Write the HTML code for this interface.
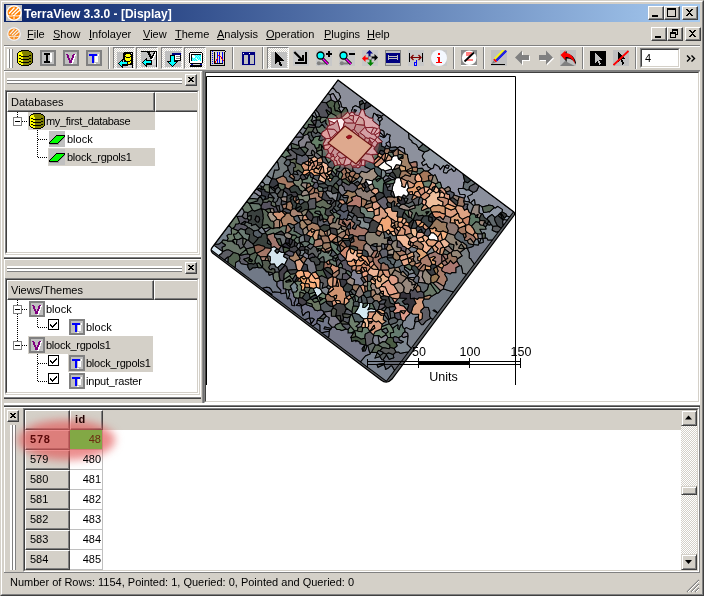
<!DOCTYPE html>
<html>
<head>
<meta charset="utf-8">
<title>TerraView</title>
<style>
*{box-sizing:border-box;margin:0;padding:0}
html,body{width:704px;height:596px;overflow:hidden;background:#d4d0c8}
body{font-family:"Liberation Sans",sans-serif;font-size:11px;color:#000;position:relative;opacity:0.999}
.abs{position:absolute}
#frame{position:absolute;left:0;top:0;width:704px;height:596px;background:#d4d0c8;
 border-top:1px solid #d4d0c8;border-left:1px solid #d4d0c8;border-right:1px solid #404040;border-bottom:1px solid #404040}
#frame2{position:absolute;left:1px;top:1px;width:702px;height:594px;
 border-top:1px solid #fff;border-left:1px solid #fff;border-right:1px solid #808080;border-bottom:1px solid #808080}
#title{position:absolute;left:4px;top:4px;width:696px;height:18px;background:linear-gradient(90deg,#0a246a 0%,#a6caf0 100%)}
#title .txt{position:absolute;left:20px;top:2px;color:#fff;font-weight:bold;font-size:12px;line-height:16px;white-space:nowrap}
.wbtn{position:absolute;width:16px;height:14px;background:#d4d0c8;
 border-top:1px solid #fff;border-left:1px solid #fff;border-right:1px solid #404040;border-bottom:1px solid #404040}
.wbtn:before{content:"";position:absolute;left:0;top:0;width:13px;height:11px;border-right:1px solid #808080;border-bottom:1px solid #808080}
.menu{position:absolute;top:23px;left:4px;width:696px;height:20px}
.menu span{position:absolute;top:5px;line-height:13px;font-size:11px;white-space:nowrap}
.menu u{text-decoration:underline}
.sunken{border-top:1px solid #808080;border-left:1px solid #808080;border-right:1px solid #fff;border-bottom:1px solid #fff}
.sunken2{border-top:1px solid #404040;border-left:1px solid #404040;border-right:1px solid #d4d0c8;border-bottom:1px solid #d4d0c8}
.raised{border-top:1px solid #fff;border-left:1px solid #fff;border-right:1px solid #808080;border-bottom:1px solid #808080}
.t{position:absolute;white-space:nowrap;line-height:13px;font-size:11px}
.hl{background:#d4d0c8}

.hdl{height:3px;border-top:2px solid #fff;border-bottom:1px solid #808080}
.vhdl{width:3px;border-left:2px solid #fff;border-right:1px solid #808080}
.cbtn{position:absolute;width:12px;height:12px;background:#d4d0c8;border-top:1px solid #fff;border-left:1px solid #fff;border-right:1px solid #404040;border-bottom:1px solid #404040}
.cbtn:before{content:"";position:absolute;left:0;top:0;width:9px;height:9px;border-right:1px solid #808080;border-bottom:1px solid #808080}
.hdr{background:#d4d0c8;border-top:1px solid #fff;border-left:1px solid #fff;border-right:1px solid #404040;border-bottom:1px solid #404040}
.hdr:before{content:"";position:absolute;left:0;top:0;right:0;bottom:0;border-right:1px solid #808080;border-bottom:1px solid #808080}
.hdr span{position:absolute;left:3px;top:2px;line-height:14px;font-size:11px}

.ic{shape-rendering:crispEdges;overflow:visible}
.tog{width:22px;height:22px;border-top:1px solid #808080;border-left:1px solid #808080;border-right:1px solid #fff;border-bottom:1px solid #fff;background:repeating-conic-gradient(#fff 0% 25%,#d4d0c8 0% 50%) 0 0/2px 2px}

.dith{background:repeating-conic-gradient(#fff 0% 25%,#d4d0c8 0% 50%) 0 0/2px 2px}
.sbtn{width:16px;height:16px;background:#d4d0c8;border-top:1px solid #d4d0c8;border-left:1px solid #d4d0c8;border-right:1px solid #404040;border-bottom:1px solid #404040;box-shadow:inset 1px 1px 0 #fff,inset -1px -1px 0 #808080}

.doth{height:1px;background:repeating-linear-gradient(90deg,#000 0 1px,transparent 1px 2px)}
.dotv{width:1px;background:repeating-linear-gradient(180deg,#000 0 1px,transparent 1px 2px)}
</style>
</head>
<body>
<svg width="0" height="0" style="position:absolute">
<defs>
<symbol id="i-box" viewBox="0 0 16 16">
<rect x="0" y="0" width="16" height="16" fill="#808080"/><rect x="2" y="2" width="12" height="12" fill="#c0c0c0"/>
</symbol>
<symbol id="i-I" viewBox="0 0 16 16"><use href="#i-box"/>
<path d="M10 3h2v9h-2z" fill="#fff"/>
<path d="M4 3h6v2h-2v6h2v2h-6v-2h2v-6h-2z" fill="#000"/>
</symbol>
<symbol id="i-V" viewBox="0 0 16 16"><use href="#i-box"/>
<path d="M7 13l1 1 2 0 3 -9 -1 -1z" fill="#fff"/>
<path d="M3 4h2l2.500 6 2.500 -6h2l-3.500 9h-2z" fill="#800080"/>
</symbol>
<symbol id="i-T" viewBox="0 0 16 16"><use href="#i-box"/>
<path d="M9 6h4v-2h-1v8h-3z" fill="#fff"/><path d="M8 13h2v1h-2z" fill="#fff"/>
<path d="M3 4h8v2h-3v7h-2v-7h-3z" fill="#00f"/>
</symbol>

<symbol id="i-table" viewBox="0 0 16 16">
<rect width="16" height="16" fill="#c8c8c8"/>
<rect x="2" y="2" width="13" height="13" fill="#000080"/>
<rect x="3.500" y="5" width="4.500" height="9" fill="#c0c0c0"/>
<rect x="9.500" y="5" width="4.500" height="9" fill="#c0c0c0"/>
<rect x="3" y="3" width="1" height="1" fill="#fff"/><rect x="9" y="3" width="1" height="1" fill="#fff"/>
</symbol>
<symbol id="i-pointer" viewBox="0 0 16 16">
<rect width="16" height="16" fill="#c0c0c0"/>
<path d="M4 0v12l3 -3 2.300 5.500 2 -1 -2.300 -5 h4z" fill="#000"/>
</symbol>
<symbol id="i-corner" viewBox="0 0 16 16">
<rect width="16" height="16" fill="#c8c8c8"/>
<path d="M1.300 2 l7.500 7.500" stroke="#000" stroke-width="2.200" shape-rendering="auto"/>
<path d="M5 9.500h5v-4.500" stroke="#000" stroke-width="2" fill="none"/>
<path d="M2 13h11v-11.300" stroke="#000" stroke-width="2" fill="none"/>
</symbol>
<symbol id="i-zoomin" viewBox="0 0 16 16">
<rect width="16" height="16" fill="#c8c8c8"/>
<circle cx="2.800" cy="13.300" r="2" fill="#808080" shape-rendering="auto"/><path d="M2.800 13.500h6" stroke="#808080" stroke-width="2" stroke-linecap="round" fill="none" shape-rendering="auto"/>
<path d="M6.500 8.500l5.500 5.500" stroke="#000" stroke-width="3" shape-rendering="auto"/>
<path d="M6.500 8.500l5.500 5.500" stroke="#f0f" stroke-width="1.400" shape-rendering="auto"/>
<circle cx="4.500" cy="5.500" r="3.500" fill="#0ff" stroke="#000" stroke-width="1.300" shape-rendering="auto"/>
<path d="M10 3.500h6M13 0.500v6" stroke="#000" stroke-width="2"/>
</symbol>
<symbol id="i-zoomout" viewBox="0 0 16 16">
<rect width="16" height="16" fill="#c8c8c8"/>
<circle cx="2.800" cy="13.300" r="2" fill="#808080" shape-rendering="auto"/><path d="M2.800 13.500h6" stroke="#808080" stroke-width="2" stroke-linecap="round" fill="none" shape-rendering="auto"/>
<path d="M6.500 8.500l5.500 5.500" stroke="#000" stroke-width="3" shape-rendering="auto"/>
<path d="M6.500 8.500l5.500 5.500" stroke="#f0f" stroke-width="1.400" shape-rendering="auto"/>
<circle cx="4.500" cy="5.500" r="3.500" fill="#0ff" stroke="#000" stroke-width="1.300" shape-rendering="auto"/>
<path d="M10 3.500h6" stroke="#000" stroke-width="2"/>
</symbol>
<symbol id="i-pan" viewBox="0 0 16 16">
<rect width="16" height="16" fill="#c8c8c8"/>
<path d="M7.500 0l3.500 3.500h-2.500v3.500h-2v-3.500h-2.500z" fill="#000080" shape-rendering="auto"/>
<path d="M16 7.500l-3.500 3.500v-2.500h-3.500v-2h3.500v-2.500z" fill="#000" shape-rendering="auto"/>
<path d="M8.500 16l-3.500 -3.500h2.500v-3.500h2v3.500h2.500z" fill="#008000" shape-rendering="auto"/>
<path d="M0 8.500l3.500 -3.500v2.500h3.500v2h-3.500v2.500z" fill="#f00" shape-rendering="auto"/>
<rect x="6.500" y="6.500" width="3" height="3" fill="#c0c0c0" stroke="#808080"/>
</symbol>
<symbol id="i-bluerect" viewBox="0 0 16 16">
<rect x="0.500" y="0.500" width="15" height="15" fill="#c0c0c0" stroke="#808080"/>
<rect x="1" y="3" width="14" height="10" fill="#000080"/>
<path d="M3.500 5v5M12.500 5v5M4 6.500h8M4 8.500h8" stroke="#c0c0c0" stroke-width="1" fill="none"/>
</symbol>
<symbol id="i-dist" viewBox="0 0 16 16">
<rect width="16" height="16" fill="#c8c8c8"/>
<path d="M1.500 3v9M14.500 3v9" stroke="#000" stroke-width="1.300"/>
<path d="M3 7.500h10" stroke="#800000" stroke-width="1.300"/>
<path d="M5.500 5 l-2.500 2.500 l2.500 2.500 M10.500 5 l2.500 2.500 l-2.500 2.500" stroke="#800000" stroke-width="1.300" fill="none" shape-rendering="auto"/>
<path d="M8.500 10v5h-2.500v-3h2.500" stroke="#00f" stroke-width="1" fill="none"/>
</symbol>
<symbol id="i-info" viewBox="0 0 16 16">
<rect width="16" height="16" fill="#c8c8c8"/>
<circle cx="8" cy="8" r="8" fill="#f4f8ff" shape-rendering="auto"/>
<path d="M7 3h2v2h-2z M5.500 6.500h3.500v5h2v1.500h-6v-1.500h2v-3.500h-1.500z" fill="#f00"/>
</symbol>
<symbol id="i-nodraw" viewBox="0 0 16 16">
<rect width="16" height="16" fill="#8c8c8c"/><path d="M0 15.500h16" stroke="#fff"/>
<circle cx="8.200" cy="7.800" r="7.300" fill="#fff" shape-rendering="auto"/>
<path d="M5 2h6v4h-6zM5 9h7v2h-7z" fill="#ff8080"/>
<path d="M3.500 11.500l9.500 -9" stroke="#000" stroke-width="1.800" shape-rendering="auto"/>
</symbol>
<symbol id="i-pencil" viewBox="0 0 16 16">
<rect width="16" height="16" fill="#c0c0c0"/>
<path d="M3.500 9 l9.500 -9.500" stroke="#ff0" stroke-width="1.600" shape-rendering="auto"/>
<path d="M4.600 10.100 l10 -10" stroke="#000080" stroke-width="1" shape-rendering="auto"/>
<path d="M5.500 11 l10 -10" stroke="#00f" stroke-width="1.300" shape-rendering="auto"/>
<path d="M2.800 9.200l2.700 2.700" stroke="#f00" stroke-width="1.600" shape-rendering="auto"/>
<path d="M0.500 14 l2 -3.500 l2 2z" fill="#808080" shape-rendering="auto"/>
<path d="M0 14.500h14" stroke="#000" stroke-width="1.300"/>
</symbol>
<symbol id="i-left" viewBox="0 0 16 16">
<path d="M0 7.500l7 -7v4.500h7v5h-7v4.500z" fill="#fff" transform="translate(1,1)" shape-rendering="auto"/>
<path d="M0 7.500l7 -7v4.500h7v5h-7v4.500z" fill="#808080" shape-rendering="auto"/>
</symbol>
<symbol id="i-right" viewBox="0 0 16 16">
<path d="M15 7.500l-7 -7v4.500h-7v5h7v4.500z" fill="#fff" transform="translate(1,1)" shape-rendering="auto"/>
<path d="M15 7.500l-7 -7v4.500h-7v5h7v4.500z" fill="#808080" shape-rendering="auto"/>
</symbol>
<symbol id="i-undo" viewBox="0 0 16 16">
<rect width="16" height="16" fill="#c0c0c0"/>
<path d="M0 16 l5 -5 l10 5z" fill="#808080" shape-rendering="auto"/>
<path d="M1 5 l5 -5 v3 c5 0 9 4 10 12 c-2 -5 -5 -7.500 -10 -7.500 v3.500z" fill="#000" shape-rendering="auto" transform="translate(0.700,1)"/>
<path d="M0.500 5 l5 -4.500 v2.500 c5 0 9 4 9.500 11 c-2 -5 -5 -7 -9.500 -7 v3z" fill="#f00" shape-rendering="auto"/>
</symbol>
<symbol id="i-blackptr" viewBox="0 0 16 16">
<rect width="16" height="15" fill="#000"/>
<path d="M5 1v11l2.500 -2.500 2 4.500 1.500 -0.800 -2 -4.200 h3.500z" fill="#c0c0c0"/>
</symbol>
<symbol id="i-ptrred" viewBox="0 0 16 16">
<rect width="16" height="16" fill="#c0c0c0"/>
<path d="M5 1v11l2.500 -2.500 2 5 1.800 -0.800 -2.200 -4.700 h3.500z" fill="#000"/>
<path d="M0.500 15 l15 -14" stroke="#f00" stroke-width="1.800" shape-rendering="auto"/>
</symbol>
<symbol id="i-globe" viewBox="0 0 16 16">
<circle cx="8" cy="8" r="7.800" fill="#fff"/>
<circle cx="8" cy="8" r="6.400" fill="#ff8000"/>
<path d="M3 8.500L8.500 2.500M5.500 9.500L12 3M8.500 9.800L14 5" stroke="#fff" stroke-width="1.300" fill="none"/>
<path d="M1.500 10.500c2.500 0.800 4.500 0.800 6.500 -0.200c2 1 4 1 6.500 -0.300M8 10.500v3.500" stroke="#fff" stroke-width="1" fill="none"/>
</symbol>
<symbol id="i-dbarrow" viewBox="0 0 16 16"><rect width="16" height="16" fill="#c0c0c0"/><path fill="#000" d="M7 0h9v1h-9zM6 1h8v1h-8zM15 1h1v1h-1zM6 2h3v1h-3zM13 2h3v1h-3zM6 3h2v1h-2zM14 3h2v1h-2zM6 4h3v1h-3zM13 4h3v1h-3zM6 5h2v1h-2zM9 5h4v1h-4zM14 5h2v1h-2zM6 6h2v1h-2zM14 6h2v1h-2zM5 7h3v1h-3zM14 7h2v1h-2zM4 8h2v1h-2zM7 8h2v1h-2zM13 8h3v1h-3zM3 9h1v1h-1zM5 9h1v1h-1zM7 9h6v1h-6zM14 9h2v1h-2zM2 10h1v1h-1zM10 10h1v1h-1zM14 10h2v1h-2zM1 11h1v1h-1zM10 11h1v1h-1zM13 11h3v1h-3zM2 12h1v1h-1zM5 12h11v1h-11zM3 13h1v1h-1zM5 13h6v1h-6zM15 13h1v1h-1zM4 14h2v1h-2zM15 14h1v1h-1zM5 15h1v1h-1zM15 15h1v1h-1z"/><path fill="#fff" d="M14 1h1v1h-1z"/><path fill="#ff0" d="M9 2h4v1h-4zM8 3h6v1h-6zM9 4h4v1h-4zM8 5h1v1h-1zM13 5h1v1h-1zM8 6h6v1h-6zM8 7h6v1h-6zM9 8h4v1h-4zM13 9h1v1h-1zM11 10h3v1h-3zM11 11h2v1h-2z"/><path fill="#0ff" d="M4 9h1v1h-1zM3 10h7v1h-7zM2 11h8v1h-8zM3 12h2v1h-2zM4 13h1v1h-1z"/><path fill="#d8d8d8" d="M11 13h4v1h-4zM9 14h5v1h-5z"/></symbol>
<symbol id="i-varrow" viewBox="0 0 16 16"><rect width="16" height="16" fill="#c0c0c0"/><path fill="#000" d="M0 0h16v1h-16zM6 1h3v1h-3zM13 1h1v1h-1zM15 1h1v1h-1zM7 2h2v1h-2zM12 2h2v1h-2zM15 2h1v1h-1zM7 3h3v1h-3zM12 3h1v1h-1zM15 3h1v1h-1zM8 4h2v1h-2zM11 4h2v1h-2zM15 4h1v1h-1zM8 5h4v1h-4zM15 5h1v1h-1zM9 6h3v1h-3zM15 6h1v1h-1zM5 7h1v1h-1zM9 7h2v1h-2zM15 7h1v1h-1zM4 8h2v1h-2zM15 8h1v1h-1zM3 9h1v1h-1zM5 9h6v1h-6zM15 9h1v1h-1zM2 10h1v1h-1zM10 10h1v1h-1zM15 10h1v1h-1zM1 11h1v1h-1zM10 11h1v1h-1zM15 11h1v1h-1zM2 12h1v1h-1zM5 12h6v1h-6zM15 12h1v1h-1zM3 13h1v1h-1zM5 13h6v1h-6zM15 13h1v1h-1zM4 14h2v1h-2zM15 14h1v1h-1zM5 15h1v1h-1zM15 15h1v1h-1z"/><path fill="#fff" d="M14 1h1v1h-1zM14 2h1v1h-1zM13 3h2v1h-2zM13 4h1v1h-1zM12 5h2v1h-2zM12 6h1v1h-1zM11 7h2v1h-2zM10 8h2v1h-2z"/><path fill="#c0c0c0" d="M9 2h2v1h-2zM10 3h1v1h-1z"/><path fill="#0ff" d="M4 9h1v1h-1zM3 10h7v1h-7zM2 11h8v1h-8zM3 12h2v1h-2zM4 13h1v1h-1z"/><path fill="#d8d8d8" d="M11 9h4v1h-4zM11 10h4v1h-4zM11 11h4v1h-4zM11 12h4v1h-4zM11 13h4v1h-4z"/></symbol>
<symbol id="i-downwin" viewBox="0 0 16 16"><rect width="16" height="16" fill="#c0c0c0"/><path fill="#000080" d="M7 2h9v1h-9zM7 3h9v1h-9z"/><path fill="#000" d="M5 4h5v1h-5zM15 4h1v1h-1zM5 5h1v1h-1zM9 5h1v1h-1zM15 5h1v1h-1zM5 6h1v1h-1zM9 6h1v1h-1zM15 6h1v1h-1zM5 7h1v1h-1zM9 7h1v1h-1zM15 7h1v1h-1zM5 8h1v1h-1zM9 8h1v1h-1zM15 8h1v1h-1zM5 9h1v1h-1zM9 9h7v1h-7zM2 10h4v1h-4zM9 10h4v1h-4zM3 11h1v1h-1zM11 11h1v1h-1zM4 12h1v1h-1zM10 12h1v1h-1zM5 13h1v1h-1zM9 13h1v1h-1zM6 14h1v1h-1zM8 14h1v1h-1zM7 15h1v1h-1z"/><path fill="#fff" d="M10 4h5v1h-5zM10 5h1v1h-1zM10 6h5v1h-5zM10 7h1v1h-1zM10 8h5v1h-5z"/><path fill="#0ff" d="M6 5h3v1h-3zM6 6h3v1h-3zM6 7h3v1h-3zM6 8h3v1h-3zM6 9h3v1h-3zM6 10h3v1h-3zM4 11h7v1h-7zM5 12h5v1h-5zM6 13h3v1h-3zM7 14h1v1h-1z"/><path fill="#808080" d="M11 5h4v1h-4zM11 7h4v1h-4z"/></symbol>
<symbol id="i-monitor" viewBox="0 0 14 15"><path fill="#000" d="M1 0h12v1h-12zM0 1h1v1h-1zM13 1h1v1h-1zM0 2h1v1h-1zM2 2h10v1h-10zM13 2h1v1h-1zM0 3h1v1h-1zM2 3h1v1h-1zM13 3h1v1h-1zM0 4h1v1h-1zM2 4h1v1h-1zM13 4h1v1h-1zM0 5h1v1h-1zM2 5h1v1h-1zM13 5h1v1h-1zM0 6h1v1h-1zM2 6h1v1h-1zM13 6h1v1h-1zM0 7h1v1h-1zM2 7h1v1h-1zM13 7h1v1h-1zM0 8h1v1h-1zM2 8h1v1h-1zM13 8h1v1h-1zM0 9h1v1h-1zM13 9h1v1h-1zM0 10h1v1h-1zM13 10h1v1h-1zM1 11h12v1h-12zM1 13h12v1h-12zM1 14h12v1h-12z"/><path fill="#fff" d="M1 1h12v1h-12zM1 2h1v1h-1zM12 2h1v1h-1zM1 3h1v1h-1zM3 3h2v1h-2zM12 3h1v1h-1zM1 4h1v1h-1zM3 4h3v1h-3zM12 4h1v1h-1zM1 5h1v1h-1zM4 5h2v1h-2zM12 5h1v1h-1zM1 6h1v1h-1zM7 6h1v1h-1zM12 6h1v1h-1zM1 7h1v1h-1zM8 7h1v1h-1zM12 7h1v1h-1zM1 8h1v1h-1zM9 8h2v1h-2zM12 8h1v1h-1zM1 9h12v1h-12zM1 10h12v1h-12z"/><path fill="#80ffff" d="M5 3h1v1h-1zM7 3h1v1h-1zM9 3h1v1h-1zM6 4h1v1h-1zM8 4h1v1h-1zM10 4h1v1h-1zM3 5h1v1h-1zM7 5h1v1h-1zM9 5h1v1h-1zM11 5h1v1h-1zM4 6h1v1h-1zM6 6h1v1h-1zM9 6h1v1h-1zM3 7h1v1h-1zM5 7h1v1h-1zM7 7h1v1h-1zM10 7h1v1h-1zM4 8h1v1h-1zM6 8h1v1h-1zM8 8h1v1h-1z"/><path fill="#0ff" d="M6 3h1v1h-1zM8 3h1v1h-1zM10 3h2v1h-2zM7 4h1v1h-1zM9 4h1v1h-1zM11 4h1v1h-1zM6 5h1v1h-1zM8 5h1v1h-1zM10 5h1v1h-1zM3 6h1v1h-1zM5 6h1v1h-1zM8 6h1v1h-1zM10 6h2v1h-2zM4 7h1v1h-1zM6 7h1v1h-1zM9 7h1v1h-1zM11 7h1v1h-1zM3 8h1v1h-1zM5 8h1v1h-1zM7 8h1v1h-1zM11 8h1v1h-1z"/><path fill="#0000c0" d="M2 12h2v1h-2zM11 12h2v1h-2z"/><path fill="#d8d8d8" d="M5 12h5v1h-5z"/></symbol>
<symbol id="i-graph" viewBox="0 0 17 16"><rect width="17" height="16" fill="#d4d0c8"/><path fill="#000" d="M0 0h16v1h-16zM0 1h1v1h-1zM16 1h1v1h-1zM0 2h1v1h-1zM4 2h1v1h-1zM15 2h1v1h-1zM0 3h1v1h-1zM4 3h1v1h-1zM15 3h1v1h-1zM0 4h1v1h-1zM4 4h1v1h-1zM15 4h1v1h-1zM0 5h1v1h-1zM4 5h1v1h-1zM15 5h1v1h-1zM0 6h1v1h-1zM4 6h1v1h-1zM15 6h1v1h-1zM0 7h1v1h-1zM4 7h1v1h-1zM15 7h1v1h-1zM0 8h1v1h-1zM4 8h1v1h-1zM15 8h1v1h-1zM0 9h1v1h-1zM4 9h1v1h-1zM15 9h1v1h-1zM0 10h1v1h-1zM4 10h1v1h-1zM15 10h1v1h-1zM0 11h1v1h-1zM4 11h1v1h-1zM15 11h1v1h-1zM0 12h1v1h-1zM4 12h1v1h-1zM15 12h1v1h-1zM0 13h1v1h-1zM4 13h10v1h-10zM15 13h1v1h-1zM0 14h1v1h-1zM15 14h1v1h-1zM0 15h16v1h-16z"/><path fill="#d4d0c8" d="M1 1h1v1h-1zM3 1h12v1h-12zM1 2h3v1h-3zM5 2h2v1h-2zM8 2h2v1h-2zM11 2h2v1h-2zM14 2h1v1h-1zM1 3h1v1h-1zM3 3h1v1h-1zM5 3h1v1h-1zM14 3h1v1h-1zM1 4h3v1h-3zM5 4h1v1h-1zM14 4h1v1h-1zM1 5h1v1h-1zM3 5h1v1h-1zM5 5h1v1h-1zM14 5h1v1h-1zM1 6h3v1h-3zM5 6h1v1h-1zM14 6h1v1h-1zM1 7h1v1h-1zM3 7h1v1h-1zM5 7h1v1h-1zM14 7h1v1h-1zM1 8h3v1h-3zM5 8h1v1h-1zM14 8h1v1h-1zM1 9h1v1h-1zM3 9h1v1h-1zM5 9h1v1h-1zM14 9h1v1h-1zM1 10h3v1h-3zM5 10h1v1h-1zM1 11h1v1h-1zM3 11h1v1h-1zM14 11h1v1h-1zM1 12h3v1h-3zM14 12h1v1h-1zM1 13h1v1h-1zM3 13h1v1h-1zM14 13h1v1h-1zM1 14h14v1h-14z"/><path fill="#00f" d="M2 1h1v1h-1zM7 2h1v1h-1zM10 2h1v1h-1zM13 2h1v1h-1zM2 3h1v1h-1zM7 3h1v1h-1zM10 3h1v1h-1zM13 3h1v1h-1zM7 4h1v1h-1zM10 4h1v1h-1zM13 4h1v1h-1zM2 5h1v1h-1zM7 5h1v1h-1zM13 5h1v1h-1zM7 6h1v1h-1zM10 6h1v1h-1zM13 6h1v1h-1zM2 7h1v1h-1zM7 7h1v1h-1zM10 7h1v1h-1zM13 7h1v1h-1zM10 8h1v1h-1zM13 8h1v1h-1zM2 9h1v1h-1zM7 9h1v1h-1zM10 9h1v1h-1zM7 10h1v1h-1zM10 10h1v1h-1zM13 10h1v1h-1zM2 11h1v1h-1zM7 11h1v1h-1zM10 11h1v1h-1zM13 11h1v1h-1zM7 12h1v1h-1zM10 12h1v1h-1zM13 12h1v1h-1zM2 13h1v1h-1z"/><path fill="#e8e4c8" d="M6 3h1v1h-1zM8 3h2v1h-2zM11 3h2v1h-2zM6 4h1v1h-1zM8 4h2v1h-2zM11 4h2v1h-2zM6 5h1v1h-1zM8 5h1v1h-1zM11 5h2v1h-2zM6 6h1v1h-1zM9 6h1v1h-1zM12 6h1v1h-1zM6 7h1v1h-1zM9 7h1v1h-1zM11 7h1v1h-1zM6 8h1v1h-1zM8 8h2v1h-2zM11 8h1v1h-1zM8 9h2v1h-2zM11 9h2v1h-2zM8 10h2v1h-2zM11 10h2v1h-2zM6 11h1v1h-1zM8 11h2v1h-2zM11 11h2v1h-2zM6 12h1v1h-1zM8 12h2v1h-2zM11 12h2v1h-2z"/><path fill="#f00" d="M9 5h2v1h-2zM8 6h1v1h-1zM11 6h1v1h-1zM8 7h1v1h-1zM12 7h1v1h-1zM7 8h1v1h-1zM12 8h1v1h-1zM6 9h1v1h-1zM13 9h1v1h-1zM6 10h1v1h-1zM14 10h1v1h-1zM5 11h1v1h-1zM5 12h1v1h-1z"/></symbol>
<symbol id="i-db" viewBox="0 0 16 16"><path fill="#000" d="M4 0h8v1h-8zM2 1h2v1h-2zM12 1h2v1h-2zM1 2h1v1h-1zM14 2h1v1h-1zM0 3h1v1h-1zM15 3h1v1h-1zM0 4h1v1h-1zM15 4h1v1h-1zM0 5h1v1h-1zM2 5h2v1h-2zM12 5h2v1h-2zM15 5h1v1h-1zM0 6h1v1h-1zM4 6h8v1h-8zM15 6h1v1h-1zM0 7h1v1h-1zM15 7h1v1h-1zM0 8h1v1h-1zM2 8h2v1h-2zM12 8h2v1h-2zM15 8h1v1h-1zM0 9h1v1h-1zM4 9h8v1h-8zM15 9h1v1h-1zM0 10h1v1h-1zM15 10h1v1h-1zM0 11h1v1h-1zM2 11h2v1h-2zM12 11h2v1h-2zM15 11h1v1h-1zM0 12h1v1h-1zM4 12h8v1h-8zM15 12h1v1h-1zM1 13h1v1h-1zM14 13h1v1h-1zM2 14h2v1h-2zM12 14h2v1h-2zM4 15h8v1h-8z"/><path fill="#808000" d="M4 1h8v1h-8zM5 2h9v1h-9zM5 3h10v1h-10zM6 4h9v1h-9zM6 5h6v1h-6zM14 5h1v1h-1zM12 6h3v1h-3zM6 7h9v1h-9zM6 8h6v1h-6zM14 8h1v1h-1zM12 9h3v1h-3zM6 10h9v1h-9zM6 11h6v1h-6zM14 11h1v1h-1zM12 12h3v1h-3zM6 13h8v1h-8zM6 14h6v1h-6z"/><path fill="#ff0" d="M2 2h3v1h-3zM1 3h4v1h-4zM1 4h5v1h-5zM1 5h1v1h-1zM4 5h2v1h-2zM1 6h3v1h-3zM1 7h5v1h-5zM1 8h1v1h-1zM4 8h2v1h-2zM1 9h3v1h-3zM1 10h5v1h-5zM1 11h1v1h-1zM4 11h2v1h-2zM1 12h3v1h-3zM2 13h4v1h-4zM4 14h2v1h-2z"/></symbol>
<symbol id="i-layer" viewBox="0 0 16 16"><path fill="#000" d="M7 4h9v1h-9zM6 5h1v1h-1zM15 5h1v1h-1zM5 6h1v1h-1zM14 6h1v1h-1zM4 7h1v1h-1zM13 7h1v1h-1zM3 8h1v1h-1zM12 8h1v1h-1zM2 9h1v1h-1zM11 9h1v1h-1zM1 10h1v1h-1zM10 10h1v1h-1zM0 11h1v1h-1zM9 11h1v1h-1zM0 12h9v1h-9z"/><path fill="#00ff00" d="M7 5h8v1h-8zM6 6h8v1h-8zM5 7h8v1h-8zM4 8h8v1h-8zM3 9h8v1h-8zM2 10h8v1h-8zM1 11h8v1h-8z"/><path fill="#989898" d="M15 6h1v1h-1zM14 7h1v1h-1zM13 8h1v1h-1zM12 9h1v1h-1zM11 10h1v1h-1zM10 11h1v1h-1zM9 12h1v1h-1zM1 13h9v1h-9z"/></symbol>
</defs></svg>
<div id="frame"></div><div id="frame2"></div>
<div id="title"><div class="txt">TerraView 3.3.0 - [Display]</div></div>
<div class="abs" style="left:6px;top:5px;width:16px;height:16px;background:#c0c0c0"></div>
<svg class="abs" style="left:6px;top:5px" width="16" height="16"><use href="#i-globe"/></svg>
<div class="abs" style="left:7px;top:27px;width:14px;height:14px;background:#cfcfcf"></div>
<svg class="abs" style="left:7px;top:27px;opacity:0.85" width="14" height="14"><use href="#i-globe"/></svg>
<!-- title buttons -->
<div class="wbtn" style="left:648px;top:6px"><svg width="14" height="12" style="position:absolute;left:0;top:0" shape-rendering="crispEdges"><rect x="3" y="8" width="6" height="2" fill="#000"/></svg></div>
<div class="wbtn" style="left:664px;top:6px"><svg width="14" height="12" style="position:absolute;left:0;top:0" shape-rendering="crispEdges"><rect x="2.500" y="1.500" width="8" height="8" fill="none" stroke="#000"/><rect x="2" y="1" width="9" height="2" fill="#000"/></svg></div>
<div class="wbtn" style="left:682px;top:6px"><svg width="14" height="12" style="position:absolute;left:0;top:0" shape-rendering="crispEdges"><path d="M3 2h2v1h1v1h1v-1h1v-1h2v1h-1v1h-1v1h-1v1h1v1h1v1h1v1h-2v-1h-1v-1h-1v1h-1v1h-2v-1h1v-1h1v-1h1v-1h-1v-1h-1v-1h-1z" fill="#000"/></svg></div>
<div class="menu">
<span style="left:23px"><u>F</u>ile</span>
<span style="left:49px"><u>S</u>how</span>
<span style="left:85px"><u>I</u>nfolayer</span>
<span style="left:139px"><u>V</u>iew</span>
<span style="left:171px"><u>T</u>heme</span>
<span style="left:213px"><u>A</u>nalysis</span>
<span style="left:262px"><u>O</u>peration</span>
<span style="left:320px"><u>P</u>lugins</span>
<span style="left:363px"><u>H</u>elp</span>
</div>
<div class="wbtn" style="left:651px;top:27px"><svg width="14" height="12" style="position:absolute;left:0;top:0" shape-rendering="crispEdges"><rect x="3" y="8" width="6" height="2" fill="#000"/></svg></div>
<div class="wbtn" style="left:667px;top:27px"><svg width="14" height="12" style="position:absolute;left:0;top:0" shape-rendering="crispEdges"><rect x="4.500" y="1.500" width="5" height="5" fill="none" stroke="#000"/><rect x="4" y="1" width="6" height="2" fill="#000"/><rect x="2.500" y="4.500" width="5" height="5" fill="#d4d0c8" stroke="#000"/><rect x="2" y="4" width="6" height="2" fill="#000"/></svg></div>
<div class="wbtn" style="left:685px;top:27px"><svg width="14" height="12" style="position:absolute;left:0;top:0" shape-rendering="crispEdges"><path d="M3 2h2v1h1v1h1v-1h1v-1h2v1h-1v1h-1v1h-1v1h1v1h1v1h1v1h-2v-1h-1v-1h-1v1h-1v1h-2v-1h1v-1h1v-1h1v-1h-1v-1h-1v-1h-1z" fill="#000"/></svg></div>

<!-- toolbar -->
<div class="abs" style="left:4px;top:45px;width:696px;height:1px;background:#808080"></div>
<div class="abs" style="left:4px;top:46px;width:696px;height:1px;background:#fff"></div>
<div class="abs" style="left:4px;top:46px;width:1px;height:24px;background:#fff"></div>
<div class="abs vhdl" style="left:7px;top:49px;height:19px"></div><div class="abs vhdl" style="left:10px;top:49px;height:19px"></div>
<svg class="abs ic" style="left:17px;top:50px" width="16" height="16"><use href="#i-db"/></svg>
<svg class="abs ic" style="left:40px;top:50px" width="16" height="16"><use href="#i-I"/></svg>
<svg class="abs ic" style="left:63px;top:50px" width="16" height="16"><use href="#i-V"/></svg>
<svg class="abs ic" style="left:86px;top:50px" width="16" height="16"><use href="#i-T"/></svg>
<div class="abs" style="left:108px;top:47px;width:2px;height:22px;border-left:1px solid #808080;border-right:1px solid #fff"></div>
<div class="abs tog" style="left:113px;top:47px"></div>
<div class="abs tog" style="left:136px;top:47px"></div>
<div class="abs tog" style="left:161px;top:47px"></div>
<div class="abs tog" style="left:184px;top:47px"></div>
<div class="abs" style="left:232px;top:47px;width:2px;height:22px;border-left:1px solid #808080;border-right:1px solid #fff"></div>
<div class="abs" style="left:262px;top:47px;width:2px;height:22px;border-left:1px solid #808080;border-right:1px solid #fff"></div>
<div class="abs tog" style="left:267px;top:47px"></div>
<div class="abs" style="left:453px;top:47px;width:2px;height:22px;border-left:1px solid #808080;border-right:1px solid #fff"></div>
<div class="abs" style="left:483px;top:47px;width:2px;height:22px;border-left:1px solid #808080;border-right:1px solid #fff"></div>
<div class="abs" style="left:582px;top:47px;width:2px;height:22px;border-left:1px solid #808080;border-right:1px solid #fff"></div>
<div class="abs" style="left:635px;top:47px;width:2px;height:22px;border-left:1px solid #808080;border-right:1px solid #fff"></div>
<div class="abs sunken" style="left:640px;top:48px;width:40px;height:20px"><div class="sunken2" style="width:100%;height:100%;background:#fff"></div></div>
<div class="t" style="left:645px;top:52px">4</div>
<svg class="abs ic" style="left:117px;top:52px" width="16" height="16"><use href="#i-dbarrow"/></svg>
<svg class="abs ic" style="left:141px;top:51px" width="16" height="16"><use href="#i-varrow"/></svg>
<svg class="abs ic" style="left:165px;top:51px" width="16" height="16"><use href="#i-downwin"/></svg>
<svg class="abs ic" style="left:189px;top:52px" width="14" height="15"><use href="#i-monitor"/></svg>
<svg class="abs ic" style="left:210px;top:50px" width="16" height="16"><use href="#i-graph"/></svg>
<svg class="abs ic" style="left:240px;top:50px" width="16" height="16"><use href="#i-table"/></svg>
<svg class="abs ic" style="left:271px;top:52px" width="16" height="16"><use href="#i-pointer"/></svg>
<svg class="abs ic" style="left:293px;top:50px" width="16" height="16"><use href="#i-corner"/></svg>
<svg class="abs ic" style="left:316px;top:50px" width="16" height="16"><use href="#i-zoomin"/></svg>
<svg class="abs ic" style="left:339px;top:50px" width="16" height="16"><use href="#i-zoomout"/></svg>
<svg class="abs ic" style="left:362px;top:50px" width="16" height="16"><use href="#i-pan"/></svg>
<svg class="abs ic" style="left:385px;top:50px" width="16" height="16"><use href="#i-bluerect"/></svg>
<svg class="abs ic" style="left:408px;top:50px" width="16" height="16"><use href="#i-dist"/></svg>
<svg class="abs ic" style="left:431px;top:50px" width="16" height="16"><use href="#i-info"/></svg>
<svg class="abs ic" style="left:461px;top:50px" width="16" height="16"><use href="#i-nodraw"/></svg>
<svg class="abs ic" style="left:491px;top:50px" width="16" height="16"><use href="#i-pencil"/></svg>
<svg class="abs ic" style="left:515px;top:50px" width="16" height="16"><use href="#i-left"/></svg>
<svg class="abs ic" style="left:538px;top:50px" width="16" height="16"><use href="#i-right"/></svg>
<svg class="abs ic" style="left:560px;top:50px" width="16" height="16"><use href="#i-undo"/></svg>
<svg class="abs ic" style="left:590px;top:51px" width="16" height="16"><use href="#i-blackptr"/></svg>
<svg class="abs ic" style="left:613px;top:50px" width="16" height="16"><use href="#i-ptrred"/></svg>
<svg class="abs" style="left:686px;top:55px" width="10" height="8"><path d="M1 0.500l3 3 -3 3M5.500 0.500l3 3 -3 3" stroke="#000" stroke-width="1.400" fill="none"/></svg>
<!-- toolbar bottom line -->
<div class="abs" style="left:4px;top:70px;width:696px;height:1px;background:#808080"></div>
<div class="abs" style="left:4px;top:71px;width:198px;height:1px;background:#fff"></div>
<!-- left dock area -->
<div class="abs" style="left:4px;top:71px;width:1px;height:328px;background:#fff"></div>
<div class="abs" style="left:200px;top:72px;width:1px;height:186px;background:#fff"></div>
<div class="abs" style="left:200px;top:260px;width:1px;height:138px;background:#fff"></div>
<div class="abs" style="left:202px;top:71px;width:1px;height:332px;background:#909090"></div>
<div class="abs" style="left:203px;top:71px;width:1px;height:332px;background:#707070"></div>
<!-- databases dock -->
<div class="abs hdl" style="left:7px;top:78px;width:175px"></div>
<div class="abs hdl" style="left:7px;top:81px;width:175px"></div>
<div class="cbtn" style="left:185px;top:74px"><svg width="10" height="10" style="position:absolute;left:0;top:0" shape-rendering="crispEdges"><path d="M2 2h2v1h-2zM6 2h2v1h-2zM3 3h4v1h-4zM4 4h2v1h-2zM3 5h4v1h-4zM2 6h2v1h-2zM6 6h2v1h-2z" fill="#000"/></svg></div>
<div class="abs sunken" style="left:5px;top:90px;width:194px;height:164px"><div class="sunken2" style="width:100%;height:100%;background:#fff"></div></div>
<div class="abs hdr" style="left:7px;top:92px;width:148px;height:20px"><span>Databases</span></div>
<div class="abs" style="left:155px;top:92px;width:42px;height:20px;overflow:hidden"><div class="abs hdr" style="left:0;top:0;width:60px;height:20px"></div></div>
<div class="abs hl" style="left:28px;top:112px;width:127px;height:18px"></div>
<div class="abs hl" style="left:48px;top:148px;width:107px;height:18px"></div>
<div class="abs" style="left:49px;top:131px;width:16px;height:16px;background:#c0c0c0"></div>
<div class="abs" style="left:49px;top:149px;width:16px;height:16px;background:#c0c0c0"></div>
<div class="t" style="left:46px;top:115px;letter-spacing:-0.33px">my_first_database</div>
<div class="t" style="left:67px;top:133px;">block</div>
<div class="t" style="left:67px;top:151px;letter-spacing:-0.25px">block_rgpols1</div>
<!-- dock separators -->
<div class="abs" style="left:4px;top:255px;width:197px;height:2px;background:#fff"></div>
<div class="abs" style="left:4px;top:257px;width:197px;height:1px;background:#808080"></div>
<div class="abs" style="left:4px;top:258px;width:197px;height:1px;background:#404040"></div>
<div class="abs" style="left:4px;top:259px;width:197px;height:1px;background:#fff"></div>
<!-- views dock -->
<div class="abs hdl" style="left:7px;top:266px;width:175px"></div>
<div class="abs hdl" style="left:7px;top:269px;width:175px"></div>
<div class="cbtn" style="left:185px;top:262px"><svg width="10" height="10" style="position:absolute;left:0;top:0" shape-rendering="crispEdges"><path d="M2 2h2v1h-2zM6 2h2v1h-2zM3 3h4v1h-4zM4 4h2v1h-2zM3 5h4v1h-4zM2 6h2v1h-2zM6 6h2v1h-2z" fill="#000"/></svg></div>
<div class="abs sunken" style="left:5px;top:278px;width:194px;height:116px"><div class="sunken2" style="width:100%;height:100%;background:#fff"></div></div>
<div class="abs hdr" style="left:7px;top:280px;width:147px;height:20px"><span>Views/Themes</span></div>
<div class="abs" style="left:154px;top:280px;width:43px;height:20px;overflow:hidden"><div class="abs hdr" style="left:0;top:0;width:60px;height:20px"></div></div>
<div class="abs hl" style="left:28px;top:336px;width:125px;height:18px"></div>
<div class="abs hl" style="left:68px;top:354px;width:85px;height:18px"></div>
<div class="t" style="left:46px;top:303px;">block</div>
<div class="t" style="left:86px;top:321px;">block</div>
<div class="t" style="left:46px;top:339px;letter-spacing:-0.25px">block_rgpols1</div>
<div class="t" style="left:86px;top:357px;letter-spacing:-0.25px">block_rgpols1</div>
<div class="t" style="left:86px;top:375px;letter-spacing:-0.2px">input_raster</div>
<div class="abs" style="left:4px;top:395px;width:197px;height:2px;background:#fff"></div>
<div class="abs" style="left:4px;top:397px;width:197px;height:1px;background:#808080"></div>
<div class="abs" style="left:4px;top:398px;width:197px;height:1px;background:#404040"></div>
<!-- tree deco -->
<div class="abs dotv" style="left:17px;top:112px;height:5px"></div>
<div class="abs doth" style="left:22px;top:121px;width:6px"></div>
<div class="abs" style="left:13px;top:117px;width:9px;height:9px;border:1px solid #808080;background:#fff"><div style="position:absolute;left:1px;top:3px;width:5px;height:1px;background:#000"></div></div>
<div class="abs dotv" style="left:37px;top:130px;height:28px"></div>
<div class="abs doth" style="left:38px;top:139px;width:10px"></div>
<div class="abs doth" style="left:38px;top:157px;width:10px"></div>
<svg class="abs ic" style="left:29px;top:113px" width="16" height="16"><use href="#i-db"/></svg>
<svg class="abs ic" style="left:49px;top:131px" width="16" height="16"><use href="#i-layer"/></svg>
<svg class="abs ic" style="left:49px;top:149px" width="16" height="16"><use href="#i-layer"/></svg>
<div class="abs dotv" style="left:17px;top:300px;height:42px"></div>
<div class="abs doth" style="left:22px;top:309px;width:6px"></div>
<div class="abs doth" style="left:22px;top:345px;width:6px"></div>
<div class="abs" style="left:13px;top:305px;width:9px;height:9px;border:1px solid #808080;background:#fff"><div style="position:absolute;left:1px;top:3px;width:5px;height:1px;background:#000"></div></div>
<div class="abs" style="left:13px;top:341px;width:9px;height:9px;border:1px solid #808080;background:#fff"><div style="position:absolute;left:1px;top:3px;width:5px;height:1px;background:#000"></div></div>
<div class="abs dotv" style="left:37px;top:318px;height:10px"></div>
<div class="abs doth" style="left:38px;top:327px;width:10px"></div>
<div class="abs dotv" style="left:37px;top:354px;height:28px"></div>
<div class="abs doth" style="left:38px;top:363px;width:10px"></div>
<div class="abs doth" style="left:38px;top:381px;width:10px"></div>
<svg class="abs ic" style="left:48px;top:319px" width="11" height="11"><rect x="0.500" y="0.500" width="10" height="10" fill="#fff" stroke="#000"/><path d="M2 5h1v1h1v1h1v-1h1v-1h1v-1h1v-1h1v2h-1v1h-1v1h-1v1h-1v1h-1v-1h-1v-1h-1z" fill="#000"/></svg>
<svg class="abs ic" style="left:48px;top:355px" width="11" height="11"><rect x="0.500" y="0.500" width="10" height="10" fill="#fff" stroke="#000"/><path d="M2 5h1v1h1v1h1v-1h1v-1h1v-1h1v-1h1v2h-1v1h-1v1h-1v1h-1v1h-1v-1h-1v-1h-1z" fill="#000"/></svg>
<svg class="abs ic" style="left:48px;top:373px" width="11" height="11"><rect x="0.500" y="0.500" width="10" height="10" fill="#fff" stroke="#000"/><path d="M2 5h1v1h1v1h1v-1h1v-1h1v-1h1v-1h1v2h-1v1h-1v1h-1v1h-1v1h-1v-1h-1v-1h-1z" fill="#000"/></svg>
<svg class="abs ic" style="left:29px;top:301px" width="16" height="16"><use href="#i-V"/></svg>
<svg class="abs ic" style="left:69px;top:319px" width="16" height="16"><use href="#i-T"/></svg>
<svg class="abs ic" style="left:29px;top:337px" width="16" height="16"><use href="#i-V"/></svg>
<svg class="abs ic" style="left:69px;top:355px" width="16" height="16"><use href="#i-T"/></svg>
<svg class="abs ic" style="left:69px;top:373px" width="16" height="16"><use href="#i-T"/></svg>
<!-- canvas -->
<div id="canvas" class="abs sunken" style="left:204px;top:71px;width:496px;height:332px"><div class="sunken2" style="width:100%;height:100%;background:#fff"></div></div>
<!-- MAP START -->
<svg class="abs" style="left:0;top:0" width="704" height="596" viewBox="0 0 704 596">
<defs><clipPath id="dia"><path d="M338 80 L513.600 211.700 Q515.500 213.500 514 215.500 L392 379 Q387 384.500 381 380 L212.500 253 Q210 250.500 212 247.500 Z"/></clipPath></defs>
<path d="M206.500 385V76.500H515.500V385" fill="none" stroke="#000" stroke-width="1"/>
<g clip-path="url(#dia)" stroke="#000" stroke-width="1.050" stroke-linejoin="round">
<path d="M200 70h330v330h-330z" fill="#5a5e62" stroke="none"/>
<path fill="#7a8372" d="M302.4 182.7L302.3 180.1L300.5 177.5L298.2 180.5L293.7 180.1L292.8 181.8L294.7 184.7L296.7 186.4L297.8 186.2L299.8 190.0L302.4 191.6L306.0 189.3L306.0 189.2L301.0 185.1Z"/>
<path fill="#7a8372" d="M309.5 199.5L309.7 199.0L309.2 194.4L302.6 196.0L300.9 194.5L297.8 194.8L297.3 195.7L298.8 199.3L299.4 199.7L302.7 199.6L304.7 201.8L307.5 202.3Z"/>
<path fill="#929aa4" d="M428.3 150.6L424.4 152.0L422.1 155.9L422.9 158.1L424.8 160.1L421.4 162.8L423.1 165.8L426.4 163.9L427.8 166.5L427.8 166.8L431.2 168.9L431.4 168.9L433.4 168.1L434.2 165.1L434.6 164.2L434.7 164.2L438.7 166.6L440.2 169.7L443.3 165.9L443.4 165.8L444.7 166.6L443.3 171.8L443.7 172.4L444.1 172.8L446.3 173.3L446.7 173.0L447.1 172.8L448.3 170.7L451.5 168.9L453.4 171.4L455.2 170.9L456.0 168.5L452.1 165.6L446.9 161.7L444.2 159.6L442.7 158.5L441.1 157.4L438.0 155.0L431.9 150.5L429.9 148.9ZM449.1 165.9L448.1 168.2L446.1 167.7L445.0 166.5L447.1 165.0Z"/>
<path fill="#929aa4" d="M423.3 144.0L421.3 142.5L418.5 140.4L417.0 139.3L408.9 133.1L408.6 133.7L408.9 138.6L411.7 140.9L412.1 142.5L416.6 144.9L416.7 145.5L418.3 147.7L418.6 148.4Z"/>
<path fill="#5d5c67" d="M249.3 257.6L250.1 254.8L247.8 253.8L239.3 255.4L239.9 258.5L239.3 260.4L240.6 263.1L242.0 264.1L245.4 264.4L247.7 264.9L248.3 263.8L248.1 262.4L244.9 260.3L243.7 259.2Z"/>
<path fill="#4e5f4a" d="M328.9 107.7L330.9 108.1L331.3 111.8L331.3 112.3L331.1 113.1L326.5 109.7L325.8 110.1L328.4 115.1L331.1 113.3L335.6 115.6L337.8 118.8L337.8 118.8L341.4 118.0L341.3 112.5L341.1 112.3L338.0 111.2L337.5 110.5L335.4 110.8L335.2 110.3L334.5 106.7L334.1 106.3L335.3 101.9L331.1 99.7L327.1 102.3L326.2 102.8Z"/>
<path fill="#5f5e65" d="M437.6 313.0L437.7 312.9L434.6 309.9L433.5 310.1L432.9 310.6Z"/>
<path fill="#5f5e65" d="M420.8 310.5L420.7 312.3L422.5 313.4L422.1 318.5L421.2 319.6L418.9 320.5L418.4 316.8L415.4 317.4L414.5 321.2L414.6 321.5L415.3 322.0L418.6 321.2L421.4 324.8L422.9 324.8L423.1 324.7L426.1 321.1L430.9 318.2L430.2 317.1L429.5 315.6L430.0 312.7L428.4 307.6L424.4 307.1Z"/>
<path fill="#697a6a" d="M332.1 210.1L330.3 210.6L330.1 211.9L332.8 214.1L332.7 214.8L334.8 217.3L333.0 219.0L332.7 222.4L335.2 222.9L337.4 218.3L339.2 218.5L340.6 215.3L336.9 213.2L336.5 212.0L333.7 212.8Z"/>
<path fill="#5f6f5f" d="M428.3 207.8L422.9 210.3L422.1 210.5L421.7 210.1L421.5 208.6L423.8 205.2L422.0 203.1L418.9 204.9L418.4 204.7L414.9 205.2L415.0 208.1L409.1 209.7L408.9 210.0L412.3 212.8L410.7 217.6L412.7 219.6L413.3 219.8L416.2 212.4L418.3 216.0L422.8 215.2L423.5 216.2L423.9 216.3L426.2 215.8L428.3 216.3L431.9 212.5L431.9 212.2L431.0 210.8L430.4 208.0ZM429.0 211.7L426.7 214.1L426.0 212.0Z"/>
<path fill="#79808a" d="M261.8 227.1L259.7 228.3L258.2 230.0L259.0 231.5L262.1 234.1L265.5 232.9L265.6 232.1L263.6 229.1Z"/>
<path fill="#5d5d67" d="M392.9 256.3L387.6 255.4L388.0 254.0L393.3 254.4Z"/>
<path fill="#8f8278" d="M409.0 281.0L411.8 282.4L411.9 285.1L411.9 285.1L415.8 284.0L413.5 287.8L414.5 288.4L415.4 288.7L417.8 284.9L417.3 283.5L417.0 283.5L413.6 281.1L413.5 280.2L407.5 277.9Z"/>
<path fill="#797e8b" d="M485.1 237.9L482.7 238.3L482.7 238.4L483.3 241.9L482.7 242.6L479.3 243.3L481.3 238.4L478.4 238.4L477.6 238.9L479.0 243.5L478.0 245.1L473.8 244.5L473.5 244.8L472.8 246.5L467.2 248.2L468.8 252.1L469.2 252.3L469.1 257.7L469.7 258.5L470.7 258.6L471.1 259.8L474.3 264.1L476.5 261.2L480.4 255.9L482.2 253.5L487.0 247.2L487.9 246.0L492.6 239.7L488.0 240.1L486.8 237.9Z"/>
<path fill="#898173" d="M368.2 231.5L366.2 233.3L365.0 235.5L365.3 240.7L366.6 242.3L366.6 243.0L370.3 245.9L371.3 245.6L372.5 244.4L376.0 243.5L377.1 243.8L376.7 246.6L381.6 245.9L382.0 243.5L384.7 244.6L388.2 244.1L387.4 241.1L387.5 241.0L388.6 237.6L384.3 238.2L384.3 238.2L384.6 236.5L383.6 232.0L383.3 231.9L382.1 232.2L379.4 236.0L378.1 235.6L376.3 234.3L375.8 232.3L369.5 232.4Z"/>
<path fill="#898173" d="M388.5 240.6L391.8 240.5L390.5 237.6Z"/>
<path fill="#3b423c" d="M329.4 225.4L324.0 224.5L319.8 226.9L320.1 229.3L321.3 229.7L324.2 231.9L327.3 230.8L330.0 228.9L330.3 228.0L329.6 226.7Z"/>
<path fill="#a1776e" d="M273.6 232.9L267.1 235.1L267.0 238.3L268.1 239.2L268.4 239.3L271.1 243.6L270.8 244.7L271.2 247.8L274.3 246.7L277.1 248.9L278.9 249.4L281.6 245.9L279.3 245.0L276.5 240.0L276.8 238.9L274.7 236.8L274.4 234.0Z"/>
<path fill="#5c7764" d="M479.0 222.4L480.1 220.7L479.5 217.8L477.2 217.4L475.8 217.3L475.7 215.5L474.1 213.6L470.8 214.1L469.2 216.9L469.8 218.0L468.7 224.4L471.5 226.1L475.8 221.8Z"/>
<path fill="#373c43" d="M387.3 187.4L385.6 184.1L384.3 183.1L383.6 183.5L382.9 193.3L383.7 193.8L384.3 196.2L385.7 197.8L386.1 197.9L387.9 197.0L393.0 196.8L390.9 194.4L391.6 190.8L388.1 190.3Z"/>
<path fill="#616368" d="M246.3 249.1L254.1 247.0L254.1 246.0L253.1 244.0L251.8 242.8L251.1 242.5L248.7 240.3L246.7 239.7L243.7 245.4L242.9 244.2L243.1 238.0L242.6 237.5L239.0 239.2L236.9 239.4L236.9 239.4L236.4 244.1L236.6 244.4L238.3 245.1L240.3 248.9L244.0 246.5Z"/>
<path fill="#ffffff" d="M397.7 155.5L393.8 155.8L391.7 157.5L391.6 159.6L391.5 159.8L385.2 161.2L384.7 161.5L385.7 162.8L386.0 163.6L391.4 167.2L391.4 168.7L391.5 169.0L392.5 170.1L393.6 169.5L396.3 164.8L399.2 165.2L400.0 165.8L400.9 165.4L400.9 165.3L401.8 162.1L401.8 161.1L398.3 158.8L398.4 158.2Z"/>
<path fill="#efbf9c" d="M432.8 191.0L429.4 194.4L429.7 195.6L425.1 199.7L426.3 201.1L425.4 204.7L428.3 207.8L430.4 208.0L430.7 207.7L433.7 205.5L435.9 205.8L438.7 204.9L441.7 206.0L442.8 205.8L443.1 201.9L441.1 201.1L438.0 199.3L437.6 197.7L439.5 196.9L440.1 193.1L438.8 191.5L438.8 191.5L435.9 192.9L434.5 191.5L433.3 191.0L432.8 191.0Z"/>
<path fill="#a07666" d="M473.6 242.9L476.0 239.0L473.1 235.1L472.6 235.2L468.1 232.9L467.6 232.3L466.8 232.2L465.5 233.4L466.0 236.6L464.6 238.2L464.5 238.4L464.7 240.2L467.4 240.6L470.3 238.6Z"/>
<path fill="#4a5747" d="M316.0 119.4L316.2 120.0L316.3 120.1L320.0 120.2L321.4 117.3L319.4 116.1L316.9 117.0L316.0 118.0Z"/>
<path fill="#5b6169" d="M339.9 208.1L342.5 204.4L340.0 202.8L337.3 206.4Z"/>
<path fill="#5b6169" d="M352.4 217.9L354.5 215.1L354.0 213.7L350.8 212.2L349.2 212.1L348.3 213.5L348.3 214.3Z"/>
<path fill="#818894" d="M410.0 312.7L409.6 313.8L406.0 317.6L404.8 320.6L403.2 320.7L402.0 324.6L403.1 327.9L404.7 328.7L406.4 327.6L410.4 329.6L414.0 328.5L414.0 328.5L413.8 327.9L415.3 322.0L414.6 321.5L414.5 321.2L415.4 317.4L418.4 316.8L418.8 314.2L413.0 314.1L410.9 312.5Z"/>
<path fill="#8d919d" d="M381.4 116.3L381.3 116.8L382.3 119.2L379.6 121.7L379.8 124.7L379.1 125.9L379.1 127.1L378.8 128.2L380.1 129.8L381.9 130.2L383.6 131.3L383.9 131.6L384.3 136.9L384.4 137.1L385.0 137.0L387.1 133.9L390.2 135.2L389.3 138.3L389.8 139.2L389.0 141.6L390.0 142.9L390.3 147.5L395.6 147.0L397.9 148.2L399.7 146.7L404.1 148.4L405.0 153.9L407.5 154.6L407.7 157.4L408.3 159.9L408.4 160.0L408.8 162.0L409.4 163.2L409.6 163.3L414.7 161.7L416.7 161.9L417.1 165.6L416.6 167.2L417.7 168.5L422.3 168.2L423.8 170.6L425.2 171.2L426.0 171.0L427.7 171.3L431.2 168.9L427.8 166.8L427.8 166.5L426.4 163.9L423.1 165.8L421.4 162.8L424.8 160.1L422.9 158.1L422.1 155.9L424.4 152.0L418.6 149.2L418.6 148.9L418.6 148.4L418.3 147.7L416.7 145.5L416.6 144.9L412.1 142.5L411.7 140.9L408.9 138.6L408.6 133.7L408.9 133.1L400.1 126.6L394.7 122.5L391.4 120.1L389.4 118.5L386.9 116.6L383.8 114.4Z"/>
<path fill="#717987" d="M261.3 267.7L258.7 267.7L257.9 267.2L257.4 267.3L255.2 267.8L252.8 267.7L251.2 269.1L249.7 270.0L248.1 267.4L247.7 264.9L245.4 264.4L242.0 264.1L240.6 263.1L239.3 260.4L235.9 262.2L235.5 263.0L235.5 265.3L234.9 267.7L236.8 269.1L242.6 273.5L247.5 277.1L248.3 277.7L249.4 278.6L252.3 280.7L252.4 280.8L260.7 287.1L262.7 288.5L263.1 288.2L266.3 287.2L269.0 287.5L270.7 289.0L272.7 292.5L274.2 291.9L280.6 292.5L281.1 290.4L277.3 286.3L277.0 285.3L277.1 281.8L275.7 281.4L273.6 279.4L273.0 273.8L269.3 275.3L268.0 271.8L267.5 271.7L266.3 271.8L266.1 271.0L262.1 267.2Z"/>
<path fill="#717987" d="M228.1 262.6L228.3 257.1L227.7 257.0L224.4 259.8Z"/>
<path fill="#717987" d="M272.1 294.2L263.7 289.3L271.8 295.4Z"/>
<path fill="#6d7e74" d="M328.4 253.1L325.3 252.1L324.9 252.5L321.0 250.0L321.4 249.0L317.7 248.6L318.8 250.5L320.8 250.5L320.8 252.5L319.9 253.7L318.9 253.8L317.5 257.4L318.6 259.3L319.1 259.5L322.4 256.9L323.6 256.9L324.3 262.2L324.3 262.3L324.3 262.3L326.3 262.2L329.0 260.2L329.1 260.2L332.8 259.6L333.1 257.7L333.2 256.6L330.0 255.4L331.8 252.5L331.7 248.9L331.7 248.8L329.8 250.8Z"/>
<path fill="#6d7e74" d="M337.8 255.7L336.1 258.6L335.2 261.0L336.2 261.5L338.4 258.9Z"/>
<path fill="#8c8f9b" d="M356.7 94.0L349.2 88.4L345.9 85.9L338.0 80.0L336.9 81.4L332.5 87.4L335.7 90.8L335.9 91.7L338.8 93.1L340.6 97.3L338.4 100.5L340.5 102.2L341.6 107.0L344.6 108.1L345.9 107.5L347.6 110.6L347.7 112.3L349.4 113.9L352.0 112.1L351.6 110.7L352.8 108.3L352.7 107.5L354.4 106.2L355.5 105.8L360.0 107.7L360.1 105.3L359.5 101.9L360.0 101.4L362.4 100.6L363.5 103.0L364.8 103.8L367.1 101.8L363.6 99.2L359.3 95.9Z"/>
<path fill="#8c8f9b" d="M371.6 105.2L365.2 109.1L365.1 109.2L364.4 109.2L363.5 109.6L365.5 116.0L366.5 116.0L369.3 117.9L372.7 118.4L373.7 113.7L374.0 113.3L375.8 114.4L380.8 115.8L381.4 116.3L383.8 114.4L378.0 110.0L376.3 108.7Z"/>
<path fill="#8c8f9b" d="M379.6 121.7L382.3 119.2L381.3 116.8L379.0 117.8L377.7 119.6Z"/>
<path fill="#8c8f9b" d="M354.3 113.8L356.5 110.2L354.1 109.5L353.9 113.3Z"/>
<path fill="#53515c" d="M424.1 298.1L424.2 296.6L423.7 292.4L421.2 291.3L417.3 292.1L415.4 288.7L414.5 288.4L412.8 290.7L410.8 289.4L409.2 293.4L410.2 293.7L410.4 298.7L413.5 298.3L413.7 298.5L414.5 298.3L417.3 299.5L419.3 297.7Z"/>
<path fill="#a4745e" d="M351.1 171.4L349.2 172.9L349.8 175.7L352.3 177.5L353.0 177.1L355.8 173.0L354.8 171.7L353.0 170.7Z"/>
<path fill="#a4745e" d="M345.1 167.3L345.0 167.1L340.9 171.4L340.7 171.6L342.4 173.7L342.8 174.5L340.8 179.1L341.5 179.7L345.5 178.8L346.5 177.7L346.0 175.5L345.3 174.0L346.9 172.5L345.7 169.6Z"/>
<path fill="#595863" d="M248.2 222.4L249.1 219.9L247.4 218.5L245.3 218.8L244.6 218.5L241.9 216.1L237.2 216.6L239.6 223.0L238.2 223.8L236.0 223.9L235.8 224.0L234.6 226.9L232.5 228.5L237.4 230.4L238.2 230.9L240.8 228.7L245.4 230.2L247.8 227.7L247.2 226.4L244.6 224.8L240.8 224.0L240.7 223.9L245.0 221.2L245.6 222.1Z"/>
<path fill="#a28368" d="M405.0 153.9L405.0 153.9L398.1 149.1L398.2 154.3L403.0 155.1L402.7 156.3L403.0 157.5L402.8 158.4L400.0 157.9L398.4 158.2L398.3 158.8L401.8 161.1L401.8 162.1L400.9 165.3L400.9 165.4L405.4 166.9L405.6 170.7L405.8 170.9L412.2 167.6L412.3 167.3L409.6 163.3L409.4 163.2L408.8 162.0L408.4 160.0L408.3 159.9L407.7 157.4L407.5 154.6Z"/>
<path fill="#d29970" d="M440.8 212.9L445.1 214.2L445.3 213.7L445.3 207.5L444.6 206.3L442.8 205.8L441.7 206.0L438.7 204.9L435.9 205.8L433.7 205.5L430.7 207.7L430.4 208.0L431.0 210.8L431.9 212.2L437.0 211.7L438.2 212.2L439.7 212.0Z"/>
<path fill="#5a6062" d="M277.3 194.5L281.0 189.9L278.3 186.6L275.3 189.5L275.1 191.6L269.3 186.4L269.1 187.1L269.3 187.8L269.5 192.5L269.8 193.3L275.1 192.6Z"/>
<path fill="#8b909d" d="M476.5 190.8L474.2 192.1L473.0 192.3L471.9 194.2L467.4 196.4L469.3 200.0L469.1 201.0L469.1 202.0L469.4 202.5L470.6 202.9L474.1 199.7L474.5 199.7L475.1 205.1L478.7 204.7L479.6 205.5L480.3 205.6L482.1 206.9L488.1 205.6L488.5 205.0L492.6 205.8L494.2 207.7L495.4 208.2L497.5 206.5L497.6 206.4L502.5 209.6L501.9 211.9L505.9 213.9L506.8 215.9L509.7 216.9L509.7 216.9L513.2 212.3L513.6 211.7L510.0 209.0L507.7 207.2L504.6 205.0L501.6 202.7L498.6 200.4L494.6 197.4L492.8 196.1L487.6 192.2L478.6 185.5L478.3 187.3L476.9 190.3Z"/>
<path fill="#8b909d" d="M503.6 219.6L503.0 220.2L502.6 221.5L503.0 225.9L507.4 219.9Z"/>
<path fill="#dba37b" d="M457.8 213.0L453.0 216.5L450.7 217.3L450.6 217.4L450.6 220.5L450.0 222.7L455.0 223.3L455.4 222.4L454.3 220.1L454.5 219.8L457.0 220.5L457.9 219.9L459.2 223.6L463.0 221.7L462.6 219.3L459.4 216.9L458.6 213.6Z"/>
<path fill="#66776b" d="M299.4 237.2L296.9 236.9L293.8 240.0L294.6 240.9L295.1 242.3L297.7 243.6L299.9 242.7L300.4 246.6L303.4 246.4L303.0 245.0L300.3 242.5L299.9 242.5L299.2 240.7Z"/>
<path fill="#d3e3eb" d="M315.3 292.6L315.6 294.3L317.3 296.7L318.1 296.5L322.6 292.5L320.9 289.6L320.9 289.6L320.0 288.6L319.3 288.2L316.5 287.2L313.3 288.6L314.5 292.2Z"/>
<path fill="#7a8083" d="M464.7 248.6L464.4 248.9L464.3 249.1L459.9 252.5L462.1 255.7L457.6 258.8L457.5 258.8L456.9 259.9L456.8 261.0L459.7 265.7L461.3 265.9L462.8 273.3L465.3 273.9L466.4 274.6L470.6 269.0L473.0 265.8L474.3 264.1L471.1 259.8L470.7 258.6L469.7 258.5L469.1 257.7L469.2 252.3L468.8 252.1L467.2 248.2L466.9 248.0Z"/>
<path fill="#e2a689" d="M377.9 188.7L374.4 187.9L371.3 190.5L371.9 192.3L375.6 194.7L379.0 192.1Z"/>
<path fill="#646d71" d="M475.7 183.3L471.2 179.9L467.8 182.7L464.8 181.6L463.6 182.5L463.8 183.4L462.9 188.6L464.4 188.8L466.4 190.2L469.0 189.8L469.5 186.6Z"/>
<path fill="#60626f" d="M307.7 156.0L305.4 154.3L302.1 156.0L301.8 155.8L296.6 154.1L296.7 159.2L296.5 159.5L296.3 160.5L296.0 161.4L296.0 162.7L301.4 165.3L303.1 162.9L303.3 163.0L308.2 161.0L308.3 160.8L309.1 158.2L307.9 156.6Z"/>
<path fill="#d5e5ee" d="M277.5 253.1L277.2 253.2L277.0 253.1L274.9 250.8L277.1 248.9L274.3 246.7L271.2 247.8L270.7 248.6L271.0 249.4L270.9 250.4L267.4 254.9L267.5 255.8L270.0 256.4L270.3 260.5L269.6 261.6L269.9 263.4L270.7 264.2L271.3 264.3L274.5 264.1L275.5 266.8L277.8 267.7L282.2 263.7L284.6 265.1L287.7 258.7L283.7 256.6L284.5 253.4L284.4 252.8L283.8 252.4L282.2 252.4L279.0 251.1Z"/>
<path fill="#9c8875" d="M398.9 267.1L397.4 267.3L394.8 268.1L394.1 267.6L389.3 268.4L388.3 269.9L390.2 275.5L391.4 275.1L394.9 269.6L395.7 270.5L400.9 272.9L400.8 274.5L400.8 274.6L407.0 277.7L407.3 277.6L407.7 276.5L402.9 271.2L401.1 272.6Z"/>
<path fill="#9e8c82" d="M374.8 283.9L371.8 283.2L370.4 286.1L372.1 290.1L374.4 289.9L376.0 293.7L377.0 294.4L379.1 293.9L380.5 292.4L380.6 291.4L379.1 287.9L376.4 288.0Z"/>
<path fill="#9e8c82" d="M363.8 282.8L362.7 284.9L364.7 286.1L367.1 286.3L367.7 285.7L367.5 281.5L366.4 281.6Z"/>
<path fill="#435341" d="M364.6 345.1L361.9 348.7L362.8 351.4L363.8 350.9L364.8 345.2L366.0 344.9L365.3 338.5L364.8 338.2L360.9 339.0L360.6 338.6L357.0 336.7L356.6 336.7L355.8 336.6L351.1 337.7L351.7 341.5L355.6 340.4L355.9 341.8L356.6 340.5L360.0 342.5L359.9 343.7Z"/>
<path fill="#9f7968" d="M283.3 209.2L281.8 205.1L286.9 203.5L287.0 203.7L286.1 208.4Z"/>
<path fill="#fac29d" d="M308.4 175.2L309.7 174.2L310.1 172.7L309.7 172.0L305.1 174.8Z"/>
<path fill="#677e6d" d="M369.9 331.5L367.7 327.7L365.1 327.2L362.8 327.7L361.9 331.8L358.3 331.3L357.4 330.4L354.6 330.8L350.8 326.5L350.5 326.5L348.0 329.4L348.0 333.1L351.5 332.8L354.6 331.4L354.7 332.3L355.2 333.2L355.8 336.6L356.6 336.7L357.0 336.7L360.6 338.6L360.9 339.0L364.8 338.2L365.3 334.1L369.9 331.7Z"/>
<path fill="#e7ab81" d="M385.7 153.4L384.3 161.4L384.7 161.5L385.2 161.2L388.5 154.5L387.9 153.6Z"/>
<path fill="#e7ab81" d="M377.7 154.1L378.0 156.6L381.2 157.8L381.5 157.8L382.5 155.1L379.2 153.0Z"/>
<path fill="#7c878f" d="M491.5 224.6L491.2 224.4L489.2 225.1L487.4 224.5L487.2 224.6L485.4 226.9L486.0 229.1L479.8 229.3L479.8 229.4L482.2 233.7L484.1 232.7L485.3 234.1L485.1 237.9L486.8 237.9L488.0 240.1L492.6 239.7L492.9 239.3L498.7 231.5L496.2 231.9L492.2 230.2L493.0 226.2L492.4 226.0L491.7 224.7Z"/>
<path fill="#7c878f" d="M479.3 243.3L482.7 242.6L483.3 241.9L482.7 238.4L482.7 238.3L482.2 238.0L481.3 238.4Z"/>
<path fill="#7c878f" d="M473.8 244.5L478.0 245.1L479.0 243.5L477.6 238.9L476.0 239.0L473.6 242.9Z"/>
<path fill="#6e826b" d="M339.6 168.1L340.6 164.7L337.6 164.8L334.8 165.8L333.2 168.3L332.4 168.6L332.2 169.8L332.1 170.5L335.9 174.9L337.2 171.1L335.6 169.7Z"/>
<path fill="#6e826b" d="M339.5 178.8L339.7 179.1L340.8 179.1L342.8 174.5L342.4 173.7L340.7 171.6L340.2 171.5L339.5 171.7L337.8 176.7Z"/>
<path fill="#667a6b" d="M239.0 239.2L242.6 237.5L242.7 236.8L238.2 231.7L236.3 233.7L233.3 234.3L235.0 239.2L236.9 239.4L236.9 239.4Z"/>
<path fill="#667a6b" d="M233.0 240.3L232.5 241.0L232.5 241.6L235.2 244.1L235.2 244.1Z"/>
<path fill="#f1ba99" d="M439.0 189.5L438.9 188.5L438.0 188.2L435.8 185.9L435.7 186.1L433.3 191.0L434.5 191.5L435.9 192.9L438.8 191.5L438.8 191.3Z"/>
<path fill="#f1ba99" d="M432.8 191.0L432.0 190.2L429.5 188.4L426.3 192.6L429.4 194.4Z"/>
<path fill="#5c5c60" d="M420.3 197.1L417.7 196.9L412.3 200.1L411.8 199.3L413.6 194.8L412.6 194.3L410.3 194.4L408.6 193.3L408.1 194.1L407.8 195.6L405.9 196.4L404.7 195.3L403.5 194.9L403.5 194.9L401.8 197.3L401.8 197.3L403.9 198.5L406.1 197.9L407.9 198.9L405.8 203.1L408.2 203.6L412.6 201.5L413.5 202.5L414.5 204.9L414.9 205.2L418.4 204.7L419.0 199.5Z"/>
<path fill="#cc886f" d="M349.8 247.8L349.4 246.7L346.8 246.5L344.7 247.6L341.5 251.1L341.1 251.3L340.3 252.2L340.0 253.4L345.7 259.2L346.0 258.8L347.0 253.2L346.9 252.6Z"/>
<path fill="#cc886f" d="M353.6 259.0L353.5 259.1L355.8 264.3L356.6 260.9Z"/>
<path fill="#d59775" d="M315.2 231.1L311.8 232.2L310.8 230.1L308.6 231.3L306.1 234.5L310.6 236.8L312.7 236.6L312.8 236.5L312.9 235.2Z"/>
<path fill="#363d3d" d="M377.6 143.1L375.7 146.6L374.4 147.2L373.8 149.2L375.3 150.4L377.7 154.1L377.7 154.1L379.2 153.0L380.4 150.6L380.7 150.3L384.0 151.5L385.3 148.7L384.8 147.3L381.9 146.3L381.5 142.3Z"/>
<path fill="#777780" d="M338.7 186.0L338.2 190.3L338.7 191.6L338.7 191.9L339.0 192.1L341.3 195.0L342.1 195.3L343.4 197.8L348.0 197.5L348.5 196.6L347.9 195.8L343.0 195.2L346.9 191.8L346.9 191.0L344.7 190.5L343.9 186.8L342.8 186.6L341.6 184.4Z"/>
<path fill="#414744" d="M479.5 217.8L480.1 220.7L480.4 220.6L481.0 220.5L485.1 221.0L484.7 222.0L487.2 224.6L487.4 224.5L488.8 220.5L487.2 219.4L487.2 219.4L484.4 217.4L482.6 213.6L481.4 213.9Z"/>
<path fill="#414744" d="M475.7 215.5L475.8 217.3L477.2 217.4L478.3 214.2Z"/>
<path fill="#637160" d="M278.3 186.6L278.1 184.4L278.1 183.0L285.1 184.5L285.3 187.8L283.3 189.9L281.0 189.9Z"/>
<path fill="#626670" d="M389.3 359.3L389.2 359.2L386.5 354.9L383.0 359.8L384.0 360.8L384.6 362.3L384.0 363.4L383.9 364.6L385.4 368.3L385.3 369.2L385.7 369.4L388.1 368.3L390.6 366.1L391.9 366.0L394.5 370.5L398.3 365.5L398.4 365.3L401.5 361.2L408.6 351.7L400.3 353.3L398.8 352.1L395.9 351.9L393.1 354.6L393.8 357.7Z"/>
<path fill="#9092a2" d="M446.1 167.7L448.1 168.2L449.1 165.9L447.1 165.0L445.0 166.5Z"/>
<path fill="#9092a2" d="M447.1 172.8L446.7 173.0L446.3 173.3L444.1 172.8L443.7 172.4L443.3 171.8L444.7 166.6L443.4 165.8L443.3 165.9L440.2 169.7L438.7 166.6L434.7 164.2L434.6 164.2L434.2 165.1L433.4 168.1L431.4 168.9L431.2 168.9L427.7 171.3L430.7 174.0L431.4 174.8L433.4 175.7L434.8 174.9L435.3 175.1L438.3 182.6L440.1 182.3L440.3 182.4L441.7 187.4L442.6 187.9L443.3 188.8L444.3 189.1L448.2 186.8L448.7 186.8L450.3 188.7L450.1 190.4L451.0 191.8L453.9 193.0L454.0 195.0L459.1 196.8L459.1 196.8L464.2 198.3L464.7 197.7L465.5 196.0L464.8 194.4L460.0 194.2L458.3 189.7L458.6 188.5L458.8 188.4L462.9 188.6L463.8 183.4L463.6 182.5L464.8 181.6L463.1 174.1L463.3 173.9L456.0 168.5L455.2 170.9L453.4 171.4L451.5 168.9L448.3 170.7Z"/>
<path fill="#606c6e" d="M406.7 298.6L406.6 298.3L400.0 297.9L399.6 297.6L397.7 298.9L397.7 299.0L394.7 302.8L392.1 297.9L389.4 296.3L388.9 296.8L388.6 297.5L390.3 303.1L394.4 304.5L394.8 303.7L398.2 302.9L399.7 303.9L399.8 305.2L403.9 306.2L403.9 306.4L407.2 310.3L408.8 305.0L408.4 304.5L407.2 303.8L405.0 304.4L402.3 301.5Z"/>
<path fill="#4d4b50" d="M300.1 175.8L302.4 174.0L303.8 174.8L306.8 178.7L302.3 180.1L300.5 177.5Z"/>
<path fill="#3a413f" d="M261.9 209.1L261.7 208.8L261.1 208.5L254.6 211.1L254.5 211.0L252.6 209.9L247.7 212.6L247.4 215.2L247.7 216.5L251.2 215.5L250.8 219.8L249.1 219.9L248.2 222.4L248.3 222.9L250.2 223.5L251.5 223.5L251.3 225.8L254.6 224.6L254.8 224.6L255.4 224.2L259.7 228.3L261.8 227.1L262.5 225.2L262.2 224.6L262.8 222.3L263.1 219.3L263.5 218.5L263.0 215.7L263.3 215.1ZM256.4 216.0L258.8 216.9L259.7 219.3L258.5 222.0L256.7 221.8L255.0 219.7Z"/>
<path fill="#3a413f" d="M244.6 224.8L245.6 222.1L245.0 221.2L240.7 223.9L240.8 224.0Z"/>
<path fill="#d4e9f2" d="M367.9 303.2L367.1 305.1L364.7 307.5L362.8 307.3L363.4 303.4L361.3 302.3L359.1 302.5L358.9 306.2L358.6 306.5L358.4 306.6L357.7 308.6L354.6 313.2L358.8 314.6L360.0 315.4L360.4 316.5L363.8 319.1L367.3 318.3L367.3 318.3L368.4 315.1L368.2 313.8L368.1 313.1L368.6 311.9L375.7 311.7L376.2 310.8L376.3 310.7L375.1 309.5L370.9 308.6L368.0 309.8L368.0 309.6L369.8 306.6L369.8 303.6Z"/>
<path fill="#9a7a5f" d="M447.5 233.0L448.3 230.6L446.4 226.5L447.3 223.1L442.8 221.7L442.0 222.2L438.0 219.3L436.2 218.6L432.5 222.7L432.6 223.1L429.0 227.9L429.0 228.0L429.2 228.2L432.7 229.0L434.9 227.2L435.0 228.0L436.4 229.0L435.5 230.8L436.9 231.1L438.7 231.7L439.8 231.5L441.1 231.8L442.9 231.0Z"/>
<path fill="#dea084" d="M314.6 166.0L313.3 161.9L313.3 161.8L311.1 163.3L310.1 165.3L308.8 165.8L308.1 170.0L309.2 170.9L311.8 169.4L312.5 166.2Z"/>
<path fill="#dea084" d="M303.3 163.0L308.7 165.7L308.6 161.4L308.2 161.0Z"/>
<path fill="#eba277" d="M362.4 255.3L360.0 257.0L363.8 260.2L360.2 261.0L358.8 259.2L356.6 260.9L355.8 264.3L353.5 259.1L351.3 261.3L347.1 261.3L347.5 264.2L350.3 266.3L352.2 266.3L355.4 265.3L355.5 265.3L356.4 266.2L360.5 265.6L361.0 265.8L363.8 263.1L365.0 260.9L368.7 265.3L368.9 265.4L369.7 262.8L367.1 257.5L367.3 257.0Z"/>
<path fill="#958477" d="M302.4 220.0L303.4 215.7L302.7 215.4L297.8 215.6L300.6 221.0Z"/>
<path fill="#3f4446" d="M308.7 250.0L304.8 249.4L304.4 250.0L304.9 252.5L304.9 252.6L307.9 254.2L308.4 250.7Z"/>
<path fill="#5e5b6a" d="M289.6 250.8L289.2 250.2L284.4 252.8L284.5 253.4L289.8 256.4L289.9 256.3L293.1 255.9L294.5 252.4Z"/>
<path fill="#9d9685" d="M341.2 226.3L339.0 229.1L336.6 229.9L337.5 234.9L341.5 232.1L345.3 231.0L345.3 230.9L341.5 228.8Z"/>
<path fill="#656f74" d="M398.9 267.1L402.8 264.9L401.2 260.7L399.6 259.2L397.6 259.9L395.9 260.2L393.6 265.1L394.1 267.6L394.8 268.1L397.4 267.3Z"/>
<path fill="#656f74" d="M386.8 256.8L387.6 258.1L393.0 257.7L392.9 256.3L387.6 255.4Z"/>
<path fill="#707073" d="M311.7 143.4L311.1 141.8L306.5 142.1L304.8 146.9L308.2 149.4L305.5 153.7L305.4 154.3L307.7 156.0L308.8 155.5L312.4 155.4L313.0 155.2L311.3 153.4L312.1 150.3L313.0 150.5L315.0 152.8L314.2 155.2L314.7 156.4L315.7 157.4L317.7 158.8L321.8 157.2L321.9 157.1L316.4 152.5L317.2 151.4L316.3 148.3L315.6 148.1L314.6 145.0Z"/>
<path fill="#3a423e" d="M260.9 237.0L259.3 237.0L258.0 237.9L257.6 239.2L253.1 244.0L254.1 246.0L258.4 244.7L264.4 246.4L265.0 247.8L270.7 248.6L271.2 247.8L270.8 244.7L267.3 243.2L268.1 239.2L267.0 238.3L267.1 235.1L265.5 232.9L262.1 234.1Z"/>
<path fill="#e6a187" d="M388.8 279.9L387.7 280.2L381.5 284.6L381.6 286.2L384.2 287.0L385.2 287.0L387.9 293.4L389.7 295.5L389.8 295.3L398.7 292.8L393.6 284.8L392.8 284.8L391.1 283.9Z"/>
<path fill="#647b6f" d="M405.2 331.8L404.7 328.7L403.1 327.9L402.0 324.6L400.4 325.1L399.1 329.7L397.9 328.5L398.2 325.3L397.5 324.6L394.4 326.9L393.0 328.1L392.5 328.2L393.7 332.2L390.1 333.0L390.7 337.5L393.2 338.0L394.5 336.6L398.6 337.7L401.9 335.9L401.9 335.8L403.3 333.0Z"/>
<path fill="#a98066" d="M315.4 230.6L319.4 230.1L320.1 229.3L319.8 226.9L317.9 224.4L317.7 224.3L311.7 222.6L311.2 223.4L307.6 224.9L306.8 226.3L307.4 229.1L308.6 231.3L310.8 230.1L311.7 228.6Z"/>
<path fill="#788389" d="M304.9 252.5L304.4 250.0L299.7 250.2L300.6 252.5L299.1 255.1L302.9 255.8L303.2 254.3L304.9 252.6Z"/>
<path fill="#d79d7d" d="M424.1 298.1L419.3 297.7L417.3 299.5L414.5 298.3L413.7 298.5L413.7 298.6L416.0 303.5L414.3 304.6L413.4 306.3L412.9 306.6L411.5 311.6L410.9 312.5L413.0 314.1L418.8 314.2L418.4 316.8L418.9 320.5L421.2 319.6L422.1 318.5L422.5 313.4L420.7 312.3L420.8 310.5L424.4 307.1L422.6 301.8L424.3 298.8Z"/>
<path fill="#d79d7d" d="M400.2 311.1L400.2 311.3L403.8 313.8L405.8 310.7L400.6 310.8Z"/>
<path fill="#907d72" d="M395.7 270.5L394.9 269.6L391.4 275.1L395.5 276.1L397.9 278.1L398.0 282.5L401.5 283.5L407.0 277.7L400.8 274.6L400.8 274.5L400.9 272.9Z"/>
<path fill="#dda273" d="M435.5 257.4L435.4 257.1L433.5 256.4L429.3 258.4L429.3 259.3L430.3 260.0L431.9 264.2L435.2 264.5L435.8 261.4L435.8 261.3L432.5 260.2Z"/>
<path fill="#dda273" d="M442.2 268.4L442.7 267.9L443.8 265.5L441.7 262.5L437.3 266.1Z"/>
<path fill="#dda273" d="M415.8 251.2L419.7 255.2L419.4 256.4L417.6 257.0L417.7 260.3L420.3 261.4L421.3 258.5L422.4 258.3L422.6 258.1L427.5 254.8L427.5 254.6L426.6 253.1L424.3 251.4L423.9 251.3L422.3 249.4L417.9 248.5Z"/>
<path fill="#dda273" d="M425.5 265.5L425.2 269.0L425.7 269.3L430.3 270.3L431.2 268.5L430.3 266.6Z"/>
<path fill="#d09370" d="M338.4 286.1L337.3 286.3L335.9 285.7L332.8 286.2L332.3 287.0L333.6 289.0L327.8 293.5L327.6 294.2L328.6 294.4L330.9 296.4L333.7 296.9L334.6 295.5L336.5 295.2L336.8 295.5L335.9 298.5L334.8 299.1L334.6 300.1L334.9 300.3L339.9 301.1L340.5 303.5L340.7 303.7L341.5 304.1L344.1 304.6L344.6 298.5L346.5 297.8L346.6 297.3L345.5 293.9L345.9 291.7L343.9 290.4L343.2 287.3L343.1 287.3L341.0 286.1L339.6 279.2L337.0 278.5L337.0 279.5L338.5 286.1Z"/>
<path fill="#6e846f" d="M323.1 298.7L325.4 298.2L326.1 294.8L322.6 292.5L318.1 296.5L317.3 296.7L317.1 297.3L318.4 301.3L319.2 301.8L320.6 300.5L319.3 297.2Z"/>
<path fill="#6e846f" d="M315.6 294.3L315.3 292.6L314.5 292.2L309.3 294.0L310.0 298.0Z"/>
<path fill="#665d67" d="M399.4 241.1L399.0 240.9L397.4 240.6L396.8 247.1L401.1 248.0L401.1 250.0L405.5 252.3L406.5 248.1L404.7 246.6L403.1 246.4L403.0 245.9Z"/>
<path fill="#665d67" d="M390.5 236.8L389.8 236.6L388.6 237.6L387.5 241.0L387.4 241.1L388.2 244.1L384.7 244.6L384.8 248.8L386.1 249.1L388.3 244.2L391.1 245.0L393.3 241.5L391.8 240.5L388.5 240.6L390.5 237.6Z"/>
<path fill="#e69f69" d="M301.7 282.8L304.8 283.8L305.2 283.6L307.3 278.1L306.1 277.9L303.9 279.1L301.0 276.9L299.7 278.4L301.3 281.6L301.7 282.0Z"/>
<path fill="#4d5059" d="M287.0 202.6L286.7 202.0L281.6 200.4L280.9 204.4L281.8 205.1L286.9 203.5Z"/>
<path fill="#4d5059" d="M282.5 210.6L286.8 213.0L290.2 213.3L290.9 210.5L286.1 208.4L283.3 209.2Z"/>
<path fill="#a47567" d="M350.2 222.5L350.5 228.8L348.0 228.9L349.8 235.1L352.5 234.6L353.4 235.7L355.8 236.2L358.1 237.2L359.3 235.7L365.0 235.5L366.2 233.3L368.2 231.5L368.1 229.7L364.4 228.1L361.8 227.9L359.3 226.5L358.9 225.4L357.2 224.7L355.0 229.2L352.2 227.9L355.1 223.7L354.7 223.0L351.9 220.9L351.6 219.7L349.8 218.9L346.6 220.4L346.2 219.6L344.2 218.6L342.7 220.0L339.4 218.7L338.6 224.2L340.5 224.8L341.3 225.7L346.0 226.9L346.6 227.7ZM342.3 222.8L343.2 221.3L346.0 225.0L345.9 225.4Z"/>
<path fill="#a47567" d="M353.1 236.5L349.4 239.5L349.4 240.3L350.3 241.7L353.2 237.8Z"/>
<path fill="#37373f" d="M365.2 109.1L365.1 109.2L364.4 109.2L364.8 103.8L367.1 101.8L371.6 105.2Z"/>
<path fill="#5b5e63" d="M289.9 164.7L287.5 166.4L288.0 169.4L288.0 169.8L288.3 170.0L290.7 174.5L292.4 174.6L294.6 177.6L293.8 179.5L293.7 180.1L298.2 180.5L300.5 177.5L300.1 175.8L302.4 174.0L302.6 173.1L298.2 170.0L296.3 171.3L296.3 171.3L298.1 174.7L293.1 173.7L294.1 171.3L293.5 170.7L293.7 167.9L293.7 167.8L295.7 167.1L295.0 163.5L294.8 163.5L293.4 162.8L290.5 162.2Z"/>
<path fill="#393a3c" d="M500.7 212.6L504.3 218.3L506.8 215.9L505.9 213.9L501.9 211.9Z"/>
<path fill="#393a3c" d="M502.8 219.8L500.3 213.0L497.8 215.4Z"/>
<path fill="#717983" d="M437.7 293.3L437.2 293.2L436.6 293.3L432.4 295.9L431.4 296.1L429.0 299.0L427.6 299.0L424.7 299.0L424.3 298.8L422.6 301.8L424.4 307.1L428.4 307.6L430.0 312.7L429.5 315.6L430.2 317.1L430.9 318.2L432.7 319.5L437.6 313.0L432.9 310.6L433.5 310.1L434.6 309.9L437.7 312.9L441.8 307.5L446.5 301.2L449.7 297.0L453.4 291.9L443.9 289.1L443.5 288.8L440.5 290.6L439.2 292.1Z"/>
<path fill="#d59474" d="M311.8 159.8L310.9 158.8L310.6 158.6L309.1 158.2L308.3 160.8L308.2 161.0L308.6 161.4L308.7 165.7L303.3 163.0L303.1 162.9L301.4 165.3L301.3 165.8L304.0 170.4L308.1 170.0L308.8 165.8L310.1 165.3L311.1 163.3L309.6 161.8L311.8 159.9Z"/>
<path fill="#69776a" d="M285.6 232.8L286.4 227.8L286.5 225.8L282.7 225.7L279.7 227.9L279.6 227.8L278.2 227.6L273.9 228.1L273.2 228.7L271.0 228.1L265.6 232.1L265.5 232.9L267.1 235.1L273.6 232.9L274.4 234.0L274.9 233.9L281.3 231.1L284.4 233.9Z"/>
<path fill="#69776a" d="M261.8 227.1L263.6 229.1L270.1 227.4L267.5 224.4L262.5 225.2Z"/>
<path fill="#9a7864" d="M398.1 196.3L397.6 196.7L399.7 200.7L401.3 200.4L401.8 197.3L401.8 197.3Z"/>
<path fill="#9a7864" d="M394.9 202.0L394.1 206.3L396.9 205.7L396.6 204.2L398.9 202.7L398.3 201.6L397.8 201.4L397.5 196.7L394.7 197.3L394.3 197.7L393.0 196.8L387.9 197.0L386.1 197.9L386.6 198.6L387.8 202.0L391.2 203.4L393.5 201.0Z"/>
<path fill="#91837b" d="M413.3 252.4L414.0 256.0L414.2 256.4L413.3 258.6L413.8 260.8L415.1 261.8L415.2 263.9L420.6 262.5L420.3 261.4L417.7 260.3L417.6 257.0L419.4 256.4L419.7 255.2L415.8 251.2Z"/>
<path fill="#424746" d="M317.5 257.4L315.2 256.4L314.1 257.3L312.7 257.0L309.0 258.7L311.2 261.4L313.7 261.8L314.1 262.1L315.1 265.0L315.7 265.5L319.4 264.5L320.5 261.8L319.1 259.5L318.6 259.3Z"/>
<path fill="#41464a" d="M500.7 212.6L500.4 212.7L500.3 213.0L502.8 219.8L497.8 215.4L496.6 216.1L494.9 217.6L494.9 217.8L494.4 218.8L495.0 221.0L497.3 225.7L501.2 228.2L503.0 225.9L502.6 221.5L503.0 220.2L503.6 219.6L504.3 218.3Z"/>
<path fill="#d39676" d="M317.6 162.9L322.0 162.9L322.8 161.6L321.8 157.2L317.7 158.8L317.0 160.3Z"/>
<path fill="#d39676" d="M319.3 165.0L317.6 164.8L316.1 166.8L316.2 167.4L318.3 169.6L320.4 166.5L322.1 166.8L319.5 171.7L320.2 174.0L323.6 172.7L324.0 171.9L323.3 166.6L322.7 166.5L321.6 164.0Z"/>
<path fill="#545c61" d="M328.4 126.1L325.8 123.1L326.0 119.7L321.6 122.8L320.7 122.1L320.0 120.2L316.3 120.1L315.5 125.0L315.2 125.6L315.4 126.8L315.6 126.9L319.2 127.3L319.9 126.8L322.1 124.4L322.4 124.5L324.6 127.8L327.0 128.7L327.5 127.4Z"/>
<path fill="#514f59" d="M314.1 257.3L315.2 256.4L315.1 255.9L312.9 253.3L311.9 253.3L311.8 253.3L308.7 255.1L308.2 258.2L309.0 258.7L312.7 257.0Z"/>
<path fill="#5e666d" d="M290.5 162.2L289.9 159.6L286.6 159.7L284.0 163.3L284.5 164.0L287.5 166.4L289.9 164.7Z"/>
<path fill="#5e666d" d="M298.1 174.7L296.3 171.3L294.1 171.3L293.1 173.7Z"/>
<path fill="#5e666d" d="M288.3 170.0L288.0 169.8L283.7 172.9L283.1 175.8L286.0 178.0L287.5 181.7L288.7 182.0L292.8 181.8L293.7 180.1L293.8 179.5L289.2 176.3L290.7 174.5Z"/>
<path fill="#5a6756" d="M379.8 350.8L382.8 347.6L377.9 344.8L377.1 345.1L375.4 344.7L371.4 352.2L377.2 352.5L378.4 350.4Z"/>
<path fill="#697566" d="M291.3 278.2L289.9 275.5L283.7 279.5L283.3 280.4L282.9 280.6L283.3 288.8L285.7 289.1L285.9 289.2L288.7 290.3L291.7 288.9L291.7 288.9L290.3 286.2L294.1 282.1L293.4 281.5L292.6 279.3ZM289.6 279.4L291.4 281.6L286.4 282.1L285.6 281.5Z"/>
<path fill="#697566" d="M273.5 273.4L273.1 273.6L273.0 273.8L273.6 279.4L275.7 281.4L277.1 281.8L280.4 280.5L279.3 276.8L279.0 271.7L275.2 272.0Z"/>
<path fill="#ab7871" d="M441.7 254.5L441.8 262.2L445.3 260.0L445.7 259.5L442.2 254.4Z"/>
<path fill="#ab7871" d="M447.6 263.6L447.1 264.2L444.5 265.5L443.8 265.5L442.7 267.9L442.2 268.4L441.5 269.9L442.3 271.3L445.5 272.9L445.8 272.8L446.7 272.7L447.1 273.1L450.1 274.1L452.1 272.5L456.0 272.7L456.0 267.8L459.7 265.7L456.8 261.0L453.4 263.7L450.4 260.3L448.7 263.1Z"/>
<path fill="#f1b691" d="M418.4 241.8L420.0 242.2L424.4 241.1L422.3 236.8L417.6 238.5L417.7 240.6Z"/>
<path fill="#384141" d="M292.1 195.6L289.9 198.3L291.1 199.7L290.5 201.4L290.8 201.7L290.9 201.9L292.7 205.5L292.1 207.1L292.5 208.9L295.3 209.1L297.9 211.7L298.0 211.6L301.8 207.9L300.7 206.0L295.5 208.8L297.2 203.5L295.1 202.2L295.1 201.9L293.2 199.3L294.2 196.9Z"/>
<path fill="#56525f" d="M271.5 202.0L268.8 200.8L267.1 202.3L262.9 202.3L260.9 205.9L261.1 208.5L261.7 208.8L261.9 209.1L265.3 209.8L269.6 208.4L270.1 208.8L273.5 208.8L274.1 212.3L275.1 212.2L278.6 211.9L275.9 206.4L274.5 206.8L271.2 205.0Z"/>
<path fill="#647266" d="M389.2 348.8L390.1 347.5L389.9 345.3L385.8 342.4L385.4 341.8L382.8 341.5L379.2 343.7L377.9 344.8L382.8 347.6L383.6 347.9L383.8 347.8Z"/>
<path fill="#d4957a" d="M405.1 230.0L404.6 233.9L404.7 234.6L405.2 234.6L405.6 234.8L411.3 233.3L411.3 232.6L411.3 232.5L410.9 228.3L410.7 228.2L409.5 227.6L408.8 226.2L403.6 224.8L402.2 227.3Z"/>
<path fill="#414751" d="M421.6 229.7L422.0 232.3L424.1 233.8L426.2 229.6L423.9 228.5L422.8 226.2L420.0 227.1L417.9 226.3L417.3 226.3L415.8 228.2L416.8 231.2L417.3 232.1L421.0 229.1Z"/>
<path fill="#987b60" d="M387.9 251.0L393.2 249.0L391.1 245.0L388.3 244.2L386.1 249.1Z"/>
<path fill="#987b60" d="M395.5 251.4L394.0 250.6L393.4 254.3L393.3 254.4L392.9 256.3L393.0 257.7L393.8 259.0L395.9 260.2L397.6 259.9L399.6 259.2L400.0 256.7L400.2 256.4Z"/>
<path fill="#727389" d="M289.7 293.6L288.3 298.6L290.5 299.1L291.4 302.0L291.6 304.1L291.6 304.5L292.0 305.5L294.6 305.7L294.2 302.6L294.3 302.4L295.0 301.7L296.1 297.8L296.0 297.8L294.6 297.6L293.8 296.0L293.1 292.3L292.2 291.5L291.7 288.9L288.7 290.3L288.6 292.6Z"/>
<path fill="#727389" d="M277.1 281.8L277.0 285.3L277.3 286.3L281.1 290.4L280.6 292.5L281.0 293.7L286.1 293.0L285.9 289.2L285.7 289.1L283.3 288.8L282.9 280.6L280.4 280.5Z"/>
<path fill="#727389" d="M301.9 309.3L302.0 310.9L301.6 311.3L302.9 315.8L305.8 312.7L308.2 311.7L309.3 312.3L309.5 313.9L309.3 317.9L304.5 319.8L311.3 325.0L312.8 326.1L316.9 323.4L317.3 320.1L317.4 320.0L317.9 318.7L319.4 318.3L324.3 313.4L323.9 312.3L323.1 311.0L321.3 309.9L320.8 309.7L317.5 310.8L314.5 309.7L313.9 308.1L312.3 306.7L306.7 304.7L306.1 303.7L302.0 305.4L298.7 303.0L296.3 305.2L296.1 305.5L301.7 306.1L301.0 307.8ZM311.2 323.6L309.7 318.2L312.3 318.3L314.3 319.4Z"/>
<path fill="#998981" d="M306.2 188.8L307.3 183.3L306.7 182.7L302.4 182.7L301.0 185.1L306.0 189.2Z"/>
<path fill="#998981" d="M302.4 191.6L300.9 194.5L302.6 196.0L309.2 194.4L309.3 194.2L308.7 192.6L306.0 189.3Z"/>
<path fill="#546252" d="M257.5 254.6L256.9 253.3L255.4 252.3L250.1 254.8L249.3 257.6L243.7 259.2L244.9 260.3L248.1 262.4L248.3 263.8L250.7 263.4L253.6 264.3L255.5 262.9L255.0 260.8ZM252.4 260.5L251.6 261.7L248.8 260.7L249.5 258.4Z"/>
<path fill="#546252" d="M261.3 267.7L262.1 267.2L262.2 267.1L258.9 262.8L256.5 263.4L257.9 267.2L258.7 267.7Z"/>
<path fill="#676470" d="M387.8 202.0L386.6 198.6L386.1 197.9L385.7 197.8L384.3 196.2L376.9 200.9L376.7 201.5L380.6 205.8L380.6 206.3L383.6 209.2L384.2 209.5L388.3 207.3L386.7 204.2Z"/>
<path fill="#6c7b6e" d="M395.9 149.8L391.6 150.9L392.8 152.6L389.0 151.7L387.9 153.6L388.5 154.5L388.7 154.6L391.7 157.5L393.8 155.8L393.0 153.0L393.0 152.7Z"/>
<path fill="#6c7b6e" d="M398.4 158.2L400.0 157.9L402.7 156.3L403.0 155.1L398.2 154.3L397.7 155.5Z"/>
<path fill="#41454a" d="M302.1 156.0L305.4 154.3L305.5 153.7L300.2 147.6L299.8 147.5L299.5 147.4L297.8 149.0L291.7 148.1L291.1 149.2L291.5 150.2L296.3 153.8L296.3 153.8L296.6 154.1L301.8 155.8Z"/>
<path fill="#5d6768" d="M376.0 243.5L372.5 244.4L371.3 245.6L376.6 246.9L376.7 246.6L377.1 243.8Z"/>
<path fill="#5b666b" d="M386.5 354.2L386.5 354.9L389.2 359.2L389.3 359.3L393.8 357.7L393.1 354.6L388.5 352.7L387.7 353.2Z"/>
<path fill="#5b666b" d="M380.2 355.6L383.5 353.1L382.7 351.9L379.8 350.8L378.4 350.4L377.2 352.5L377.3 352.9Z"/>
<path fill="#7e8891" d="M398.6 337.7L399.3 340.0L403.3 341.7L400.9 343.1L397.3 342.1L395.9 342.7L397.1 345.8L394.0 348.5L395.9 351.9L398.8 352.1L400.3 353.3L408.6 351.7L410.3 349.4L410.8 348.8L411.2 348.2L407.2 344.1L408.1 336.1L403.3 337.5L401.9 335.9Z"/>
<path fill="#b27b6f" d="M361.1 197.0L357.9 196.1L356.8 195.1L355.1 196.0L351.1 197.6L352.6 200.3L346.5 204.0L347.5 205.7L354.2 206.0L355.7 205.6L358.7 207.4L359.8 207.4L361.4 206.6L361.6 198.3L361.1 197.2Z"/>
<path fill="#959aa8" d="M372.9 119.1L372.6 120.9L372.7 121.0L379.1 125.9L379.8 124.7L379.6 121.7L377.7 119.6L379.0 117.8L375.8 114.4L374.0 113.3L373.7 113.7L372.7 118.4Z"/>
<path fill="#959aa8" d="M360.0 107.7L355.5 105.8L354.4 106.2L352.7 107.5L352.8 108.3L351.6 110.7L352.0 112.1L353.9 113.3L354.1 109.5L356.5 110.2L354.3 113.8L354.7 115.0L358.9 115.7L361.5 109.6L360.7 109.0Z"/>
<path fill="#959aa8" d="M381.9 130.2L380.1 129.8L379.8 132.1L384.3 136.9L383.9 131.6L383.6 131.3Z"/>
<path fill="#d39376" d="M330.5 263.7L329.0 260.2L326.3 262.2L327.9 264.6Z"/>
<path fill="#d39376" d="M332.5 274.1L339.0 269.6L339.3 267.6L337.9 266.6L336.8 266.4L336.5 266.6L332.2 264.3L331.7 264.5L330.2 267.9L332.7 271.5Z"/>
<path fill="#907f77" d="M364.4 190.4L363.4 191.2L361.3 187.8L358.7 188.9L357.3 188.5L354.8 191.4L354.8 191.5L356.8 195.1L357.9 196.1L361.1 197.0L361.1 197.2L361.6 198.3L366.5 200.3L367.0 201.1L371.1 201.0L370.8 199.7L370.5 197.8L375.5 195.3L375.6 194.7L371.9 192.3L371.3 190.5L370.3 189.9L366.9 192.0Z"/>
<path fill="#828b93" d="M262.2 181.1L266.6 175.2L271.9 178.8L269.2 184.7L265.0 184.7Z"/>
<path fill="#767781" d="M314.1 262.1L313.7 261.8L311.2 261.4L309.0 258.7L308.2 258.2L306.8 258.6L303.7 263.3L303.9 263.8L307.1 265.1L307.9 271.1L308.2 271.3L311.3 273.7L311.4 273.7L312.4 273.1L315.6 271.9L316.6 270.8L315.7 265.5L315.1 265.0Z"/>
<path fill="#d39a79" d="M413.6 194.8L413.9 194.8L417.7 196.9L412.3 200.1L411.8 199.3Z"/>
<path fill="#a0795e" d="M363.4 191.2L364.4 190.4L365.0 188.0L363.0 187.0L361.8 184.3L360.0 183.6L357.1 186.5L357.3 188.5L358.7 188.9L361.3 187.8Z"/>
<path fill="#535a5e" d="M333.4 308.1L333.0 306.7L330.2 306.1L326.7 303.1L326.4 301.1L320.4 304.7L320.8 309.7L321.3 309.9L323.1 311.0L323.9 312.3L331.4 311.1L332.1 309.4Z"/>
<path fill="#cd876c" d="M382.5 155.1L381.5 157.8L384.3 161.4L384.3 161.4L385.7 153.4L384.9 153.0Z"/>
<path fill="#cd876c" d="M378.0 156.6L374.2 160.1L373.7 163.3L374.2 164.2L381.2 157.8Z"/>
<path fill="#47474c" d="M368.7 185.3L366.0 181.1L363.9 183.4L366.0 187.4L365.0 188.0L364.4 190.4L366.9 192.0L370.3 189.9L368.1 186.7Z"/>
<path fill="#47474c" d="M353.6 183.6L357.1 186.5L360.0 183.6L360.0 183.4L357.7 181.0Z"/>
<path fill="#f7bd9d" d="M355.0 250.5L353.0 253.9L350.9 252.6L349.8 247.9L349.8 247.8L346.9 252.6L347.0 253.2L346.0 258.8L345.7 259.2L345.7 259.6L346.0 260.0L347.1 261.3L351.3 261.3L353.5 259.1L353.6 259.0L356.6 260.9L358.8 259.2L359.0 257.5L356.7 255.7L357.4 253.1L357.2 250.4Z"/>
<path fill="#787a8b" d="M348.0 333.1L348.0 329.4L346.0 329.0L341.8 330.6L339.6 329.6L337.1 329.5L334.7 326.8L332.0 327.3L331.0 328.6L330.8 329.0L330.0 329.7L329.2 331.2L328.8 336.5L328.0 337.5L333.2 341.4L336.3 343.7L340.3 346.7L343.2 348.9L347.5 352.1L351.9 355.4L353.4 356.6L359.0 360.8L360.6 361.9L365.5 356.0L366.0 355.6L366.5 355.6L370.2 353.9L370.4 352.9L369.5 351.9L367.8 345.4L367.0 345.3L365.3 350.8L363.8 350.9L362.8 351.4L361.9 348.7L364.6 345.1L359.9 343.7L360.0 342.5L356.6 340.5L355.9 341.8L355.6 340.4L351.7 341.5L351.1 337.7L350.8 337.5L353.6 332.9L351.5 332.8Z"/>
<path fill="#d69f7c" d="M311.8 232.2L315.2 231.1L312.9 235.2L312.8 236.5L312.7 236.6L314.5 240.5L317.8 239.5L318.1 239.0L318.3 235.0L318.9 234.5L319.4 230.1L315.4 230.6L311.7 228.6L310.8 230.1Z"/>
<path fill="#647b6c" d="M389.2 175.5L390.6 172.9L386.0 173.4L385.6 175.4L388.4 176.4Z"/>
<path fill="#647b6c" d="M384.3 182.9L384.3 183.1L385.6 184.1L389.6 184.3L393.9 183.2L394.7 182.4L394.9 179.8L392.0 179.6Z"/>
<path fill="#687375" d="M403.2 320.7L400.8 319.1L397.9 319.7L396.7 322.4L396.6 322.4L390.2 324.7L392.2 327.9L392.5 328.2L393.0 328.1L394.4 326.9L397.5 324.6L398.2 325.3L397.9 328.5L399.1 329.7L400.4 325.1L402.0 324.6Z"/>
<path fill="#687375" d="M386.1 321.2L382.0 324.4L381.7 326.7L389.4 323.7L388.4 321.2L388.7 320.5L384.4 314.7L384.1 315.0L383.5 316.5L383.2 319.7Z"/>
<path fill="#687375" d="M388.3 331.6L386.4 327.7L381.9 329.8L382.1 331.0L385.8 333.7L388.1 332.0Z"/>
<path fill="#9e8a7f" d="M485.1 221.0L481.0 220.5L480.4 220.6L480.1 220.7L479.0 222.4L479.4 223.6L480.4 225.0L483.4 225.5L484.2 222.8L484.7 222.0Z"/>
<path fill="#7b8289" d="M316.0 118.0L316.9 117.0L314.5 111.4L312.1 114.5L312.7 115.7Z"/>
<path fill="#a27e64" d="M325.4 251.5L325.3 249.8L322.7 247.4L321.4 249.0L321.0 250.0L324.9 252.5L325.3 252.1L328.4 253.1L329.8 250.8Z"/>
<path fill="#5c5e64" d="M354.5 215.1L352.4 217.9L351.6 219.7L351.9 220.9L354.7 223.0L355.1 223.7L352.2 227.9L355.0 229.2L357.2 224.7L358.9 225.4L360.0 224.1L360.7 222.0L360.1 220.7L357.0 220.0L357.4 217.4L356.1 215.8Z"/>
<path fill="#5c5e64" d="M348.0 228.9L350.5 228.8L350.2 222.5L346.6 227.7L347.1 228.8Z"/>
<path fill="#9098a6" d="M473.0 192.3L469.0 189.8L466.4 190.2L464.4 188.8L462.9 188.6L458.8 188.4L458.6 188.5L458.3 189.7L460.0 194.2L464.8 194.4L465.5 196.0L464.7 197.7L464.2 198.3L463.7 201.1L469.1 202.0L469.1 201.0L469.3 200.0L467.4 196.4L471.9 194.2Z"/>
<path fill="#9098a6" d="M474.5 199.7L474.1 199.7L470.6 202.9L473.5 205.7L475.1 205.1Z"/>
<path fill="#9098a6" d="M487.2 219.4L487.9 217.5L492.0 214.5L494.9 217.6L496.6 216.1L497.8 215.4L500.3 213.0L500.4 212.7L500.7 212.6L501.9 211.9L502.5 209.6L497.6 206.4L497.5 206.5L495.4 208.2L494.2 207.7L489.4 211.9L488.0 211.6L487.4 211.9L483.7 212.5L482.1 206.9L480.3 205.6L479.6 205.5L479.1 206.8L478.9 212.3L479.8 213.3L481.4 213.9L482.6 213.6L484.4 217.4Z"/>
<path fill="#9098a6" d="M506.8 215.9L504.3 218.3L503.6 219.6L507.4 219.9L509.7 216.9Z"/>
<path fill="#8f847b" d="M290.9 238.7L292.3 235.0L288.1 232.5L285.6 232.8L284.4 233.9L284.2 235.1L284.2 235.6L286.1 238.0L289.4 238.8Z"/>
<path fill="#f1ba99" d="M405.2 234.6L404.7 234.6L404.3 234.9L396.9 235.2L396.4 235.5L396.3 235.8L396.8 240.0L397.4 240.6L399.0 240.9L399.4 241.1L403.0 245.9L403.1 246.4L404.7 246.6L406.5 248.1L406.5 248.1L408.4 249.0L411.1 247.1L411.4 246.2L410.0 245.3L409.9 245.3L408.3 244.1L408.9 241.4L409.7 240.6L409.6 239.7L409.9 238.9L405.6 234.8Z"/>
<path fill="#797e8a" d="M380.8 115.8L375.8 114.4L379.0 117.8L381.3 116.8L381.4 116.3Z"/>
<path fill="#5e5f6b" d="M464.0 205.7L462.4 206.5L464.6 210.4L467.6 208.4L467.2 206.7L468.2 204.0L464.5 203.9Z"/>
<path fill="#424549" d="M313.3 217.0L311.5 221.2L311.7 222.6L317.7 224.3L318.1 216.6Z"/>
<path fill="#615e68" d="M357.1 186.5L353.6 183.6L351.6 182.8L351.3 182.7L351.2 182.7L350.5 183.2L349.1 184.9L348.0 184.8L342.2 181.5L341.6 184.4L342.8 186.6L343.9 186.8L344.7 190.5L346.9 191.0L347.6 190.4L352.6 192.3L354.8 191.5L354.8 191.4L357.3 188.5Z"/>
<path fill="#4d4850" d="M315.5 125.0L316.3 120.1L316.2 120.0L311.5 121.2L314.7 125.2L308.4 124.3L308.2 126.7L309.6 127.2L314.3 127.8L315.4 126.8L315.2 125.6Z"/>
<path fill="#686c64" d="M456.1 241.5L455.7 242.5L456.4 244.9L457.3 244.6Z"/>
<path fill="#686c64" d="M458.5 248.3L464.4 248.9L464.7 248.6L461.3 243.7L459.3 246.5L458.5 248.2Z"/>
<path fill="#686c64" d="M454.1 245.2L454.0 244.8L449.3 243.4L448.5 245.8L452.9 250.6L453.2 250.6Z"/>
<path fill="#686c64" d="M450.0 252.9L444.7 249.0L442.9 253.9L447.3 254.8Z"/>
<path fill="#595d66" d="M299.5 222.8L298.2 222.6L293.9 225.3L294.2 227.1L294.6 227.5L293.9 231.2L296.3 231.9L296.4 232.4L301.9 235.4L303.7 234.7L303.4 233.7L302.9 230.8L302.7 229.7L300.1 227.1L300.2 224.6Z"/>
<path fill="#928576" d="M461.6 242.5L458.3 240.2L456.7 239.6L455.1 237.9L454.7 235.2L447.5 233.1L446.0 237.1L444.8 239.1L449.3 243.1L449.3 243.4L454.0 244.8L454.1 245.2L453.2 250.6L455.0 250.8L457.4 250.3L459.5 252.2L459.9 252.5L464.3 249.1L464.4 248.9L458.5 248.3L458.5 248.2L459.3 246.5L461.3 243.7L464.7 248.6L466.9 248.0L466.8 245.5L462.6 242.1ZM456.1 241.5L457.3 244.6L456.4 244.9L455.7 242.5Z"/>
<path fill="#5e6162" d="M319.9 253.7L320.8 252.5L320.8 250.5L318.8 250.5L317.6 251.7L316.5 247.9L315.5 246.9L314.7 246.6L313.8 245.9L310.6 249.2L310.2 249.2L306.8 246.4L305.3 246.6L304.9 247.0L304.8 249.4L308.7 250.0L308.4 250.7L307.9 254.2L308.7 255.1L311.8 253.3L311.9 253.3L312.9 253.3L315.1 255.9L315.2 256.4L317.5 257.4L318.9 253.8Z"/>
<path fill="#5e6162" d="M320.5 261.8L324.3 262.2L323.6 256.9L322.4 256.9L319.1 259.5Z"/>
<path fill="#9d8b7f" d="M398.7 292.8L400.2 293.4L403.6 291.6L404.3 287.4L401.5 283.5L398.0 282.5L393.6 284.8Z"/>
<path fill="#a3816a" d="M381.2 296.7L379.1 293.9L377.0 294.4L376.0 293.7L372.1 297.2L374.4 300.8L376.9 300.6L378.8 302.5L382.7 299.8L380.5 297.7Z"/>
<path fill="#dd9a8a" d="M397.7 298.9L392.1 297.9L394.7 302.8L397.7 299.0Z"/>
<path fill="#dd9a8a" d="M407.2 310.3L403.9 306.4L403.9 306.2L399.8 305.2L399.7 303.9L398.2 302.9L394.8 303.7L394.4 304.5L394.7 306.4L395.9 308.2L393.1 311.3L394.5 313.6L399.9 312.2L399.8 312.8L400.9 318.0L400.8 319.1L403.2 320.7L404.8 320.6L406.0 317.6L409.6 313.8L410.0 312.7L409.2 312.3L407.2 310.4ZM400.6 310.8L405.8 310.7L403.8 313.8L400.2 311.3L400.2 311.1Z"/>
<path fill="#818394" d="M362.4 276.9L361.9 273.4L361.8 273.3L357.4 273.4L356.2 271.9L356.2 271.5L355.8 270.1L353.4 270.0L350.9 273.2L351.6 274.3L351.1 275.7L350.4 276.6L350.1 277.4L354.6 279.8L353.8 284.6L358.5 284.9L359.7 285.8L360.4 286.0L362.7 284.9L363.8 282.8L360.8 278.3Z"/>
<path fill="#9e766f" d="M442.9 253.9L442.2 254.4L445.7 259.5L447.8 258.6L447.3 254.8Z"/>
<path fill="#9e766f" d="M438.2 253.6L436.2 251.8L434.4 251.4L433.5 252.3L427.5 254.6L427.5 254.8L429.3 258.4L433.5 256.4L435.4 257.1L435.5 257.4L432.5 260.2L435.8 261.3L435.8 261.4L435.2 264.5L436.6 266.4L437.3 266.1L441.7 262.5L443.8 265.5L444.5 265.5L447.1 264.2L447.6 263.6L445.3 260.0L441.8 262.2L441.7 254.5L440.4 254.3L439.9 254.1Z"/>
<path fill="#3c404b" d="M307.9 271.1L303.3 271.3L300.9 270.3L303.9 263.8L307.1 265.1Z"/>
<path fill="#626b54" d="M296.5 159.5L294.2 158.5L291.9 159.7L290.0 159.5L289.9 159.6L290.5 162.2L293.4 162.8L294.8 163.5L295.0 163.5L295.7 167.1L293.7 167.8L293.7 167.9L293.5 170.7L294.1 171.3L296.3 171.3L296.3 171.3L298.2 170.0L302.6 173.1L304.0 170.4L301.3 165.8L301.4 165.3L296.0 162.7L296.0 161.4L296.3 160.5Z"/>
<path fill="#5d5c5f" d="M319.2 276.8L318.9 277.7L320.1 280.7L319.9 281.9L320.1 282.1L323.1 283.2L323.1 283.3L321.9 288.6L325.1 287.3L325.9 287.3L326.4 287.1L328.3 285.1L327.3 281.0L328.4 278.4L327.1 277.9L326.1 277.8L321.9 275.6Z"/>
<path fill="#cd8c6e" d="M366.7 265.3L363.8 263.1L361.0 265.8L360.5 265.6L356.4 266.2L355.8 270.1L356.2 271.5L359.8 270.7L360.9 269.6L361.9 266.9L362.1 266.9L363.2 268.0L366.0 267.5L366.9 271.6L367.5 271.9L370.7 267.5L369.0 265.5L368.9 265.4L368.7 265.3Z"/>
<path fill="#948578" d="M379.9 251.4L382.2 249.0L381.6 245.9L376.7 246.6L376.6 246.9L377.1 250.6L377.9 251.4L374.7 257.5L375.1 257.7L378.5 256.5L379.6 252.2L379.4 251.6Z"/>
<path fill="#47494b" d="M336.0 200.8L334.9 200.5L331.1 204.6L331.7 205.8L328.1 208.8L326.0 208.4L326.0 208.4L325.3 212.6L324.7 214.1L328.2 216.4L328.9 215.9L332.7 214.8L332.8 214.1L330.1 211.9L330.3 210.6L332.1 210.1L333.8 208.2L333.9 207.1L335.7 205.9Z"/>
<path fill="#697a69" d="M291.3 278.2L292.6 279.3L295.8 274.6L295.7 273.5L290.4 274.2L287.4 270.3L284.0 273.8L283.7 279.5L289.9 275.5Z"/>
<path fill="#697a69" d="M285.6 281.5L286.4 282.1L291.4 281.6L289.6 279.4Z"/>
<path fill="#817f8b" d="M408.2 336.0L407.7 333.3L407.6 333.1L405.2 331.8L403.3 333.0L401.9 335.8L401.9 335.9L403.3 337.5L408.1 336.1Z"/>
<path fill="#5a5661" d="M352.2 266.3L350.3 266.3L347.5 264.2L347.1 261.3L346.0 260.0L345.7 259.6L341.3 261.3L338.4 258.9L336.2 261.5L336.2 261.6L336.8 266.4L337.9 266.6L340.6 262.6L342.5 265.8L342.1 268.0L343.4 268.9L345.0 269.2L346.2 270.7L347.7 270.8L349.6 271.4L350.9 273.2L353.4 270.0L351.8 269.8L351.7 269.4Z"/>
<path fill="#5a5661" d="M345.9 272.3L345.3 273.4L342.6 273.8L342.2 279.3L345.4 279.7L346.4 280.4L350.1 277.4L350.4 276.6Z"/>
<path fill="#927e7a" d="M405.9 254.3L405.5 252.3L406.5 248.1L406.5 248.1L408.4 249.0L411.5 252.3L407.0 254.9Z"/>
<path fill="#61696e" d="M418.4 204.7L419.0 199.5L420.3 197.1L420.8 196.8L423.0 199.0L422.0 203.1L418.9 204.9Z"/>
<path fill="#818892" d="M257.8 199.2L260.1 196.3L258.0 195.2L257.0 194.2L253.7 192.3L248.8 198.9L252.7 198.5Z"/>
<path fill="#3c4448" d="M317.1 297.3L317.3 296.7L315.6 294.3L310.0 298.0L309.3 294.0L308.0 292.6L306.3 292.4L304.9 293.7L302.0 297.9L306.5 301.3L310.0 298.8L312.3 299.7Z"/>
<path fill="#5c656f" d="M389.5 150.2L391.6 150.9L395.9 149.8L397.9 148.2L397.9 148.2L395.6 147.0L390.3 147.5L390.2 147.6L386.5 145.0L384.8 147.3L385.3 148.7L389.5 148.7Z"/>
<path fill="#454d4a" d="M362.4 100.6L360.0 101.4L359.5 101.9L360.1 105.3L363.5 103.0Z"/>
<path fill="#8d7e70" d="M342.3 222.8L345.9 225.4L346.0 225.0L343.2 221.3Z"/>
<path fill="#8d7e70" d="M339.4 218.7L339.2 218.5L337.4 218.3L335.2 222.9L332.7 222.4L329.7 224.5L329.4 225.4L329.6 226.7L330.3 228.0L335.7 228.6L336.6 229.9L339.0 229.1L341.2 226.3L341.5 228.8L345.3 230.9L347.1 228.8L346.6 227.7L346.0 226.9L341.3 225.7L340.5 224.8L338.6 224.2Z"/>
<path fill="#658168" d="M320.5 135.8L317.3 136.5L315.9 136.4L313.6 138.0L313.1 139.7L311.2 141.5L311.1 141.8L311.7 143.4L314.6 145.0L315.6 148.1L316.3 148.3L319.0 147.7L319.3 144.4L321.0 144.7L321.5 145.8L322.4 146.5L324.0 145.5L323.1 144.2L326.3 138.5L325.7 138.3L320.9 140.9L318.8 139.9Z"/>
<path fill="#5d5f69" d="M329.7 224.5L327.5 220.2L323.9 222.1L323.1 221.2L323.3 218.9L323.0 218.4L320.1 220.8L319.2 216.3L318.1 216.6L317.7 224.3L317.9 224.4L319.8 226.9L324.0 224.5L329.4 225.4Z"/>
<path fill="#977159" d="M352.3 177.5L351.3 182.7L351.6 182.8L356.9 179.0L353.0 177.1Z"/>
<path fill="#9295a0" d="M327.8 93.6L330.1 94.8L333.2 93.6L337.5 100.9L337.7 100.9L339.9 107.1L338.5 108.0L341.1 112.3L341.3 112.5L344.6 108.1L341.6 107.0L340.5 102.2L338.4 100.5L340.6 97.3L338.8 93.1L335.9 91.7L335.7 90.8L332.5 87.4Z"/>
<path fill="#36333b" d="M406.3 293.6L403.6 291.6L400.2 293.4L399.6 297.6L400.0 297.9L406.6 298.3L406.7 298.6L402.3 301.5L405.0 304.4L407.2 303.8L408.4 304.5L408.8 305.0L407.2 310.3L407.2 310.4L409.2 312.3L410.0 312.7L410.9 312.5L411.5 311.6L412.9 306.6L413.4 306.3L414.3 304.6L416.0 303.5L413.7 298.6L413.7 298.5L413.5 298.3L410.4 298.7L410.2 293.7L409.2 293.4Z"/>
<path fill="#58595f" d="M316.1 202.5L315.7 198.0L309.7 199.0L309.5 199.5L307.5 202.3L308.6 205.9L308.1 209.5L315.2 208.7L316.4 206.2L315.8 204.9L315.8 204.9L315.9 202.6Z"/>
<path fill="#4d565a" d="M361.0 296.4L361.9 301.2L361.3 302.3L363.4 303.4L367.6 302.9L366.5 297.8L365.6 297.1L363.5 294.3Z"/>
<path fill="#4d565a" d="M350.5 290.9L348.9 292.0L349.9 294.5L353.5 294.6Z"/>
<path fill="#4d565a" d="M354.1 301.9L353.3 302.7L353.4 305.9L358.4 306.6L358.6 306.5L358.9 306.2L359.1 302.5L357.8 301.4L355.6 301.4L354.7 295.5L352.1 297.8Z"/>
<path fill="#9a755e" d="M321.7 198.3L323.7 191.6L323.0 191.0L319.2 191.6L318.5 190.8L317.4 188.0L314.9 188.5L314.1 192.2L314.0 192.4L318.7 193.2L318.6 196.4Z"/>
<path fill="#4d5657" d="M311.3 132.1L310.5 132.0L308.8 131.9L307.3 134.1L309.0 136.0L308.8 137.7L311.2 141.5L313.1 139.7L313.6 138.0L311.7 134.9Z"/>
<path fill="#948676" d="M457.4 250.3L455.0 250.8L453.2 250.6L452.9 250.6L451.0 252.7L452.0 256.3L456.1 256.8L457.5 258.8L457.6 258.8L462.1 255.7L459.9 252.5L459.5 252.2Z"/>
<path fill="#757d86" d="M452.1 272.5L450.1 274.1L447.1 273.1L446.7 272.7L445.8 272.8L445.5 272.9L444.5 274.2L446.8 278.0L447.0 280.4L445.5 281.6L445.2 283.6L443.7 286.4L443.5 288.8L443.9 289.1L453.4 291.9L454.0 291.2L454.8 290.1L460.5 282.5L466.4 274.6L465.3 273.9L462.8 273.3L461.3 265.9L459.7 265.7L456.0 267.8L456.0 272.7Z"/>
<path fill="#38413e" d="M296.7 186.4L294.7 184.7L290.1 187.4L289.3 189.3L290.0 190.3L290.0 190.5L291.1 192.5L295.9 192.1L296.0 192.4L297.6 194.4L297.8 194.8L300.9 194.5L302.4 191.6L299.8 190.0L297.8 186.2Z"/>
<path fill="#7e7c8a" d="M323.9 312.3L324.3 313.4L326.2 316.1L329.0 317.6L329.0 318.8L328.2 323.1L332.0 327.3L334.7 326.8L336.0 324.8L340.6 322.7L340.8 322.1L335.9 316.3L335.6 316.3L335.6 316.3L331.4 316.1L331.4 311.1Z"/>
<path fill="#596757" d="M250.1 254.8L255.4 252.3L254.1 247.0L246.3 249.1L246.3 249.4L247.8 253.8Z"/>
<path fill="#f6b17b" d="M305.2 287.1L304.8 283.8L301.7 282.8L300.0 284.5L301.7 286.6L301.2 290.3L304.2 289.9L304.4 288.2Z"/>
<path fill="#72778a" d="M329.0 317.6L326.2 316.1L323.2 319.2L323.1 321.8L317.4 320.0L317.3 320.1L316.9 323.4L319.8 325.2L319.9 331.4L321.1 332.3L321.8 332.8L329.2 331.2L330.0 329.7L324.1 328.8L324.2 328.3L324.9 326.9L331.0 328.6L332.0 327.3L328.2 323.1L329.0 318.8Z"/>
<path fill="#da9d7b" d="M422.8 226.2L423.9 228.5L426.2 229.6L429.0 228.0L429.0 227.9L424.3 223.6Z"/>
<path fill="#da9d7b" d="M415.2 220.5L417.3 226.3L417.9 226.3L421.9 222.1L420.8 220.4L416.8 219.8Z"/>
<path fill="#828b8d" d="M363.6 217.7L360.9 217.5L360.7 217.6L357.4 217.4L357.0 220.0L360.1 220.7L360.7 222.0L360.0 224.1L358.9 225.4L359.3 226.5L361.8 227.9L364.4 228.1L368.1 229.7L369.7 226.9L370.0 223.0L365.4 222.3L363.8 220.6Z"/>
<path fill="#9c8a83" d="M414.9 205.2L414.5 204.9L410.0 206.8L409.7 207.7L404.2 204.2L404.1 204.3L403.1 204.1L401.0 204.7L399.0 206.7L398.9 207.9L405.4 210.2L405.4 210.2L408.1 210.2L409.1 217.3L410.7 217.6L412.3 212.8L408.9 210.0L409.1 209.7L415.0 208.1Z"/>
<path fill="#666766" d="M315.0 152.8L313.0 150.5L312.1 150.3L311.3 153.4L313.0 155.2L312.4 155.4L308.8 155.5L307.7 156.0L307.9 156.6L309.1 158.2L310.6 158.6L310.9 158.8L314.7 156.4L314.2 155.2Z"/>
<path fill="#626469" d="M273.0 273.8L269.3 275.3L268.0 271.8L272.2 272.8L273.1 273.6Z"/>
<path fill="#61636d" d="M282.9 246.3L282.3 245.7L282.3 245.7L281.6 245.9L278.9 249.4L279.0 251.1L282.2 252.4L283.8 252.4Z"/>
<path fill="#61636d" d="M284.5 253.4L283.7 256.6L287.7 258.7L284.6 265.1L284.8 265.4L286.6 266.6L286.6 266.7L287.4 270.2L297.1 269.6L296.5 268.3L295.8 264.1L295.0 262.9L295.1 262.1L290.2 259.1L289.2 258.0L289.8 256.4Z"/>
<path fill="#6c7e6a" d="M238.2 230.9L237.4 230.4L232.5 228.5L231.6 228.4L231.1 230.3L231.6 233.8L231.3 234.1L228.4 234.3L226.8 235.6L228.1 238.5L227.0 240.4L227.5 241.3L232.5 241.0L233.0 240.3L233.4 239.6L235.0 239.2L233.3 234.3L236.3 233.7L238.2 231.7Z"/>
<path fill="#7c828c" d="M418.6 321.2L415.3 322.0L413.8 327.9L414.0 328.5L414.0 328.5L410.4 329.6L406.4 327.6L404.7 328.7L405.2 331.8L407.6 333.1L407.7 333.3L408.2 336.0L408.1 336.1L407.2 344.1L411.2 348.2L411.8 347.5L416.8 340.8L420.0 336.5L424.4 330.6L426.1 328.3L428.2 325.5L432.7 319.5L430.9 318.2L426.1 321.1L423.1 324.7L422.9 324.8L421.4 324.8Z"/>
<path fill="#7c8592" d="M371.4 352.2L370.4 352.9L370.2 353.9L366.5 355.6L366.0 355.6L365.5 356.0L360.6 361.9L362.4 363.3L368.7 368.1L375.2 372.9L384.2 379.6L385.9 380.9L386.4 381.3L393.1 372.4L394.0 371.1L394.3 370.7L394.5 370.5L391.9 366.0L390.6 366.1L388.1 368.3L385.7 369.4L385.3 369.2L385.4 368.3L383.9 364.6L378.0 367.2L377.0 364.5L384.0 363.4L384.6 362.3L384.0 360.8L383.0 359.8L381.9 359.7L380.0 356.6L375.0 358.1L377.3 352.9L377.2 352.5Z"/>
<path fill="#f4ab88" d="M420.6 181.3L421.5 181.1L421.9 178.8L419.4 174.1L417.6 173.5L416.4 174.6L416.3 174.7L415.1 176.8L414.8 179.4L416.6 181.9L418.9 181.4Z"/>
<path fill="#616c5a" d="M328.0 203.4L326.8 201.6L326.6 201.2L323.3 199.3L322.2 199.2L321.7 200.0L316.1 202.5L315.9 202.6L315.8 204.9L315.8 204.9L316.4 206.2L320.6 207.9L322.0 207.0L322.6 207.1L326.0 208.4L326.0 208.4L328.1 208.8L331.7 205.8L331.1 204.6L329.7 203.8Z"/>
<path fill="#444145" d="M312.7 214.5L308.1 210.0L305.5 214.9L308.3 219.4L311.5 221.2L313.3 217.0Z"/>
<path fill="#9f7d63" d="M358.5 284.9L359.7 285.8L356.1 291.9L352.5 288.9L352.3 285.4L353.8 284.6Z"/>
<path fill="#ecb995" d="M399.9 230.5L400.6 227.7L398.5 226.5L395.6 228.4L398.9 231.5Z"/>
<path fill="#ecb995" d="M394.1 223.1L391.8 223.0L391.0 225.4L391.1 227.0L391.9 227.2L394.8 224.6Z"/>
<path fill="#ecb995" d="M394.3 231.1L390.3 231.9L388.5 229.6L385.5 231.6L388.5 234.9L390.4 232.3L392.8 235.7L396.3 235.8L396.4 235.5Z"/>
<path fill="#ecb995" d="M376.8 228.2L377.1 230.6L382.1 232.2L383.3 231.9L382.1 225.1L379.4 223.9Z"/>
<path fill="#565c61" d="M321.6 134.2L318.6 132.2L317.7 132.0L315.8 133.6L312.6 131.2L311.3 132.1L311.7 134.9L313.6 138.0L315.9 136.4L317.3 136.5L320.5 135.8L318.8 139.9L320.9 140.9L325.7 138.3L321.8 135.3Z"/>
<path fill="#9a7157" d="M355.8 173.0L353.0 177.1L356.9 179.0L357.5 179.0L360.0 176.2L359.3 174.0Z"/>
<path fill="#9a7157" d="M349.8 175.7L349.2 172.9L346.9 172.5L345.3 174.0L346.0 175.5L346.5 177.7L345.5 178.8L350.5 183.2L351.2 182.7L347.9 177.4L349.6 175.9Z"/>
<path fill="#908177" d="M342.5 239.5L342.1 238.4L337.4 235.8L337.1 236.2L337.8 242.7Z"/>
<path fill="#5a5d60" d="M488.9 220.6L488.8 220.5L487.4 224.5L489.2 225.1L491.2 224.4Z"/>
<path fill="#5a5d60" d="M498.7 231.5L501.2 228.2L497.3 225.7L493.0 226.2L492.2 230.2L496.2 231.9Z"/>
<path fill="#5a5d60" d="M483.4 225.5L485.4 226.9L487.2 224.6L484.7 222.0L484.2 222.8Z"/>
<path fill="#6d7c6c" d="M328.4 115.1L326.9 117.9L325.2 117.2L321.5 117.2L321.4 117.3L320.0 120.2L320.7 122.1L321.6 122.8L326.0 119.7L325.8 123.1L328.4 126.1L329.7 125.3L329.1 120.8L328.1 118.7L337.8 118.8L335.6 115.6L331.1 113.3Z"/>
<path fill="#536354" d="M308.0 292.6L309.3 294.0L314.5 292.2L313.3 288.6L311.8 287.8L310.2 287.9Z"/>
<path fill="#5e6571" d="M296.0 196.4L295.9 200.9L298.8 199.3L297.3 195.7Z"/>
<path fill="#5e6571" d="M298.7 203.4L300.7 204.6L304.7 201.8L302.7 199.6L299.4 199.7Z"/>
<path fill="#696f82" d="M294.2 302.6L294.6 305.7L292.0 305.5L291.6 304.5L291.6 304.1L291.4 302.0L290.5 299.1L288.3 298.6L287.4 298.8L286.3 293.1L286.1 293.0L281.0 293.7L280.6 292.5L274.2 291.9L272.7 292.5L270.7 289.0L269.0 287.5L266.3 287.2L263.1 288.2L262.7 288.5L263.7 289.3L272.1 294.2L271.8 295.4L277.4 299.5L283.7 304.2L289.5 308.6L293.3 311.5L296.0 313.5L296.6 313.9L301.8 317.9L304.5 319.8L309.3 317.9L309.5 313.9L309.3 312.3L308.2 311.7L305.8 312.7L302.9 315.8L301.6 311.3L302.0 310.9L301.9 309.3L301.0 307.8L301.7 306.1L296.1 305.5L296.3 305.2L298.7 303.0L298.4 298.2L296.1 297.8L295.0 301.7L294.3 302.4Z"/>
<path fill="#696f82" d="M331.0 328.6L324.9 326.9L324.2 328.3L324.1 328.8L330.0 329.7L330.8 329.0Z"/>
<path fill="#696f82" d="M312.3 318.3L309.7 318.2L311.2 323.6L314.3 319.4Z"/>
<path fill="#696f82" d="M329.2 331.2L321.8 332.8L328.0 337.5L328.8 336.5Z"/>
<path fill="#696f82" d="M319.8 325.2L316.9 323.4L312.8 326.1L319.9 331.4Z"/>
<path fill="#3a3b3c" d="M383.9 295.5L381.2 296.7L380.5 297.7L382.7 299.8L386.0 300.0L385.0 302.6L384.1 303.9L385.3 306.5L386.7 307.6L388.8 307.6L389.1 307.2L394.7 306.4L394.4 304.5L390.3 303.1L388.6 297.5L388.9 296.8Z"/>
<path fill="#968680" d="M287.1 197.6L286.6 196.8L282.6 196.7L280.6 197.7L281.6 200.4L286.7 202.0Z"/>
<path fill="#536250" d="M341.5 179.7L342.2 181.5L348.0 184.8L349.1 184.9L350.5 183.2L345.5 178.8Z"/>
<path fill="#53515f" d="M394.5 313.6L394.7 316.6L394.6 317.5L397.9 319.7L400.8 319.1L400.9 318.0L399.8 312.8L399.9 312.2Z"/>
<path fill="#eeb68f" d="M336.8 295.5L336.5 295.2L334.6 295.5L333.7 296.9L334.8 299.1L335.9 298.5Z"/>
<path fill="#eeb68f" d="M339.9 301.1L334.9 300.3L336.8 303.6L340.5 303.5Z"/>
<path fill="#627668" d="M294.6 227.5L294.2 227.1L291.2 228.6L291.0 229.8L290.9 230.4L288.1 232.5L292.3 235.0L292.6 234.9L295.6 235.3L296.9 236.9L299.4 237.2L301.9 235.4L296.4 232.4L296.3 231.9L293.9 231.2Z"/>
<path fill="#a67b65" d="M293.8 179.5L294.6 177.6L292.4 174.6L290.7 174.5L289.2 176.3Z"/>
<path fill="#a67b65" d="M294.7 184.7L292.8 181.8L288.7 182.0L287.5 181.7L286.0 178.0L283.1 175.8L276.7 178.5L275.9 179.2L278.1 183.0L285.1 184.5L285.3 187.8L289.3 189.3L290.1 187.4Z"/>
<path fill="#ecb08e" d="M397.7 211.7L397.6 211.6L392.2 211.0L391.4 207.4L389.0 207.5L388.3 207.3L384.2 209.5L385.6 212.4L387.5 213.6L387.4 215.6L391.3 219.1L391.6 218.9L395.7 221.6L397.7 221.3L397.9 217.3L397.1 216.4Z"/>
<path fill="#64686f" d="M306.8 246.4L310.2 249.2L310.6 249.2L313.8 245.9L313.5 244.9L310.0 243.6Z"/>
<path fill="#708278" d="M372.5 218.8L374.5 215.8L374.0 211.2L367.7 211.6L366.4 208.5L365.7 208.2L364.0 206.9L361.4 206.6L359.8 207.4L360.6 212.5L363.7 214.3L364.1 214.9L364.3 217.1L365.4 217.2L371.7 218.4Z"/>
<path fill="#a07660" d="M465.9 225.2L458.5 228.3L457.7 230.5L457.8 231.2L457.9 231.2L461.3 233.8L463.0 234.2L465.5 233.4L466.8 232.2L465.5 230.2Z"/>
<path fill="#93807a" d="M452.9 250.6L448.5 245.8L444.6 247.7L444.7 249.0L450.0 252.9L451.0 252.7Z"/>
<path fill="#667d6f" d="M338.5 244.9L338.5 244.8L337.0 245.1L331.3 241.5L330.3 242.0L329.9 242.6L331.0 247.2L331.7 248.1L331.7 248.8L331.7 248.9L336.9 254.7L337.9 254.7L340.0 253.4L340.3 252.2L336.9 249.2Z"/>
<path fill="#576252" d="M311.3 132.1L312.6 131.2L314.3 127.8L309.6 127.2L308.2 126.7L306.2 128.8L306.4 129.3L302.8 134.9L303.3 136.0L303.3 136.0L307.3 134.1L308.8 131.9L310.5 132.0Z"/>
<path fill="#6c8070" d="M312.7 177.7L311.0 177.4L309.7 174.2L308.4 175.2L306.9 178.7L306.8 178.7L302.3 180.1L302.4 182.7L306.7 182.7L307.3 183.3L309.8 183.2L311.0 185.9L312.6 186.4L315.0 182.5L311.9 181.5Z"/>
<path fill="#9e7e5f" d="M352.6 192.3L347.6 190.4L346.9 191.0L346.9 191.8L343.0 195.2L347.9 195.8L348.5 196.6L348.0 197.5L346.1 203.7L346.5 204.0L352.6 200.3L351.1 197.6L355.1 196.0L356.8 195.1L354.8 191.5Z"/>
<path fill="#a17768" d="M391.8 223.0L391.8 223.0L394.1 223.1L395.7 221.6L391.6 218.9L391.3 219.1L391.1 219.4Z"/>
<path fill="#a17768" d="M394.8 224.6L391.9 227.2L394.5 228.8L394.3 231.1L396.4 235.5L396.9 235.2L398.9 231.5L395.6 228.4L395.3 228.5L395.0 224.7Z"/>
<path fill="#3e4849" d="M417.4 267.5L414.5 265.4L411.8 266.1L411.5 269.1L413.8 271.2L414.1 273.0L416.3 275.6L416.7 275.9L417.5 275.9L419.5 270.5L419.2 270.0L418.0 268.9Z"/>
<path fill="#636a6b" d="M390.5 237.6L391.8 240.5L393.3 241.5L396.8 240.0L396.3 235.8L392.8 235.7L390.4 232.3L388.5 234.9L385.5 231.6L383.6 232.0L384.6 236.5L384.3 238.2L384.3 238.2L388.6 237.6L389.8 236.6L390.5 236.8Z"/>
<path fill="#535b4e" d="M270.7 264.2L269.9 263.4L269.6 261.6L268.4 260.5L264.9 260.3L264.6 260.4L261.6 260.2L261.6 260.3L262.7 264.3L262.5 266.7L262.2 267.1L262.1 267.2L266.1 271.0L266.3 271.8L267.5 271.7L268.0 271.8L272.2 272.8L273.1 273.6L273.5 273.4L275.2 272.0L274.8 269.0L272.0 268.4L271.1 269.8L269.7 269.1L268.8 267.4Z"/>
<path fill="#e09f80" d="M368.4 315.1L367.3 318.3L367.6 318.6L372.0 318.5L373.7 315.1L375.2 313.7L375.4 313.4L375.7 311.7L368.6 311.9L368.1 313.1L368.2 313.8Z"/>
<path fill="#e09f80" d="M368.5 321.8L368.5 322.3L368.8 323.0L371.1 323.2L372.7 321.2Z"/>
<path fill="#585d63" d="M320.0 174.7L314.0 175.6L312.7 177.7L317.5 180.9L317.1 181.9L318.1 184.2L324.9 183.6L324.9 182.8L318.5 179.9Z"/>
<path fill="#585d63" d="M327.6 187.6L322.7 188.2L323.0 191.0L323.7 191.6L325.6 191.7L327.5 190.4Z"/>
<path fill="#5c656d" d="M464.6 238.2L463.0 234.2L461.3 233.8L457.9 231.2L457.8 231.2L454.7 235.2L455.1 237.9L456.7 239.6L458.3 240.2L461.6 242.5L462.6 242.1L466.8 245.5L466.9 248.0L467.2 248.2L472.8 246.5L473.5 244.8L468.5 243.4L467.4 240.6L464.7 240.2L464.5 238.4Z"/>
<path fill="#98887d" d="M413.5 280.2L415.0 277.3L407.3 277.7L407.3 277.6L407.0 277.7L401.5 283.5L404.3 287.4L403.6 291.6L406.3 293.6L409.2 293.4L410.8 289.4L412.8 290.7L414.5 288.4L413.5 287.8L415.8 284.0L411.9 285.1L411.9 285.1L411.8 282.4L409.0 281.0L407.5 277.9Z"/>
<path fill="#efba9b" d="M326.1 173.3L329.0 175.0L331.1 173.8L332.1 170.5L332.2 169.8L328.0 172.0Z"/>
<path fill="#efba9b" d="M326.2 179.2L328.1 179.1L329.9 178.0L329.0 175.0L326.8 177.3Z"/>
<path fill="#efba9b" d="M325.3 182.1L325.7 179.4L320.1 174.6L320.0 174.7L318.5 179.9L324.9 182.8Z"/>
<path fill="#45444a" d="M291.7 247.2L290.3 247.2L289.3 248.5L289.2 250.2L289.6 250.8L294.5 252.4L296.0 251.7L296.4 251.0L298.5 249.4L298.5 249.1L296.4 246.3L294.5 245.8Z"/>
<path fill="#677567" d="M232.5 241.6L232.5 241.0L227.5 241.3L227.0 240.4L223.0 239.7L221.4 242.2L225.5 245.0L224.7 246.1L221.9 247.3L222.6 251.7L226.4 250.1L228.7 249.9L233.3 252.4L233.4 252.5L237.8 253.7L239.3 255.3L246.3 249.4L246.3 249.1L244.0 246.5L240.3 248.9L238.3 245.1L236.6 244.4L236.4 244.1L236.9 239.4L235.0 239.2L233.4 239.6L233.0 240.3L235.2 244.1L235.2 244.1Z"/>
<path fill="#a17b65" d="M393.0 152.7L393.0 153.0L393.8 155.8L397.7 155.5L398.2 154.3L398.1 149.1L397.9 148.2L395.9 149.8Z"/>
<path fill="#a17b65" d="M391.6 150.9L389.5 150.2L389.5 148.7L385.3 148.7L384.0 151.5L384.9 153.0L385.7 153.4L387.9 153.6L389.0 151.7L392.8 152.6Z"/>
<path fill="#a57668" d="M379.6 252.2L378.5 256.5L375.1 257.7L374.7 257.5L377.9 251.4L377.1 250.6L374.2 250.7L370.6 256.5L373.0 257.8L372.8 260.9L373.7 262.6L374.1 264.0L374.1 264.1L377.7 268.2L378.0 269.4L379.4 270.2L380.9 269.9L381.3 263.8L380.1 263.1L378.6 261.7L378.2 260.1L381.0 258.1L382.0 257.6Z"/>
<path fill="#8e7973" d="M445.4 215.5L443.2 219.6L439.9 216.5L439.7 216.5L439.5 216.8L436.5 217.8L436.2 218.5L436.2 218.6L438.0 219.3L442.0 222.2L442.8 221.7L447.3 223.1L446.4 226.5L448.3 230.6L447.5 233.0L447.5 233.1L454.7 235.2L457.8 231.2L457.7 230.5L458.5 228.3L458.0 225.8L455.0 223.4L455.0 223.3L450.0 222.7L450.6 220.5L450.6 217.4Z"/>
<path fill="#44454b" d="M327.6 195.4L327.4 195.4L325.6 191.7L323.7 191.6L321.7 198.3L322.2 199.2L323.3 199.3L326.6 201.2L327.0 201.0L331.6 200.4L329.7 203.8L331.1 204.6L334.9 200.5L333.3 199.2L332.7 198.1L329.8 198.3L327.7 195.4Z"/>
<path fill="#626b69" d="M259.7 228.3L255.4 224.2L254.8 224.6L254.6 224.6L251.3 225.8L251.5 223.5L250.2 223.5L248.3 222.9L248.2 222.4L245.6 222.1L244.6 224.8L247.2 226.4L247.8 227.7L249.8 228.0L249.9 228.1L253.9 231.1L253.9 231.1L258.2 230.0Z"/>
<path fill="#3d474b" d="M367.2 251.5L363.8 249.4L362.5 250.4L362.0 253.5L362.4 255.3L367.3 257.0L368.4 256.1L368.2 253.6Z"/>
<path fill="#5d725e" d="M325.3 212.6L326.0 208.4L322.6 207.1L322.0 207.0L320.6 207.9L316.4 206.2L315.2 208.7L308.1 209.5L308.0 209.7L308.1 210.0L312.7 214.5L313.3 217.0L318.1 216.6L319.2 216.3L321.0 214.9L314.7 212.7L316.0 211.2L319.7 211.3L321.2 214.8L321.9 215.0L323.0 218.4L323.3 218.9L327.5 219.7L328.4 217.4L328.2 216.4L324.7 214.1Z"/>
<path fill="#6c7963" d="M319.3 297.2L320.6 300.5L323.1 298.7Z"/>
<path fill="#6c7963" d="M319.2 301.8L318.4 301.3L314.6 302.3L313.5 301.5L312.3 299.7L310.0 298.8L306.5 301.3L306.4 302.7L311.9 304.1L312.3 306.7L313.9 308.1L314.5 309.7L317.5 310.8L320.8 309.7L320.4 304.7L320.2 304.4Z"/>
<path fill="#a98066" d="M286.8 213.0L285.0 214.5L284.7 216.0L284.0 216.2L281.3 218.6L281.2 219.6L280.9 219.9L282.7 225.7L286.5 225.8L287.9 224.3L288.3 223.6L289.6 223.5L293.3 224.9L293.9 225.3L298.2 222.6L294.6 220.0L294.4 219.8L293.9 217.1L291.7 216.1L290.4 214.7L290.2 213.3Z"/>
<path fill="#3a3e42" d="M394.7 174.3L392.7 171.7L390.6 172.9L389.2 175.5L395.5 179.0L396.4 177.8Z"/>
<path fill="#3a3e42" d="M383.9 180.9L384.3 182.9L392.0 179.6L388.9 177.6Z"/>
<path fill="#d0967a" d="M352.2 266.3L355.4 265.3L355.5 265.3L356.4 266.2L355.8 270.1L353.4 270.0L351.8 269.8L351.7 269.4Z"/>
<path fill="#606d65" d="M322.2 150.7L322.0 157.0L325.0 156.9L325.7 156.7L328.6 152.8L327.9 149.3L324.4 149.4L324.3 149.1L322.4 146.5L321.5 145.8L321.8 150.4Z"/>
<path fill="#62696e" d="M275.3 189.5L273.2 187.7L269.4 186.0L269.3 186.4L275.1 191.6Z"/>
<path fill="#62696e" d="M275.1 192.6L269.8 193.3L269.7 193.6L274.1 198.1L273.9 198.3L272.5 201.5L275.3 202.7L277.1 201.2L278.7 197.1L277.8 196.3L277.3 194.5Z"/>
<path fill="#627467" d="M322.4 124.5L322.1 124.4L319.9 126.8L319.2 127.3L315.6 126.9L317.7 132.0L318.6 132.2L321.6 134.2L322.2 132.3L327.0 129.1L327.0 129.1L327.0 128.7L324.6 127.8Z"/>
<path fill="#454445" d="M356.1 215.8L357.4 217.4L360.7 217.6L360.9 217.5L363.6 217.7L364.3 217.1L364.1 214.9L363.7 214.3L360.6 212.5L359.8 207.4L358.7 207.4L355.7 205.6L354.2 206.0L350.8 212.2L354.0 213.7L354.5 215.1Z"/>
<path fill="#5c606b" d="M224.7 246.1L225.5 245.0L221.4 242.2L218.8 244.1L214.8 244.3L214.0 245.3L222.6 251.7L222.6 251.7L221.9 247.3Z"/>
<path fill="#a88473" d="M297.8 215.6L302.7 215.4L301.4 212.1L298.0 211.6L297.9 211.7L295.3 209.1L292.5 208.9L290.9 210.5L290.2 213.3L290.4 214.7L291.7 216.1L293.9 217.1L297.6 215.4Z"/>
<path fill="#3b433e" d="M307.5 202.3L304.7 201.8L300.7 204.6L298.7 203.4L297.2 203.5L295.5 208.8L300.7 206.0L301.8 207.9L298.0 211.6L301.4 212.1L305.2 209.6L308.0 209.7L308.1 209.5L308.6 205.9Z"/>
<path fill="#7d888e" d="M362.6 178.2L360.0 176.2L357.5 179.0L356.9 179.0L351.6 182.8L353.6 183.6L357.7 181.0L360.0 183.4Z"/>
<path fill="#33363b" d="M350.1 245.9L350.8 242.8L350.3 241.7L349.4 240.3L342.9 240.5L343.0 240.8L346.8 246.5L349.4 246.7Z"/>
<path fill="#646267" d="M339.6 168.1L335.6 169.7L337.2 171.1L339.5 171.7L340.2 171.5L340.7 171.6L340.9 171.4L345.0 167.1L344.9 165.6L343.8 164.7L342.0 164.4L341.2 164.4L340.6 164.7Z"/>
<path fill="#f3a777" d="M387.4 215.6L384.9 218.2L382.4 218.1L382.3 218.1L379.1 223.4L379.4 223.9L382.1 225.1L383.3 231.9L383.6 232.0L385.5 231.6L388.5 229.6L390.3 231.9L394.3 231.1L394.5 228.8L391.9 227.2L391.1 227.0L391.0 225.4L391.8 223.0L391.8 223.0L391.1 219.4L391.3 219.1Z"/>
<path fill="#8b93a6" d="M387.1 133.9L385.0 137.0L384.4 137.1L383.8 137.6L379.3 135.6L377.4 137.2L382.1 141.6L381.5 142.3L381.9 146.3L384.8 147.3L386.5 145.0L386.1 143.1L389.0 141.6L389.8 139.2L389.3 138.3L390.2 135.2Z"/>
<path fill="#9f7864" d="M428.9 180.8L431.6 181.4L433.4 175.7L431.4 174.8L428.2 175.9Z"/>
<path fill="#6c7c6f" d="M333.1 257.7L336.1 258.6L337.8 255.7L337.9 254.7L336.9 254.7L334.9 255.4L333.2 256.6Z"/>
<path fill="#6c7c6f" d="M340.6 262.6L337.9 266.6L339.3 267.6L342.1 268.0L342.5 265.8Z"/>
<path fill="#6c7c6f" d="M335.2 261.0L333.8 260.8L332.8 259.6L329.1 260.2L329.0 260.2L330.5 263.7L331.7 264.5L332.2 264.3L336.5 266.6L336.8 266.4L336.2 261.6L336.2 261.5Z"/>
<path fill="#edb295" d="M424.1 186.5L429.1 187.3L429.5 188.4L426.3 192.6L425.0 192.5L423.8 187.4Z"/>
<path fill="#a07660" d="M338.5 244.9L339.3 245.0L341.1 251.3L341.5 251.1L344.7 247.6L340.2 244.6L343.0 240.8L342.9 240.5L342.5 239.5L337.8 242.7L337.1 236.2L331.4 241.5L337.7 242.9L338.5 244.8Z"/>
<path fill="#6c836d" d="M393.7 332.2L392.5 328.2L392.2 327.9L390.2 324.7L389.7 324.2L389.4 323.7L381.7 326.7L381.1 328.6L381.3 329.1L375.2 331.6L373.4 334.8L373.9 335.8L378.1 335.6L378.6 335.5L381.4 337.8L386.1 334.8L387.9 337.5L390.7 337.5L390.1 333.0ZM388.1 332.0L385.8 333.7L382.1 331.0L381.9 329.8L386.4 327.7L388.3 331.6Z"/>
<path fill="#84828b" d="M307.3 134.1L303.3 136.0L303.3 136.0L302.9 137.1L302.9 138.1L298.5 141.5L298.8 145.6L299.3 146.3L299.5 147.4L299.8 147.5L300.2 147.6L304.8 146.9L306.5 142.1L311.1 141.8L311.2 141.5L308.8 137.7L309.0 136.0Z"/>
<path fill="#7c828b" d="M413.3 252.4L415.8 251.2L417.9 248.5L417.9 248.4L412.9 247.0L412.1 246.0L411.4 246.2L411.1 247.1L408.4 249.0L411.5 252.3L412.8 252.2L413.1 252.3Z"/>
<path fill="#858593" d="M258.0 195.2L260.1 196.3L260.4 196.3L261.2 195.4L261.7 194.4L261.2 191.6L258.7 190.6L257.4 189.2L256.1 189.1L253.7 192.3L257.0 194.2Z"/>
<path fill="#fffdff" d="M399.1 177.6L396.4 177.8L395.5 179.0L394.9 179.8L394.7 182.4L393.9 183.2L392.6 186.4L392.3 188.6L392.1 190.2L391.8 190.7L393.2 191.9L394.7 197.3L397.5 196.7L397.6 196.7L398.1 196.3L401.8 197.3L403.5 194.9L403.5 194.9L404.7 195.3L405.9 196.4L407.8 195.6L408.1 194.1L408.6 193.3L408.4 192.5L407.1 190.4L407.4 189.0L408.6 188.0L407.5 181.6L406.4 182.5L404.9 187.4L401.8 186.2L402.2 184.7L400.3 178.0Z"/>
<path fill="#7b8a93" d="M294.7 282.4L294.3 282.1L294.1 282.1L290.3 286.2L291.7 288.9L291.7 288.9L292.2 291.5L293.1 292.3L296.1 291.9L297.8 289.6L296.9 287.7L297.5 285.6Z"/>
<path fill="#7b8a93" d="M285.9 289.2L286.1 293.0L286.3 293.1L287.4 298.8L288.3 298.6L289.7 293.6L288.6 292.6L288.7 290.3Z"/>
<path fill="#83868d" d="M385.6 184.1L387.3 187.4L389.8 186.5L390.2 186.1L389.6 184.3Z"/>
<path fill="#83868d" d="M381.9 177.8L381.6 177.5L375.8 179.8L377.3 181.6Z"/>
<path fill="#5a6958" d="M265.3 209.8L261.9 209.1L263.3 215.1L263.0 215.7L263.5 218.5L263.1 219.3L262.8 222.3L262.2 224.6L262.5 225.2L267.5 224.4L270.1 227.4L271.0 228.1L273.2 228.7L273.9 228.1L274.1 224.6L274.1 223.2L273.4 221.7L272.3 220.9L270.8 220.8L268.9 217.6L268.9 217.1L267.7 215.3L268.5 212.8Z"/>
<path fill="#45414a" d="M286.6 266.6L284.8 265.4L279.4 271.3L279.3 271.5L279.0 271.7L279.3 276.8L280.4 280.5L282.9 280.6L283.3 280.4L283.7 279.5L284.0 273.8L287.4 270.3L287.4 270.2L286.6 266.7Z"/>
<path fill="#ab7f6d" d="M422.4 258.3L421.3 258.5L420.3 261.4L420.6 262.5L421.3 263.5L417.4 267.5L418.0 268.9L419.2 270.0L423.7 264.6L425.0 264.8L425.5 265.5L430.3 266.6L431.9 264.2L430.3 260.0L429.3 259.3L429.3 258.4L427.5 254.8L422.6 258.1Z"/>
<path fill="#505660" d="M284.8 265.4L284.6 265.1L282.2 263.7L277.8 267.7L279.4 271.3Z"/>
<path fill="#52525a" d="M331.3 112.3L331.3 111.8L330.9 108.1L328.9 107.7L326.2 102.8L321.6 101.9L319.1 105.2L315.6 109.8L318.5 113.0L319.4 116.1L321.4 117.3L321.5 117.2L325.2 117.2L326.9 117.9L328.4 115.1L325.8 110.1L326.5 109.7L331.1 113.1Z"/>
<path fill="#a6826c" d="M412.2 170.5L406.2 171.3L410.8 174.7L410.7 175.2L410.2 176.2L405.1 174.7L404.5 175.6L400.6 178.0L407.6 181.4L408.3 180.9L414.5 184.4L416.6 181.9L414.8 179.4L415.1 176.8L416.3 174.7L416.4 174.6L411.3 174.1L412.3 171.1Z"/>
<path fill="#414346" d="M449.6 199.0L456.7 205.7L456.9 205.4L458.0 202.7L457.7 201.2L452.7 197.4L449.9 198.6Z"/>
<path fill="#586062" d="M380.9 309.5L384.4 311.3L386.7 307.6L385.3 306.5Z"/>
<path fill="#586062" d="M377.1 310.3L378.4 309.2L379.8 304.3L378.8 302.5L376.9 300.6L374.4 300.8L372.2 303.3L375.1 309.5L376.3 310.7Z"/>
<path fill="#545f66" d="M385.1 256.8L382.6 257.8L382.0 257.6L381.0 258.1L378.2 260.1L378.6 261.7L380.1 263.1L381.3 263.8L383.5 262.7L383.8 262.8L386.2 264.8L387.4 264.8L387.5 264.9L389.3 268.4L394.1 267.6L393.6 265.1L390.9 263.4L390.6 261.2L390.2 261.1L387.8 259.4L387.7 258.8L387.6 258.1L386.8 256.8Z"/>
<path fill="#607461" d="M377.7 154.1L378.0 156.6L374.2 160.1L371.6 154.5L371.7 154.5L377.7 154.1Z"/>
<path fill="#9392a2" d="M398.1 149.1L405.0 153.9L405.0 153.9L404.1 148.4L399.7 146.7L397.9 148.2L397.9 148.2Z"/>
<path fill="#9392a2" d="M389.0 141.6L386.1 143.1L386.5 145.0L390.2 147.6L390.3 147.5L390.0 142.9Z"/>
<path fill="#6f8c7b" d="M310.6 236.8L312.7 236.6L314.5 240.5L314.2 243.6L313.5 244.9L310.0 243.6L308.5 241.9Z"/>
<path fill="#d5947b" d="M317.6 164.8L317.6 162.9L317.0 160.3L313.3 161.9L314.6 166.0L312.5 166.2L311.8 169.4L314.1 169.3L316.2 167.4L316.1 166.8Z"/>
<path fill="#d5947b" d="M311.1 163.3L313.3 161.8L311.8 159.9L309.6 161.8Z"/>
<path fill="#9f7664" d="M291.2 228.6L287.9 224.3L286.5 225.8L286.4 227.8L285.6 232.8L288.1 232.5L290.9 230.4L291.0 229.8Z"/>
<path fill="#727a7c" d="M277.0 161.3L277.5 161.7L279.1 169.1L277.8 170.0L274.5 169.9L272.4 178.8L275.9 179.2L276.7 178.5L283.1 175.8L283.7 172.9L288.0 169.8L288.0 169.4L287.5 166.4L284.5 164.0L284.0 163.3L286.6 159.7L285.9 158.1L281.2 155.8Z"/>
<path fill="#677e6d" d="M287.5 150.6L287.5 150.5L286.0 149.4L282.8 153.7L281.2 155.8L285.9 158.1L286.4 156.4L291.1 155.7L291.2 155.3L290.9 154.9L290.5 154.7Z"/>
<path fill="#fcb485" d="M315.5 282.7L316.5 287.2L319.3 288.2L320.0 288.6L320.1 282.1L319.9 281.9L320.1 280.7L318.9 277.7L315.3 278.8L311.4 273.7L311.3 273.7L309.6 276.6L308.4 277.9L310.0 282.1L313.8 282.7L314.6 282.3Z"/>
<path fill="#da9f80" d="M453.7 209.1L451.1 210.0L445.3 207.5L445.3 213.7L445.1 214.2L445.4 215.5L450.6 217.4L450.7 217.3L453.0 216.5L457.8 213.0L455.5 208.3Z"/>
<path fill="#7c8189" d="M299.9 242.7L300.4 246.6L298.5 249.1L296.4 246.3L297.7 243.6Z"/>
<path fill="#4a5c44" d="M393.2 338.0L390.7 337.5L387.9 337.5L385.4 341.8L385.8 342.4L389.9 345.3L390.1 347.5L394.0 348.5L397.1 345.8L395.9 342.7L393.7 341.5Z"/>
<path fill="#a27d6c" d="M334.8 217.3L332.7 214.8L328.9 215.9L328.2 216.4L328.4 217.4L327.5 219.7L323.3 218.9L323.1 221.2L323.9 222.1L327.5 220.2L329.7 224.5L332.7 222.4L333.0 219.0Z"/>
<path fill="#575959" d="M395.9 351.9L394.0 348.5L390.1 347.5L389.2 348.8L383.8 347.8L383.6 347.9L382.8 347.6L379.8 350.8L382.7 351.9L383.5 353.1L386.5 354.2L387.7 353.2L388.5 352.7L393.1 354.6Z"/>
<path fill="#e39d6e" d="M422.5 181.9L421.5 181.1L420.6 181.3L418.9 181.4L416.6 181.9L414.5 184.4L414.2 185.9L412.4 187.5L408.6 188.0L407.4 189.0L407.1 190.4L408.4 192.5L412.2 191.6L412.6 194.3L413.6 194.8L413.9 194.8L415.3 192.1L418.4 191.2L418.4 190.5L416.5 187.9L419.3 186.5L420.9 188.5L423.8 187.4L424.1 186.5L424.0 186.0Z"/>
<path fill="#f5aa81" d="M315.3 278.8L318.9 277.7L319.2 276.8L315.6 271.9L312.4 273.1L311.4 273.7Z"/>
<path fill="#f5aa81" d="M307.3 278.1L308.4 277.9L309.6 276.6L311.3 273.7L308.2 271.3L307.9 271.1L303.3 271.3L304.3 276.0L306.1 277.9Z"/>
<path fill="#f4b694" d="M428.1 236.4L424.4 234.9L422.3 236.8L424.4 241.1L420.0 242.2L423.3 245.1L423.4 246.2L422.3 249.4L423.9 251.3L424.3 251.4L426.6 253.1L432.1 246.8L432.1 246.7L430.9 246.0L428.7 245.8L428.3 245.5L425.9 241.9L425.9 241.8L428.6 238.9Z"/>
<path fill="#efbd96" d="M415.8 228.2L411.1 228.2L410.9 228.3L411.3 232.5L411.3 232.6L411.3 233.3L413.6 236.6L416.1 236.9L417.3 232.3L417.3 232.1L416.8 231.2Z"/>
<path fill="#505f63" d="M363.4 320.9L363.8 319.1L360.4 316.5L360.0 315.4L358.8 314.6L354.6 313.2L352.5 313.4L351.8 314.4L355.0 322.1L357.5 321.5L359.0 322.6Z"/>
<path fill="#aa7e6b" d="M436.5 266.6L438.1 271.0L436.6 274.0L439.3 276.6L436.2 281.8L437.6 282.5L443.7 286.4L445.2 283.6L445.5 281.6L447.0 280.4L446.8 278.0L444.5 274.2L445.5 272.9L442.3 271.3L441.5 269.9L442.2 268.4L437.3 266.1L436.6 266.4Z"/>
<path fill="#393b43" d="M269.4 186.0L269.2 184.7L271.9 178.8L272.4 178.8L275.9 179.2L278.1 183.0L278.1 184.4L273.2 187.7Z"/>
<path fill="#7f858c" d="M326.4 287.1L325.9 287.3L325.1 287.3L321.9 288.6L323.1 283.3L323.1 283.2L320.1 282.1L320.0 288.6L320.9 289.6L320.9 289.6L322.6 292.5L326.1 294.8L327.6 294.2L327.8 293.5L327.9 293.2L329.3 289.3Z"/>
<path fill="#6e7e72" d="M318.5 190.8L317.4 188.0L318.6 186.3L322.3 187.4L322.7 188.2L323.0 191.0L319.2 191.6Z"/>
<path fill="#d59374" d="M330.9 233.3L337.3 235.6L337.4 235.8L337.1 236.2L331.4 241.5L331.3 241.5L330.3 242.0L328.1 236.3Z"/>
<path fill="#a19183" d="M378.1 175.7L374.8 171.2L374.4 168.1L370.6 169.4L369.5 170.7L366.5 172.5L366.1 172.6L361.6 171.2L359.3 174.0L360.0 176.2L362.6 178.2L360.0 183.4L360.0 183.6L361.8 184.3L363.9 183.4L366.0 181.1L365.9 179.5L366.2 179.4L372.5 181.0L373.7 179.2L374.6 179.3Z"/>
<path fill="#a19183" d="M368.7 185.3L368.1 186.7L370.3 189.9L371.3 190.5L374.4 187.9L372.8 184.1L372.3 183.7Z"/>
<path fill="#434c47" d="M349.0 238.6L347.9 238.4L342.1 238.4L342.1 238.4L342.5 239.5L342.9 240.5L349.4 240.3L349.4 239.5Z"/>
<path fill="#434c47" d="M357.6 247.5L353.6 246.0L350.1 245.9L349.4 246.7L349.8 247.8L349.8 247.9L355.0 250.5L357.2 250.4L357.7 249.8Z"/>
<path fill="#555b69" d="M348.0 209.9L343.8 212.0L341.4 210.6L341.4 210.6L340.0 209.5L336.8 211.4L333.8 208.2L332.1 210.1L333.7 212.8L336.5 212.0L336.9 213.2L340.6 215.3L339.2 218.5L339.4 218.7L342.7 220.0L344.2 218.6L346.2 219.6L348.0 217.3L347.6 216.5L348.3 214.3L348.3 213.5L349.2 212.1Z"/>
<path fill="#414041" d="M344.4 313.8L346.5 308.3L345.3 306.9L345.0 305.4L344.9 305.1L344.1 304.6L341.5 304.1L340.7 303.7L340.5 303.5L336.8 303.6L333.0 306.5L332.0 301.6L331.7 301.5L326.4 301.1L326.4 301.1L326.7 303.1L330.2 306.1L333.0 306.7L333.4 308.1L335.4 309.1L336.6 310.1L335.6 316.3L335.9 316.3L340.1 315.6L341.1 321.7L342.7 320.6L343.3 319.9L343.5 317.0L342.5 314.1Z"/>
<path fill="#5f6958" d="M482.2 233.7L482.0 234.0L482.2 238.0L482.7 238.3L485.1 237.9L485.3 234.1L484.1 232.7Z"/>
<path fill="#3d4244" d="M297.8 270.6L297.1 269.6L287.4 270.2L287.4 270.3L290.4 274.2L295.7 273.5Z"/>
<path fill="#3d4244" d="M297.6 280.7L298.9 278.2L297.1 277.2L294.3 282.1L294.7 282.4Z"/>
<path fill="#9c7865" d="M463.7 201.1L464.2 198.3L459.1 196.8L457.7 201.2L458.0 202.7L456.9 205.4L462.4 206.5L464.0 205.7L464.5 203.9L463.7 201.1Z"/>
<path fill="#ab8468" d="M417.3 292.1L421.2 291.3L420.1 286.9L417.8 284.9L415.4 288.7Z"/>
<path fill="#ab8468" d="M429.0 299.0L431.4 296.1L430.0 294.9L424.2 296.6L424.1 298.1L424.3 298.8L424.7 299.0L427.6 299.0Z"/>
<path fill="#dd9472" d="M439.7 212.0L438.2 212.2L437.0 211.7L431.9 212.2L431.9 212.5L432.9 214.8L433.0 215.7L436.2 218.5L436.5 217.8L439.5 216.8L439.7 216.5L439.9 216.5L443.2 219.6L445.4 215.5L445.1 214.2L440.8 212.9Z"/>
<path fill="#4e5f63" d="M374.8 171.2L378.1 175.7L381.2 177.0L381.6 169.7L377.6 166.8L375.3 166.8L374.2 164.2L373.7 163.3L365.7 160.4L365.0 160.5L364.7 165.5L364.9 166.7L370.6 169.4L374.4 168.1Z"/>
<path fill="#353840" d="M269.5 192.5L265.2 191.4L264.9 189.5L263.1 189.0L261.9 189.7L261.9 189.7L259.3 188.0L257.4 189.2L258.7 190.6L261.2 191.6L261.7 194.4L261.2 195.4L265.5 196.5L264.6 199.4L268.2 198.8L268.4 197.3L268.3 196.6L268.9 194.6L269.7 193.6L269.8 193.3Z"/>
<path fill="#4d525b" d="M294.3 282.1L294.1 282.1L293.4 281.5L292.6 279.3L295.8 274.6L297.1 277.2Z"/>
<path fill="#4c5855" d="M333.4 176.5L332.8 177.9L332.2 178.8L332.0 178.9L331.6 180.3L330.0 181.7L328.1 179.1L326.2 179.2L325.7 179.4L325.3 182.1L324.9 182.8L324.9 183.6L324.9 183.6L328.0 186.1L330.1 185.6L332.3 186.5L333.2 186.2L334.9 183.6L336.1 182.9L336.3 182.5L339.7 179.1L339.5 178.8L337.8 176.7L336.1 175.8Z"/>
<path fill="#7d828b" d="M303.2 126.5L299.1 131.8L300.3 132.3L302.8 134.9L306.4 129.3L306.2 128.8L304.4 128.1Z"/>
<path fill="#dc9a80" d="M369.0 265.5L370.7 267.5L370.9 267.5L374.1 264.1L374.1 264.0L373.7 262.6L372.8 260.9L369.7 262.8L368.9 265.4Z"/>
<path fill="#dc9a80" d="M363.8 263.1L366.7 265.3L368.7 265.3L365.0 260.9Z"/>
<path fill="#d18f77" d="M362.6 272.6L365.2 271.1L363.2 268.0L362.1 266.9L361.9 266.9L360.9 269.6Z"/>
<path fill="#9b8d7d" d="M267.5 255.8L270.0 256.4L270.3 260.5L269.6 261.6L268.4 260.5L267.4 256.0Z"/>
<path fill="#df9c85" d="M384.1 315.0L384.4 314.7L384.8 313.4L381.4 313.2L377.1 310.3L376.3 310.7L376.2 310.8L381.3 315.5L381.6 315.3Z"/>
<path fill="#eca973" d="M356.7 255.7L359.0 257.5L360.0 257.0L362.4 255.3L362.0 253.5L357.4 253.1Z"/>
<path fill="#eca973" d="M350.9 252.6L353.0 253.9L355.0 250.5L349.8 247.9Z"/>
<path fill="#383e3f" d="M251.6 261.7L252.4 260.5L249.5 258.4L248.8 260.7Z"/>
<path fill="#383e3f" d="M257.4 267.3L257.9 267.2L256.5 263.4L255.5 262.9L253.6 264.3L250.7 263.4L248.3 263.8L247.7 264.9L248.1 267.4L249.7 270.0L251.2 269.1L252.8 267.7L255.2 267.8Z"/>
<path fill="#a77e6b" d="M318.7 193.2L314.0 192.4L313.1 193.4L309.3 194.2L309.2 194.4L309.7 199.0L315.7 198.0L316.1 202.5L321.7 200.0L322.2 199.2L321.7 198.3L318.6 196.4Z"/>
<path fill="#f4c09b" d="M363.8 319.1L363.4 320.9L363.4 321.0L365.3 323.3L365.1 327.2L367.7 327.7L368.6 326.4L368.8 323.0L368.5 322.3L368.5 321.8L367.6 318.6L367.3 318.3L367.3 318.3Z"/>
<path fill="#42434a" d="M306.1 234.5L310.6 236.8L308.5 241.9L305.3 241.5L304.8 241.1L303.9 234.8Z"/>
<path fill="#596f5f" d="M375.1 309.5L372.2 303.3L369.8 303.6L369.8 306.6L368.0 309.6L368.0 309.8L370.9 308.6Z"/>
<path fill="#596f5f" d="M367.9 303.2L367.6 302.9L363.4 303.4L362.8 307.3L364.7 307.5L367.1 305.1Z"/>
<path fill="#d2977a" d="M389.8 295.3L398.7 292.8L400.2 293.4L399.6 297.6L397.7 298.9L392.1 297.9L389.4 296.3L389.7 295.5Z"/>
<path fill="#edb597" d="M378.0 269.4L373.2 269.0L370.9 267.5L370.7 267.5L367.5 271.9L368.3 274.2L371.9 275.8L372.5 276.7L377.8 275.9L378.7 271.6L379.4 270.2Z"/>
<path fill="#edb597" d="M366.9 271.6L366.0 267.5L363.2 268.0L365.2 271.1Z"/>
<path fill="#edb597" d="M371.9 278.3L375.3 282.0L375.7 279.7L372.5 276.8Z"/>
<path fill="#f5af81" d="M304.3 276.0L303.3 271.3L300.9 270.3L299.7 270.6L297.8 270.6L295.7 273.5L295.8 274.6L297.1 277.2L298.9 278.2L299.7 278.4L301.0 276.9L301.1 276.7Z"/>
<path fill="#697a69" d="M355.0 294.9L353.5 294.6L349.9 294.5L349.9 294.6L350.2 295.6L351.6 297.8L348.6 299.6L349.0 301.7L344.9 305.1L345.0 305.4L345.3 306.9L346.5 308.3L352.0 312.1L352.6 307.6L353.4 305.9L353.3 302.7L354.1 301.9L352.1 297.8L354.7 295.5Z"/>
<path fill="#656767" d="M348.9 292.0L346.9 291.7L345.9 291.7L345.5 293.9L346.6 297.3L349.9 294.6L349.9 294.5Z"/>
<path fill="#656767" d="M328.3 285.1L326.4 287.1L329.3 289.3L331.4 287.1Z"/>
<path fill="#958779" d="M470.3 238.6L473.6 242.9L473.8 244.5L473.5 244.8L468.5 243.4L467.4 240.6Z"/>
<path fill="#e6a482" d="M437.6 237.3L440.8 232.7L442.5 239.9L440.2 241.3L438.2 241.2L438.2 241.2Z"/>
<path fill="#5b6853" d="M358.0 327.4L357.4 330.4L358.3 331.3L361.9 331.8L362.8 327.7L361.5 326.6Z"/>
<path fill="#5b6853" d="M351.5 332.8L353.6 332.9L350.8 337.5L351.1 337.7L355.8 336.6L355.2 333.2L354.7 332.3L354.6 331.4Z"/>
<path fill="#333539" d="M432.9 214.8L431.9 212.5L428.3 216.3L428.5 216.8L432.0 217.6L432.2 222.4L432.5 222.7L436.2 218.6L436.2 218.5L433.0 215.7Z"/>
<path fill="#77828d" d="M231.2 227.8L229.0 225.4L224.2 231.7L222.6 233.9L221.4 235.4L214.8 244.3L218.8 244.1L221.4 242.2L223.0 239.7L227.0 240.4L228.1 238.5L226.8 235.6L228.4 234.3L231.3 234.1L231.6 233.8L231.1 230.3L231.6 228.4Z"/>
<path fill="#dfa587" d="M357.4 253.1L357.2 250.4L357.7 249.8L362.5 250.4L362.0 253.5Z"/>
<path fill="#60666d" d="M274.5 264.1L271.3 264.3L270.7 264.2L268.8 267.4L269.7 269.1L271.1 269.8L272.0 268.4L274.8 269.0L275.2 272.0L279.0 271.7L279.3 271.5L279.4 271.3L277.8 267.7L275.5 266.8Z"/>
<path fill="#a7816b" d="M351.1 171.4L348.3 168.9L345.1 167.3L345.7 169.6L346.9 172.5L349.2 172.9Z"/>
<path fill="#a7816b" d="M347.9 177.4L351.2 182.7L351.3 182.7L352.3 177.5L349.8 175.7L349.6 175.9Z"/>
<path fill="#95877f" d="M479.1 206.8L479.6 205.5L478.7 204.7L475.1 205.1L473.5 205.7L472.8 207.8L472.5 208.1L470.7 213.6L470.8 214.1L474.1 213.6L475.7 215.5L478.3 214.2L477.2 217.4L479.5 217.8L481.4 213.9L479.8 213.3L478.9 212.3Z"/>
<path fill="#414146" d="M293.8 240.0L292.7 239.9L291.6 243.3L290.3 245.1L289.2 243.5L285.3 242.4L285.0 242.9L290.3 247.0L290.3 247.2L291.7 247.2L294.5 245.8L294.4 243.9L295.1 242.3L294.6 240.9Z"/>
<path fill="#42474a" d="M391.2 203.4L391.7 207.0L391.4 207.4L392.2 211.0L397.6 211.6L397.7 211.7L397.1 216.4L397.9 217.3L402.4 217.2L403.7 212.5L404.2 212.1L405.4 210.2L405.4 210.2L398.9 207.9L399.0 206.7L396.9 205.7L394.1 206.3L394.9 202.0L393.5 201.0Z"/>
<path fill="#d19576" d="M285.0 214.5L281.9 211.1L281.6 211.2L280.0 211.7L279.2 212.2L278.6 211.9L275.1 212.2L274.1 212.3L273.1 213.0L272.9 214.5L275.4 217.0L275.7 217.1L276.8 219.2L280.2 220.2L280.1 220.3L279.6 221.3L279.6 227.8L279.7 227.9L282.7 225.7L280.9 219.9L281.2 219.6L281.3 218.6L284.0 216.2L284.7 216.0Z"/>
<path fill="#d79c80" d="M448.6 199.4L447.9 203.9L455.7 207.3L456.7 205.7L449.6 199.0Z"/>
<path fill="#e0a383" d="M413.9 194.8L417.7 196.9L420.3 197.1L420.8 196.8L421.1 195.6L418.4 191.2L415.3 192.1Z"/>
<path fill="#f6b282" d="M442.9 231.0L441.1 231.8L439.8 231.5L438.7 231.7L436.9 231.1L435.5 230.8L436.4 229.0L435.0 228.0L434.9 227.2L432.7 229.0L429.2 228.2L430.9 233.0L433.5 232.9L435.4 234.7L435.7 234.8L437.6 237.3L440.8 232.7L442.5 239.9L444.8 239.1L446.0 237.1L447.5 233.1L447.5 233.0Z"/>
<path fill="#e6b08a" d="M379.8 277.2L381.0 278.5L381.0 280.8L380.4 281.7L379.1 281.6L377.2 279.4L378.0 276.2L377.8 275.9L372.5 276.7L372.5 276.8L375.7 279.7L375.3 282.0L375.4 283.1L374.8 283.9L376.4 288.0L379.1 287.9L381.6 286.2L381.5 284.6L387.7 280.2L388.8 279.9L388.6 277.6L385.5 276.2L383.4 273.3Z"/>
<path fill="#fbbc9e" d="M412.6 194.3L412.2 191.6L408.4 192.5L408.6 193.3L410.3 194.4Z"/>
<path fill="#db9e83" d="M443.6 247.1L440.2 241.3L438.2 241.2L438.2 241.2L437.8 241.3L434.5 245.1L438.1 248.7L436.2 251.8L438.2 253.6L439.9 254.1L440.5 248.5Z"/>
<path fill="#a68167" d="M413.8 260.8L415.1 261.8L415.2 263.9L414.5 265.4L411.8 266.1L408.9 264.1L409.0 263.3L411.4 261.3Z"/>
<path fill="#414742" d="M324.3 262.3L324.3 262.3L324.3 262.2L320.5 261.8L319.4 264.5L315.7 265.5L316.6 270.8L321.8 270.2L322.9 269.4L323.5 268.7L323.6 268.7L332.4 275.5L332.5 274.1L332.7 271.5L330.2 267.9L327.4 267.2L323.6 268.6Z"/>
<path fill="#6e816d" d="M359.0 322.6L357.5 321.5L355.0 322.1L351.8 314.4L351.1 314.8L350.0 316.4L348.6 323.1L348.6 323.4L348.8 323.9L350.5 326.5L350.8 326.5L354.6 330.8L357.4 330.4L358.0 327.4L356.0 326.3L359.6 323.6Z"/>
<path fill="#eeb196" d="M385.2 287.0L384.2 287.0L381.6 286.2L379.1 287.9L380.6 291.4L383.5 291.3L383.2 294.5L383.9 295.5L388.9 296.8L389.4 296.3L389.7 295.5L387.9 293.4Z"/>
<path fill="#dfa081" d="M329.0 175.0L326.1 173.3L324.1 172.8L326.8 177.3L329.0 175.0Z"/>
<path fill="#946a57" d="M353.7 238.9L353.9 241.5L353.9 241.5L350.8 242.8L350.1 245.9L353.6 246.0L357.6 247.5L357.7 249.8L362.5 250.4L363.8 249.4L364.1 245.7L366.6 243.0L366.6 242.3L365.3 240.7L358.8 239.7L358.5 239.4L358.1 237.6L358.1 237.2L355.8 236.2L353.4 235.7L353.1 236.5L353.2 237.8Z"/>
<path fill="#946a57" d="M345.7 234.6L348.8 235.8L349.8 235.1L348.0 228.9L347.1 228.8L345.3 230.9L345.3 231.0Z"/>
<path fill="#da9e83" d="M400.0 256.7L400.2 256.4L400.9 255.6L405.9 254.3L407.0 254.9L407.9 258.2L407.8 258.4L401.2 260.7L399.6 259.2Z"/>
<path fill="#e0a289" d="M372.8 202.6L371.9 207.1L374.2 209.9L379.0 207.9L380.6 206.3L380.6 205.8L376.7 201.5Z"/>
<path fill="#a17760" d="M281.9 211.1L282.5 210.6L286.8 213.0L285.0 214.5Z"/>
<path fill="#da9a81" d="M441.7 187.4L438.9 188.5L439.0 189.5L440.9 190.7L438.8 191.5L440.1 193.1L442.0 191.9L444.7 194.5L443.8 197.4L444.2 197.8L447.2 198.8L448.6 199.4L449.6 199.0L449.9 198.6L449.4 194.5L447.9 194.2L445.9 193.2L446.3 191.9L444.3 189.1L443.3 188.8L442.6 187.9Z"/>
<path fill="#96745f" d="M457.5 258.8L456.1 256.8L452.0 256.3L451.0 252.7L450.0 252.9L447.3 254.8L447.8 258.6L445.7 259.5L445.3 260.0L447.6 263.6L448.7 263.1L450.4 260.3L453.4 263.7L456.8 261.0L456.9 259.9Z"/>
<path fill="#d49e7f" d="M338.4 286.1L337.3 286.3L335.9 285.7L337.0 279.5L338.5 286.1Z"/>
<path fill="#d5a27d" d="M414.0 256.0L413.3 252.4L413.1 252.3L412.8 252.2L411.5 252.3L407.0 254.9L407.9 258.2L407.8 258.4L409.0 263.3L411.4 261.3L411.9 259.3L408.8 258.1Z"/>
<path fill="#5d6169" d="M281.6 200.4L280.6 197.7L278.7 197.1L277.1 201.2L275.3 202.7L275.4 202.9L276.0 206.3L279.0 205.4L280.0 211.7L281.6 211.2L281.9 211.1L282.5 210.6L283.3 209.2L281.8 205.1L280.9 204.4Z"/>
<path fill="#5d6169" d="M274.1 198.1L269.7 193.6L268.9 194.6L268.3 196.6L268.4 197.3L273.9 198.3Z"/>
<path fill="#575d65" d="M339.3 245.0L338.5 244.9L336.9 249.2L340.3 252.2L341.1 251.3Z"/>
<path fill="#575d65" d="M336.9 254.7L331.7 248.9L331.8 252.5L330.0 255.4L333.2 256.6L334.9 255.4Z"/>
<path fill="#575d65" d="M335.2 261.0L336.1 258.6L333.1 257.7L332.8 259.6L333.8 260.8Z"/>
<path fill="#8f7e78" d="M363.7 293.1L360.9 287.1L360.4 286.0L359.7 285.8L356.1 291.9L356.1 292.0L355.2 294.8L358.9 297.6L361.0 296.4L363.5 294.3L363.5 293.6Z"/>
<path fill="#9e7964" d="M323.0 243.0L323.3 243.3L329.9 242.6L330.3 242.0L328.1 236.3L327.2 235.9L325.4 235.5L324.9 235.8L320.8 235.9L321.1 238.7L322.8 241.4Z"/>
<path fill="#505f4e" d="M337.5 100.9L335.3 101.9L334.1 106.3L334.5 106.7L335.2 110.3L335.4 110.8L337.5 110.5L338.0 111.2L341.1 112.3L338.5 108.0L339.9 107.1L337.7 100.9Z"/>
<path fill="#505f4e" d="M341.3 112.5L341.4 118.0L341.4 118.1L347.7 112.3L347.6 110.6L345.9 107.5L344.6 108.1Z"/>
<path fill="#858996" d="M392.5 170.1L391.5 169.0L384.9 171.1L386.0 173.4L390.6 172.9L392.7 171.7Z"/>
<path fill="#858996" d="M394.9 179.8L395.5 179.0L389.2 175.5L388.4 176.4L385.6 175.4L382.8 178.3L383.9 180.9L388.9 177.6L392.0 179.6Z"/>
<path fill="#dca881" d="M384.8 313.4L385.1 312.9L384.4 311.3L380.9 309.5L378.4 309.2L377.1 310.3L381.4 313.2Z"/>
<path fill="#dca881" d="M381.6 315.3L381.3 315.5L376.2 310.8L375.7 311.7L375.4 313.4L375.2 313.7L373.7 315.1L372.0 318.5L373.5 320.8L376.1 322.1L376.5 321.9L378.5 321.1L382.0 324.4L386.1 321.2L383.2 319.7L383.5 316.5L384.1 315.0Z"/>
<path fill="#eeb596" d="M374.2 209.9L371.9 207.1L366.4 208.5L367.7 211.6L374.0 211.2Z"/>
<path fill="#d7a283" d="M388.7 154.6L388.5 154.5L385.2 161.2L391.5 159.8L391.6 159.6L391.7 157.5Z"/>
<path fill="#626a69" d="M369.5 351.9L370.4 352.9L371.4 352.2L375.4 344.7L373.2 342.8L367.8 345.4Z"/>
<path fill="#626a69" d="M380.0 356.6L380.2 355.6L377.3 352.9L375.0 358.1Z"/>
<path fill="#626a69" d="M367.0 345.3L366.0 344.9L364.8 345.2L363.8 350.9L365.3 350.8Z"/>
<path fill="#a48471" d="M280.1 220.3L280.2 220.2L276.8 219.2L273.4 221.7L274.1 223.2L274.1 224.6L273.9 228.1L278.2 227.6L279.6 227.8L279.6 221.3Z"/>
<path fill="#f7af7e" d="M403.4 218.3L402.4 217.2L397.9 217.3L397.7 221.3L398.4 222.3L401.6 222.2Z"/>
<path fill="#7d7a84" d="M361.0 165.4L359.7 166.5L359.7 167.4L357.6 167.8L357.1 167.3L352.5 166.9L352.5 167.2L353.0 170.7L354.8 171.7L355.8 173.0L359.3 174.0L361.6 171.2L366.1 172.6L366.5 172.5L369.5 170.7L370.6 169.4L364.9 166.7L364.7 165.5Z"/>
<path fill="#555964" d="M454.0 195.0L453.9 193.0L451.0 191.8L450.1 190.4L446.3 191.9L445.9 193.2L447.9 194.2L449.4 194.5L449.9 198.6L452.7 197.4L453.0 196.7Z"/>
<path fill="#555964" d="M439.0 189.5L438.8 191.3L438.8 191.5L438.8 191.5L440.9 190.7Z"/>
<path fill="#403f46" d="M291.1 192.5L290.0 190.5L290.0 190.3L289.3 189.3L285.3 187.8L283.3 189.9L283.7 190.9L287.1 193.5L287.1 195.7L291.5 194.6L291.6 194.7L292.1 195.6L294.2 196.9L296.0 196.4L297.3 195.7L297.8 194.8L297.6 194.4L296.0 192.4L295.9 192.1Z"/>
<path fill="#596759" d="M489.4 211.9L494.2 207.7L492.6 205.8L488.5 205.0L488.1 205.6L482.1 206.9L483.7 212.5L487.4 211.9L488.0 211.6Z"/>
<path fill="#535761" d="M394.7 306.4L389.1 307.2L388.8 307.6L390.3 311.5L393.1 311.3L395.9 308.2Z"/>
<path fill="#535761" d="M385.0 302.6L386.0 300.0L382.7 299.8L378.8 302.5L379.8 304.3L384.1 303.9Z"/>
<path fill="#93877a" d="M306.8 226.3L302.7 229.7L302.9 230.8L303.4 233.7L303.7 234.7L303.9 234.8L306.1 234.5L308.6 231.3L307.4 229.1Z"/>
<path fill="#85898f" d="M333.3 199.2L334.9 200.5L336.0 200.8L336.6 200.7L338.2 192.3L332.8 193.7L331.3 191.5L327.5 190.4L325.6 191.7L327.4 195.4L327.6 195.4L327.7 195.4L329.8 198.3L332.7 198.1Z"/>
<path fill="#85898f" d="M327.0 201.0L326.6 201.2L326.8 201.6L328.0 203.4L329.7 203.8L331.6 200.4Z"/>
<path fill="#885f4f" d="M255.4 252.3L254.1 247.0L254.1 246.0L258.4 244.7L264.4 246.4L265.0 247.8L263.9 249.6L256.9 253.3Z"/>
<path fill="#444842" d="M397.1 168.5L393.6 169.5L392.5 170.1L392.7 171.7L394.7 174.3L396.4 177.8L399.1 177.6L401.2 171.3L400.3 170.1L399.4 167.4Z"/>
<path fill="#967752" d="M436.5 266.6L433.3 268.7L435.7 274.0L431.2 275.6L430.6 278.3L430.9 282.8L433.1 282.8L436.2 281.8L439.3 276.6L436.6 274.0L438.1 271.0Z"/>
<path fill="#a57768" d="M270.9 250.4L271.0 249.4L270.7 248.6L265.0 247.8L263.9 249.6L256.9 253.3L257.5 254.6L259.5 256.1L260.2 256.9L266.5 256.6L267.4 256.0L267.5 255.8L267.4 254.9Z"/>
<path fill="#f8af7c" d="M316.5 287.2L315.5 282.7L314.6 282.3L313.8 282.7L310.0 282.1L308.4 277.9L307.3 278.1L305.2 283.6L308.9 283.9L309.7 287.4L310.2 287.9L311.8 287.8L313.3 288.6Z"/>
<path fill="#5a5f65" d="M308.4 175.2L306.9 178.7L306.8 178.7L303.8 174.8L305.1 174.8Z"/>
<path fill="#3a373d" d="M303.4 246.4L300.4 246.6L298.5 249.1L298.5 249.4L299.7 250.2L304.4 250.0L304.8 249.4L304.9 247.0Z"/>
<path fill="#5b5e67" d="M351.8 314.4L352.5 313.4L352.0 312.1L346.5 308.3L344.4 313.8L351.1 314.8Z"/>
<path fill="#5b5e67" d="M347.3 317.7L343.5 317.0L343.3 319.9L342.7 320.6L348.6 323.4L348.6 323.1L350.0 316.4Z"/>
<path fill="#5b5e67" d="M341.6 323.8L342.6 325.9L346.0 329.0L348.0 329.4L350.5 326.5L348.8 323.9Z"/>
<path fill="#e4a984" d="M454.3 220.1L455.4 222.4L455.0 223.3L455.0 223.4L458.0 225.8L458.5 228.3L465.9 225.2L466.1 225.0L463.0 221.7L459.2 223.6L457.9 219.9L457.0 220.5L454.5 219.8Z"/>
<path fill="#938576" d="M372.7 202.5L365.4 205.1L367.0 201.1L371.1 201.0Z"/>
<path fill="#a78163" d="M394.1 223.1L394.8 224.6L395.0 224.7L395.3 228.5L395.6 228.4L398.5 226.5L398.0 224.7L398.4 222.3L397.7 221.3L395.7 221.6Z"/>
<path fill="#64756e" d="M321.0 214.9L314.7 212.7L316.0 211.2L319.7 211.3L321.2 214.8Z"/>
<path fill="#777a86" d="M286.0 149.4L287.5 150.5L288.3 150.2L288.1 146.6Z"/>
<path fill="#59585c" d="M367.7 281.4L370.3 281.2L371.9 278.3L372.5 276.8L372.5 276.7L371.9 275.8L368.3 274.2L366.9 275.7Z"/>
<path fill="#59585c" d="M362.4 276.9L360.8 278.3L363.8 282.8L366.4 281.6L363.3 277.0Z"/>
<path fill="#708270" d="M296.9 287.7L297.8 289.6L296.1 291.9L293.1 292.3L293.8 296.0L294.6 297.6L296.0 297.8L296.1 297.8L298.4 298.2L299.9 297.6L300.0 292.1L304.9 293.7L306.3 292.4L304.2 289.9L301.2 290.3L301.7 286.6L300.0 284.5L301.7 282.8L301.7 282.0L301.3 281.6L297.6 280.7L294.7 282.4L297.5 285.6Z"/>
<path fill="#ac7a6a" d="M412.3 167.3L409.6 163.3L414.7 161.7L416.7 161.9L417.1 165.6L416.6 167.2Z"/>
<path fill="#dfa484" d="M469.2 216.9L470.8 214.1L470.7 213.6L469.0 211.8L467.6 208.4L467.6 208.4L464.6 210.4L462.4 206.5L456.9 205.4L456.7 205.7L455.7 207.3L455.5 208.3L457.8 213.0L458.6 213.6L459.4 216.9L462.6 219.3L467.9 216.6Z"/>
<path fill="#52634b" d="M324.3 149.1L324.0 145.5L324.0 145.5L322.4 146.5Z"/>
<path fill="#52634b" d="M321.5 145.8L321.0 144.7L319.3 144.4L319.0 147.7L316.3 148.3L317.2 151.4L321.0 150.1L321.8 150.4Z"/>
<path fill="#81888c" d="M316.0 118.0L312.7 115.7L312.3 118.9L310.9 120.7L311.5 121.2L316.2 120.0L316.0 119.4Z"/>
<path fill="#51624f" d="M239.9 258.5L239.3 255.4L239.3 255.3L237.8 253.7L233.4 252.5L230.1 256.2L228.3 257.1L228.1 262.6L229.5 263.6L229.8 263.9L232.2 265.7L234.9 267.7L235.5 265.3L235.5 263.0L235.9 262.2L239.3 260.4Z"/>
<path fill="#7b818a" d="M263.1 187.5L264.9 184.8L265.0 184.7L262.2 181.1L259.6 184.6L256.1 189.1L257.4 189.2L259.3 188.0L261.9 189.7L261.9 189.7L260.8 185.9Z"/>
<path fill="#798389" d="M414.1 273.0L413.8 271.2L411.5 269.1L410.2 270.2L404.4 266.2L404.5 269.4L408.3 272.5L408.4 274.4Z"/>
<path fill="#c48b72" d="M443.1 201.9L442.8 205.8L444.6 206.3L447.9 203.9L448.6 199.4L447.2 198.8L444.2 197.8L443.8 197.4L439.5 196.9L437.6 197.7L438.0 199.3L441.1 201.1Z"/>
<path fill="#f8bea0" d="M327.8 164.4L323.7 162.3L322.8 161.6L322.0 162.9L321.6 164.0L322.7 166.5L323.3 166.6L324.0 171.9L323.6 172.7L324.1 172.8L326.1 173.3L328.0 172.0L327.3 168.5L328.7 166.9L328.0 165.7Z"/>
<path fill="#9d8a7f" d="M399.4 167.4L397.1 168.5L393.6 169.5L396.3 164.8L399.2 165.2L400.0 165.8Z"/>
<path fill="#d6e5ef" d="M221.8 253.5L222.6 251.7L214.0 245.3L213.6 245.8L210.8 249.6L219.1 255.8L219.8 254.8Z"/>
<path fill="#9f8169" d="M409.9 238.9L413.6 236.6L411.3 233.3L405.6 234.8Z"/>
<path fill="#9f8169" d="M408.9 241.4L408.3 244.1L409.9 245.3L410.0 245.3L410.9 241.9L409.7 240.6Z"/>
<path fill="#5a5d62" d="M367.6 302.9L366.5 297.8L370.9 296.5L372.1 297.2L374.4 300.8L372.2 303.3L369.8 303.6L367.9 303.2Z"/>
<path fill="#d09174" d="M414.5 265.4L417.4 267.5L421.3 263.5L420.6 262.5L415.2 263.9Z"/>
<path fill="#50525f" d="M429.2 228.2L429.0 228.0L426.2 229.6L424.1 233.8L424.4 234.9L428.1 236.4L429.7 235.0L430.9 233.0Z"/>
<path fill="#6b7c74" d="M238.2 230.9L238.2 231.7L242.7 236.8L242.6 237.5L243.1 238.0L246.7 239.7L248.7 240.3L249.7 234.5L245.5 233.4L245.4 230.2L240.8 228.7Z"/>
<path fill="#e9ad95" d="M417.3 232.3L416.1 236.9L417.6 238.5L422.3 236.8L424.4 234.9L424.1 233.8L422.0 232.3Z"/>
<path fill="#7b848b" d="M277.8 170.0L279.1 169.1L277.5 161.7L277.0 161.3L272.5 167.3L266.6 175.2L271.9 178.8L272.4 178.8L274.5 169.9Z"/>
<path fill="#868c9b" d="M414.1 273.0L408.4 274.4L408.2 275.4L407.7 276.5L407.3 277.6L407.3 277.7L415.0 277.3L416.7 275.9L416.3 275.6Z"/>
<path fill="#d09278" d="M366.9 275.7L367.7 281.4L367.5 281.5L366.4 281.6L363.3 277.0Z"/>
<path fill="#d4997d" d="M340.0 202.8L338.1 200.8L339.5 199.7L343.3 199.8L345.9 203.6L342.5 204.4Z"/>
<path fill="#6d7a6c" d="M485.4 226.9L483.4 225.5L480.4 225.0L479.4 223.6L479.0 222.4L475.8 221.8L471.5 226.1L472.2 227.5L473.0 228.1L473.2 228.3L474.9 232.0L474.9 232.7L477.6 234.0L482.0 234.0L482.2 233.7L479.8 229.4L479.8 229.3L486.0 229.1Z"/>
<path fill="#d89d81" d="M382.0 324.4L378.5 321.1L376.5 321.9L376.1 322.1L373.5 320.8L372.0 318.5L367.6 318.6L368.5 321.8L372.7 321.2L371.1 323.2L368.8 323.0L368.6 326.4L367.7 327.7L369.9 331.5L369.9 331.7L371.6 333.3L373.4 334.8L375.2 331.6L381.3 329.1L381.1 328.6L381.7 326.7ZM374.2 325.4L374.8 328.0L369.9 331.5L373.8 325.5Z"/>
<path fill="#fffff8" d="M391.4 167.2L386.0 163.6L385.7 162.8L384.7 161.5L384.3 161.4L384.3 161.4L377.6 166.8L381.6 169.7L383.5 170.0L384.9 171.1L391.5 169.0L391.4 168.7Z"/>
<path fill="#a17360" d="M343.0 240.8L346.8 246.5L344.7 247.6L340.2 244.6Z"/>
<path fill="#908579" d="M393.5 249.1L394.0 250.6L395.5 251.4L400.6 251.3L401.1 250.0L401.1 248.0L396.8 247.1L397.4 240.6L396.8 240.0L393.3 241.5L391.1 245.0L393.2 249.0Z"/>
<path fill="#9f8e8a" d="M423.3 271.1L419.5 270.5L417.5 275.9L419.1 277.3L418.3 282.2L425.3 283.3L425.5 283.3L422.5 277.3L422.2 277.2Z"/>
<path fill="#f0b498" d="M410.9 241.9L413.2 242.9L417.7 240.6L417.6 238.5L416.1 236.9L413.6 236.6L409.9 238.9L409.6 239.7L409.7 240.6Z"/>
<path fill="#f0b498" d="M417.9 248.4L417.6 246.8L413.0 245.0L412.1 246.0L412.9 247.0Z"/>
<path fill="#d89c7e" d="M369.9 331.5L373.8 325.5L374.2 325.4L374.8 328.0Z"/>
<path fill="#a6785b" d="M430.7 174.0L427.7 171.3L426.0 171.0L425.2 171.2L423.8 170.6L419.4 174.1L421.9 178.8L421.5 181.1L422.5 181.9L428.9 180.8L428.9 180.8L428.2 175.9L431.4 174.8Z"/>
<path fill="#a6785b" d="M416.6 167.2L412.3 167.3L412.2 167.6L412.2 170.5L412.3 171.1L417.1 172.3L417.7 168.5Z"/>
<path fill="#5f7a69" d="M381.6 177.5L381.2 177.0L378.1 175.7L374.6 179.3L373.7 179.2L372.5 181.0L372.3 183.7L372.8 184.1L374.4 187.9L377.9 188.7L379.0 192.1L382.9 193.3L383.6 183.5L384.3 183.1L384.3 182.9L383.9 180.9L382.8 178.3L381.9 177.8L377.3 181.6L375.8 179.8Z"/>
<path fill="#a3775b" d="M365.4 205.1L364.0 206.9L361.4 206.6L361.6 198.3L366.5 200.3L367.0 201.1Z"/>
<path fill="#b18871" d="M298.8 199.3L299.4 199.7L298.7 203.4L297.2 203.5L295.1 202.2L295.1 201.9L295.9 200.9Z"/>
<path fill="#92887b" d="M425.2 269.0L423.9 270.9L423.3 271.1L422.2 277.2L422.5 277.3L425.5 283.3L428.6 284.5L430.4 283.4L430.9 282.8L430.6 278.3L431.2 275.6L430.1 274.4L430.0 274.3L425.7 269.3Z"/>
<path fill="#ffbd8a" d="M301.0 276.9L303.9 279.1L306.1 277.9L304.3 276.0L301.1 276.7Z"/>
<path fill="#525764" d="M347.5 205.7L346.5 204.0L346.1 203.7L345.9 203.6L342.5 204.4L339.9 208.1L340.0 209.5L341.4 210.6L341.4 210.6L343.8 212.0L348.0 209.9L347.3 207.2Z"/>
<path fill="#d29476" d="M345.7 234.6L344.3 236.3L342.1 238.4L347.9 238.4L349.0 238.6L348.8 235.8Z"/>
<path fill="#7f858c" d="M315.6 109.8L318.5 113.0L319.4 116.1L316.9 117.0L314.5 111.4Z"/>
<path fill="#d89d80" d="M408.6 188.0L412.4 187.5L414.2 185.9L414.5 184.4L408.3 180.9L407.6 181.4L400.6 178.0L400.3 178.0L402.2 184.7L401.8 186.2L404.9 187.4L406.4 182.5L407.5 181.6Z"/>
<path fill="#424749" d="M292.1 195.6L291.6 194.7L291.5 194.6L287.1 195.7L286.6 196.8L287.1 197.6L286.7 202.0L287.0 202.6L290.5 201.4L291.1 199.7L289.9 198.3Z"/>
<path fill="#393a42" d="M342.2 279.3L345.4 279.7L346.4 280.4L347.2 282.9L343.2 287.3L343.1 287.3L341.0 286.1L339.6 279.2Z"/>
<path fill="#9a8c82" d="M273.1 213.0L274.1 212.3L273.5 208.8L270.1 208.8L270.7 212.0Z"/>
<path fill="#728370" d="M321.4 249.0L322.7 247.4L322.6 245.2L315.5 246.9L316.5 247.9L317.6 251.7L318.8 250.5L317.7 248.6Z"/>
<path fill="#828392" d="M308.2 258.2L306.8 258.6L303.1 256.4L302.9 255.8L303.2 254.3L304.9 252.6L307.9 254.2L308.7 255.1Z"/>
<path fill="#444546" d="M321.0 214.9L319.2 216.3L320.1 220.8L323.0 218.4L321.9 215.0L321.2 214.8Z"/>
<path fill="#db9a7c" d="M362.7 284.9L360.4 286.0L360.9 287.1L363.7 293.1L365.3 291.9L364.7 286.1Z"/>
<path fill="#d6967d" d="M326.8 177.3L326.2 179.2L325.7 179.4L320.1 174.6L320.2 174.1L320.2 174.0L323.6 172.7L324.1 172.8Z"/>
<path fill="#fac09e" d="M440.1 193.1L439.5 196.9L443.8 197.4L444.7 194.5L442.0 191.9Z"/>
<path fill="#636e61" d="M268.2 198.8L264.6 199.4L262.8 200.1L262.9 202.3L267.1 202.3L268.8 200.8L271.5 202.0L271.2 205.0L274.5 206.8L275.9 206.4L276.0 206.3L275.4 202.9L275.3 202.7L272.5 201.5L273.9 198.3L268.4 197.3Z"/>
<path fill="#e9b08a" d="M377.2 279.4L379.1 281.6L380.4 281.7L381.0 280.8L381.0 278.5L379.8 277.2L378.0 276.2Z"/>
<path fill="#e9b08a" d="M371.9 278.3L370.3 281.2L371.8 283.2L374.8 283.9L375.4 283.1L375.3 282.0Z"/>
<path fill="#858b8f" d="M432.1 246.8L434.4 251.4L433.5 252.3L427.5 254.6L426.6 253.1Z"/>
<path fill="#444648" d="M259.7 219.3L258.5 222.0L256.7 221.8L255.0 219.7L256.4 216.0L258.8 216.9Z"/>
<path fill="#7e848b" d="M469.1 202.0L463.7 201.1L463.7 201.1L464.5 203.9L468.2 204.0L467.2 206.7L467.6 208.4L467.6 208.4L469.0 211.8L470.7 213.6L472.5 208.1L472.8 207.8L473.5 205.7L470.6 202.9L469.4 202.5Z"/>
<path fill="#d6a778" d="M412.2 167.6L405.8 170.9L406.0 171.2L406.2 171.3L412.2 170.5Z"/>
<path fill="#d6a778" d="M400.9 165.4L400.0 165.8L399.4 167.4L400.3 170.1L401.2 171.3L405.6 170.7L405.4 166.9Z"/>
<path fill="#545760" d="M363.6 217.7L364.3 217.1L365.4 217.2L371.7 218.4L372.5 218.8L372.5 219.4L370.0 223.0L365.4 222.3L363.8 220.6Z"/>
<path fill="#636a72" d="M404.4 266.2L404.4 265.8L402.8 264.9L398.9 267.1L401.1 272.6L402.9 271.2L407.7 276.5L408.2 275.4L408.4 274.4L408.3 272.5L404.5 269.4Z"/>
<path fill="#636568" d="M247.7 212.6L244.3 211.7L242.5 215.4L241.9 216.1L244.6 218.5L245.3 218.8L247.4 218.5L247.7 216.5L247.4 215.2Z"/>
<path fill="#605c65" d="M385.3 306.5L384.1 303.9L379.8 304.3L378.4 309.2L380.9 309.5Z"/>
<path fill="#5c5d64" d="M222.6 251.7L221.8 253.5L219.8 254.8L219.1 255.8L224.4 259.8L227.7 257.0L228.3 257.1L230.1 256.2L233.4 252.5L233.3 252.4L228.7 249.9L226.4 250.1L222.6 251.7Z"/>
<path fill="#5d6063" d="M403.0 157.5L402.7 156.3L400.0 157.9L402.8 158.4Z"/>
<path fill="#607668" d="M349.6 271.4L347.7 270.8L346.2 270.7L345.9 272.3L350.4 276.6L351.1 275.7L351.6 274.3L350.9 273.2Z"/>
<path fill="#ad7f6e" d="M318.1 239.0L317.8 239.5L314.5 240.5L314.2 243.6L313.5 244.9L313.8 245.9L314.7 246.6L315.5 246.9L322.6 245.2L323.3 243.3L323.0 243.0L322.8 241.4L321.1 238.7Z"/>
<path fill="#475744" d="M279.3 245.0L281.6 245.9L282.3 245.7L280.2 238.6L276.8 238.9L276.5 240.0Z"/>
<path fill="#475744" d="M284.4 252.8L289.2 250.2L289.3 248.5L282.9 246.3L283.8 252.4Z"/>
<path fill="#3c4444" d="M352.5 288.9L352.3 285.4L349.1 284.1L347.2 282.9L343.2 287.3L343.9 290.4L345.9 291.7L346.9 291.7L348.9 292.0L350.5 290.9Z"/>
<path fill="#595e61" d="M333.2 168.3L334.8 165.8L333.0 160.6L331.5 160.3L328.4 163.0L325.0 156.9L322.0 157.0L321.9 157.1L321.8 157.2L322.8 161.6L323.7 162.3L327.8 164.4L328.0 165.7L328.7 166.9L332.4 168.6Z"/>
<path fill="#546261" d="M418.6 148.9L418.6 149.2L424.4 152.0L428.3 150.6L429.9 148.9L423.3 144.0L418.6 148.4Z"/>
<path fill="#818791" d="M242.5 215.4L244.3 211.7L242.2 207.8L236.1 215.9L237.2 216.6L241.9 216.1Z"/>
<path fill="#64736c" d="M306.8 246.4L310.0 243.6L308.5 241.9L305.3 241.5L304.8 241.1L304.1 241.5L300.3 242.5L303.0 245.0L303.4 246.4L304.9 247.0L305.3 246.6Z"/>
<path fill="#d49a7a" d="M467.6 232.3L468.1 232.9L472.6 235.2L473.1 235.1L474.9 232.7L474.9 232.0L473.2 228.3L473.0 228.1L472.2 227.5L471.5 226.1L468.7 224.4L466.1 225.0L465.9 225.2L465.5 230.2L466.8 232.2Z"/>
<path fill="#f0af92" d="M422.0 203.1L423.0 199.0L425.1 199.7L426.3 201.1L425.4 204.7L423.8 205.2Z"/>
<path fill="#4e604c" d="M326.1 277.8L327.1 277.9L322.9 269.4L321.8 270.2L316.6 270.8L315.6 271.9L319.2 276.8L321.9 275.6Z"/>
<path fill="#9e7463" d="M382.2 270.3L388.3 269.9L389.3 268.4L387.5 264.9L387.4 264.8L386.2 264.8L383.8 262.8L383.5 262.7L381.3 263.8L380.9 269.9L382.2 270.3Z"/>
<path fill="#525b5c" d="M340.0 202.8L338.1 200.8L336.6 200.7L336.0 200.8L335.7 205.9L333.9 207.1L333.8 208.2L336.8 211.4L340.0 209.5L339.9 208.1L337.3 206.4Z"/>
<path fill="#f9c19e" d="M330.0 181.7L331.6 180.3L332.0 178.9L329.9 178.0L328.1 179.1Z"/>
<path fill="#808495" d="M270.1 227.4L271.0 228.1L265.6 232.1L263.6 229.1Z"/>
<path fill="#5d7067" d="M419.4 174.1L423.8 170.6L422.3 168.2L417.7 168.5L417.1 172.3L412.3 171.1L411.3 174.1L416.4 174.6L417.6 173.5Z"/>
<path fill="#687c69" d="M367.7 285.7L367.1 286.3L367.8 290.8L370.8 290.9L372.1 290.1L370.4 286.1L371.8 283.2L370.3 281.2L367.7 281.4L367.5 281.5Z"/>
<path fill="#545961" d="M335.9 174.9L332.1 170.5L331.1 173.8L333.4 176.5L336.1 175.8L337.8 176.7L339.5 171.7L337.2 171.1Z"/>
<path fill="#545961" d="M341.6 184.4L342.2 181.5L341.5 179.7L340.8 179.1L339.7 179.1L336.3 182.5L336.1 182.9L338.7 186.0Z"/>
<path fill="#687767" d="M437.2 293.2L430.4 283.4L428.6 284.5L427.3 289.5L423.7 292.4L424.2 296.6L430.0 294.9L431.4 296.1L432.4 295.9L436.6 293.3Z"/>
<path fill="#a8998a" d="M270.7 212.0L268.5 212.8L267.7 215.3L268.9 217.1L268.9 217.6L270.8 220.8L272.3 220.9L273.4 221.7L276.8 219.2L275.7 217.1L275.4 217.0L272.9 214.5L273.1 213.0Z"/>
<path fill="#575d62" d="M390.3 311.5L388.8 307.6L386.7 307.6L384.4 311.3L385.1 312.9L386.7 312.9L389.3 319.7L390.7 318.4L390.0 312.0Z"/>
<path fill="#ffffff" d="M433.5 232.9L430.9 233.0L429.7 235.0L428.1 236.4L428.6 238.9L430.1 239.9L434.2 239.9L437.8 241.3L438.2 241.2L437.6 237.3L435.7 234.8L435.4 234.7Z"/>
<path fill="#46424a" d="M298.4 298.2L299.9 297.6L302.0 297.9L306.5 301.3L306.4 302.7L306.1 303.7L302.0 305.4L298.7 303.0Z"/>
<path fill="#9b7b63" d="M331.0 247.2L329.9 242.6L323.3 243.3L322.6 245.2L322.7 247.4L325.3 249.8Z"/>
<path fill="#697968" d="M236.1 215.9L232.5 220.7L231.0 222.6L229.0 225.4L231.2 227.8L231.6 228.4L232.5 228.5L234.6 226.9L235.8 224.0L236.0 223.9L238.2 223.8L239.6 223.0L237.2 216.6Z"/>
<path fill="#e2a783" d="M344.1 304.6L344.6 298.5L346.5 297.8L348.2 299.1L348.6 299.6L349.0 301.7L344.9 305.1Z"/>
<path fill="#a97c64" d="M372.7 202.5L371.1 201.0L370.8 199.7L370.5 197.8L375.5 195.3L376.9 200.9L376.7 201.5L372.8 202.6Z"/>
<path fill="#a5806d" d="M345.3 231.0L345.7 234.6L344.3 236.3L342.1 238.4L342.1 238.4L337.4 235.8L337.3 235.6L337.5 234.9L341.5 232.1Z"/>
<path fill="#84868e" d="M363.4 321.0L363.4 320.9L359.0 322.6L359.6 323.6L356.0 326.3L358.0 327.4L361.5 326.6L361.4 326.5Z"/>
<path fill="#61626c" d="M386.8 256.8L387.6 255.4L388.0 254.0L387.7 251.6L387.9 251.0L386.1 249.1L384.8 248.8L382.2 249.0L379.9 251.4L379.4 251.6L379.6 252.2L382.0 257.6L382.6 257.8L385.1 256.8Z"/>
<path fill="#61626c" d="M374.2 250.7L377.1 250.6L376.6 246.9L371.3 245.6L370.3 245.9L370.5 247.3L372.6 250.0Z"/>
<path fill="#3c4446" d="M426.0 212.0L426.7 214.1L429.0 211.7Z"/>
<path fill="#3c4446" d="M428.5 216.8L428.3 216.3L426.2 215.8L423.9 216.3L423.5 216.2L420.8 220.4L421.9 222.1L424.3 223.4L424.3 223.6L429.0 227.9L432.6 223.1L432.5 222.7L432.2 222.4L428.9 220.8Z"/>
<path fill="#e0a789" d="M300.3 259.3L295.9 260.6L295.1 262.1L295.0 262.9L295.8 264.1L296.5 268.3L297.1 269.6L297.8 270.6L299.7 270.6L300.9 270.3L303.9 263.8L303.7 263.3L303.3 263.1Z"/>
<path fill="#d69e82" d="M384.2 209.5L383.6 209.2L380.6 206.3L379.0 207.9L379.3 214.7L374.5 215.8L372.5 218.8L372.5 219.4L379.1 223.4L382.3 218.1L382.4 218.1L384.9 218.2L387.4 215.6L387.5 213.6L385.6 212.4Z"/>
<path fill="#60686c" d="M488.8 220.5L488.9 220.6L491.2 224.4L491.5 224.6L491.7 224.7L492.4 226.0L493.0 226.2L497.3 225.7L495.0 221.0L494.4 218.8L494.9 217.8L494.9 217.6L492.0 214.5L487.9 217.5L487.2 219.4L487.2 219.4Z"/>
<path fill="#5b5c64" d="M469.0 189.8L473.0 192.3L474.2 192.1L476.5 190.8L476.9 190.3L478.3 187.3L478.6 185.5L475.7 183.3L469.5 186.6Z"/>
<path fill="#67686b" d="M345.3 273.4L345.9 272.3L346.2 270.7L345.0 269.2L343.4 268.9L342.1 268.0L339.3 267.6L339.0 269.6L339.1 273.7L335.5 277.4L337.0 278.5L339.6 279.2L342.2 279.3L342.6 273.8Z"/>
<path fill="#e2b18c" d="M380.5 292.4L383.2 294.5L383.5 291.3L380.6 291.4Z"/>
<path fill="#615f66" d="M369.9 331.7L365.3 334.1L364.8 338.2L365.3 338.5L366.0 344.9L367.0 345.3L367.8 345.4L373.2 342.8L372.6 339.9L373.9 335.8L373.4 334.8L371.6 333.3Z"/>
<path fill="#5c6164" d="M326.2 316.1L323.2 319.2L319.4 318.3L324.3 313.4Z"/>
<path fill="#efb897" d="M413.3 258.6L414.2 256.4L414.0 256.0L408.8 258.1L411.9 259.3Z"/>
<path fill="#62696e" d="M418.3 282.2L417.3 283.5L417.8 284.9L420.1 286.9L421.2 291.3L423.7 292.4L427.3 289.5L428.6 284.5L425.5 283.3L425.3 283.3Z"/>
<path fill="#373535" d="M413.3 219.8L412.7 219.6L408.9 223.4L408.8 226.2L409.5 227.6L410.7 228.2L410.9 228.3L411.1 228.2L414.1 220.2Z"/>
<path fill="#667864" d="M410.2 270.2L411.5 269.1L411.8 266.1L408.9 264.1L404.4 265.8L404.4 266.2Z"/>
<path fill="#a57c65" d="M417.9 248.4L417.9 248.5L422.3 249.4L423.4 246.2L423.3 245.1L420.0 242.2L418.4 241.8L417.7 240.6L413.2 242.9L413.0 245.0L417.6 246.8Z"/>
<path fill="#858d92" d="M398.9 202.7L396.6 204.2L396.9 205.7L399.0 206.7L401.0 204.7Z"/>
<path fill="#505354" d="M331.3 191.5L332.3 186.5L330.1 185.6L328.0 186.1L327.6 187.6L327.5 190.4Z"/>
<path fill="#e7aa8c" d="M411.9 259.3L411.4 261.3L413.8 260.8L413.3 258.6Z"/>
<path fill="#e7aa8c" d="M404.4 265.8L408.9 264.1L409.0 263.3L407.8 258.4L401.2 260.7L402.8 264.9Z"/>
<path fill="#d4a07c" d="M421.5 208.6L423.8 205.2L425.4 204.7L428.3 207.8L422.9 210.3L422.1 210.5L421.7 210.1Z"/>
<path fill="#626e56" d="M317.4 320.0L323.1 321.8L323.2 319.2L319.4 318.3L317.9 318.7Z"/>
<path fill="#868890" d="M385.4 341.8L387.9 337.5L386.1 334.8L381.4 337.8L378.6 335.5L378.1 335.6L379.2 343.7L382.8 341.5Z"/>
<path fill="#d2987b" d="M435.7 186.1L435.8 185.9L435.6 183.8L431.8 181.9L431.4 182.7L430.6 184.9L429.1 187.3L429.5 188.4L432.0 190.2L432.5 187.4Z"/>
<path fill="#5a6065" d="M390.7 318.4L394.6 317.5L394.7 316.6L394.5 313.6L393.1 311.3L390.3 311.5L390.0 312.0Z"/>
<path fill="#ac7f6a" d="M296.0 196.4L294.2 196.9L293.2 199.3L295.1 201.9L295.9 200.9Z"/>
<path fill="#605f66" d="M288.3 150.2L287.5 150.5L287.5 150.6L290.5 154.7L290.9 154.9L291.2 155.3L291.1 155.7L286.4 156.4L285.9 158.1L286.6 159.7L289.9 159.6L290.0 159.5L291.9 159.7L294.2 158.5L296.5 159.5L296.7 159.2L296.6 154.1L296.3 153.8L296.3 153.8L291.5 150.2L291.1 149.2Z"/>
<path fill="#696f7a" d="M416.7 275.9L417.5 275.9L419.1 277.3L418.3 282.2L417.3 283.5L417.0 283.5L413.6 281.1L413.5 280.2L415.0 277.3Z"/>
<path fill="#565f67" d="M253.9 231.1L253.6 232.1L253.2 233.1L253.8 235.6L258.0 237.9L259.3 237.0L260.9 237.0L262.1 234.1L259.0 231.5L258.2 230.0L253.9 231.1Z"/>
<path fill="#d4987c" d="M384.3 161.4L377.6 166.8L375.3 166.8L374.2 164.2L381.2 157.8L381.5 157.8Z"/>
<path fill="#6b7767" d="M269.4 186.0L269.2 184.7L265.0 184.7L264.9 184.8L263.1 187.5L263.1 189.0L264.9 189.5L265.2 191.4L269.5 192.5L269.3 187.8L269.1 187.1L269.3 186.4Z"/>
<path fill="#515a58" d="M257.8 199.2L257.6 200.8L249.6 203.3L258.9 203.9L260.9 205.9L262.9 202.3L262.8 200.1L260.4 196.3L260.1 196.3Z"/>
<path fill="#626b6c" d="M408.2 203.6L405.8 203.1L407.9 198.9L406.1 197.9L403.9 198.5L405.5 203.2L404.2 204.2L409.7 207.7L410.0 206.8L414.5 204.9L413.5 202.5L412.6 201.5Z"/>
<path fill="#32313d" d="M289.4 238.8L286.1 238.0L285.3 242.4L289.2 243.5Z"/>
<path fill="#32313d" d="M282.9 246.3L289.3 248.5L290.3 247.2L290.3 247.0L285.0 242.9L282.3 245.7Z"/>
<path fill="#667868" d="M312.1 114.5L307.4 120.8L307.2 121.1L303.2 126.5L304.4 128.1L306.2 128.8L308.2 126.7L308.4 124.3L314.7 125.2L311.5 121.2L310.9 120.7L312.3 118.9L312.7 115.7Z"/>
<path fill="#99745e" d="M306.8 258.6L303.7 263.3L303.3 263.1L300.3 259.3L300.4 259.2L303.1 256.4Z"/>
<path fill="#8f7f72" d="M379.1 293.9L380.5 292.4L383.2 294.5L383.9 295.5L381.2 296.7Z"/>
<path fill="#d69575" d="M403.5 224.3L403.6 224.8L402.2 227.3L400.6 227.7L398.5 226.5L398.0 224.7L398.4 222.3L401.6 222.2Z"/>
<path fill="#3e4442" d="M247.8 227.7L245.4 230.2L245.5 233.4L249.7 234.5L248.7 240.3L251.1 242.5L251.8 242.8L253.1 244.0L257.6 239.2L258.0 237.9L253.8 235.6L253.2 233.1L253.6 232.1L253.9 231.1L249.9 228.1L249.8 228.0Z"/>
<path fill="#9f7660" d="M333.7 296.9L330.9 296.4L328.6 294.4L327.6 294.2L326.1 294.8L325.4 298.2L326.4 301.1L331.7 301.5L332.0 301.6L334.6 300.1L334.8 299.1Z"/>
<path fill="#53574e" d="M347.3 317.7L350.0 316.4L351.1 314.8L344.4 313.8L342.5 314.1L343.5 317.0Z"/>
<path fill="#53574e" d="M335.4 309.1L333.4 308.1L332.1 309.4L331.4 311.1L331.4 316.1L335.6 316.3L335.6 316.3L336.6 310.1Z"/>
<path fill="#53574e" d="M340.6 322.7L341.6 323.8L348.8 323.9L348.6 323.4L342.7 320.6L341.1 321.7L340.1 315.6L335.9 316.3L340.8 322.1Z"/>
<path fill="#3e3e47" d="M323.6 268.7L332.4 275.5L332.5 276.6L328.4 278.4L327.1 277.9L322.9 269.4L323.5 268.7Z"/>
<path fill="#dfa282" d="M379.3 214.7L374.5 215.8L374.0 211.2L374.2 209.9L379.0 207.9Z"/>
<path fill="#ca9372" d="M441.7 254.5L440.4 254.3L439.9 254.1L440.5 248.5L443.6 247.1L444.6 247.7L444.7 249.0L442.9 253.9L442.2 254.4Z"/>
<path fill="#a78068" d="M328.0 172.0L327.3 168.5L328.7 166.9L332.4 168.6L332.2 169.8Z"/>
<path fill="#454e4c" d="M403.7 212.5L402.4 217.2L403.4 218.3L405.8 218.9L406.1 221.6L408.9 223.4L412.7 219.6L410.7 217.6L409.1 217.3L408.6 217.4L404.2 212.1Z"/>
<path fill="#707f70" d="M317.2 151.4L316.4 152.5L321.9 157.1L322.0 157.0L322.2 150.7L321.8 150.4L321.0 150.1Z"/>
<path fill="#707f70" d="M325.7 156.7L325.0 156.9L328.4 163.0L331.5 160.3L330.5 158.4Z"/>
<path fill="#475646" d="M329.0 175.0L331.1 173.8L333.4 176.5L332.8 177.9L332.2 178.8L332.0 178.9L329.9 178.0L329.0 175.0Z"/>
<path fill="#a47663" d="M378.1 235.6L379.4 236.0L382.1 232.2L377.1 230.6L375.8 232.3L376.3 234.3Z"/>
<path fill="#627863" d="M320.2 304.4L320.4 304.7L326.4 301.1L326.4 301.1L325.4 298.2L323.1 298.7L320.6 300.5L319.2 301.8Z"/>
<path fill="#627863" d="M318.4 301.3L317.1 297.3L312.3 299.7L313.5 301.5L314.6 302.3Z"/>
<path fill="#f0a474" d="M314.1 169.3L311.8 169.4L309.2 170.9L309.7 172.0L310.1 172.7L311.5 173.0L314.0 175.6L320.0 174.7L320.1 174.6L320.2 174.1L314.2 171.9Z"/>
<path fill="#57665a" d="M308.2 149.4L304.8 146.9L300.2 147.6L305.5 153.7Z"/>
<path fill="#57665a" d="M297.8 149.0L299.5 147.4L299.3 146.3L298.8 145.6L290.9 142.9L290.7 143.1L291.7 148.1Z"/>
<path fill="#d49f7b" d="M420.9 188.5L418.4 190.5L416.5 187.9L419.3 186.5Z"/>
<path fill="#a37d63" d="M410.2 176.2L410.7 175.2L410.8 174.7L406.2 171.3L406.0 171.2L405.8 170.9L405.6 170.7L401.2 171.3L399.1 177.6L400.3 178.0L400.6 178.0L404.5 175.6L405.1 174.7Z"/>
<path fill="#58595d" d="M338.5 244.8L337.7 242.9L331.4 241.5L331.3 241.5L337.0 245.1Z"/>
<path fill="#6a816f" d="M439.2 292.1L437.7 293.3L437.2 293.2L430.4 283.4L430.9 282.8L433.1 282.8L440.5 290.6Z"/>
<path fill="#53585c" d="M349.8 235.1L348.8 235.8L349.0 238.6L349.4 239.5L353.1 236.5L353.4 235.7L352.5 234.6Z"/>
<path fill="#53585c" d="M350.3 241.7L350.8 242.8L353.9 241.5L353.9 241.5L353.7 238.9L353.2 237.8Z"/>
<path fill="#67766c" d="M312.3 306.7L306.7 304.7L306.1 303.7L306.4 302.7L311.9 304.1Z"/>
<path fill="#606858" d="M304.4 288.2L304.2 289.9L306.3 292.4L308.0 292.6L310.2 287.9L309.7 287.4L305.2 287.1Z"/>
<path fill="#606858" d="M300.0 292.1L299.9 297.6L302.0 297.9L304.9 293.7Z"/>
<path fill="#4b5252" d="M322.7 188.2L327.6 187.6L328.0 186.1L324.9 183.6L324.9 183.6L318.1 184.2L318.6 186.3L322.3 187.4Z"/>
<path fill="#5d5d66" d="M389.6 184.3L390.2 186.1L389.8 186.5L387.3 187.4L388.1 190.3L391.6 190.8L390.9 194.4L393.0 196.8L394.3 197.7L394.7 197.3L393.2 191.9L391.8 190.7L392.1 190.2L392.3 188.6L392.6 186.4L393.9 183.2Z"/>
<path fill="#5f6a6e" d="M387.7 258.8L387.8 259.4L390.2 261.1L390.6 261.2L390.9 263.4L393.6 265.1L395.9 260.2L393.8 259.0L393.0 257.7L387.6 258.1Z"/>
<path fill="#525459" d="M432.0 190.2L432.5 187.4L435.7 186.1L433.3 191.0L432.8 191.0L432.8 191.0Z"/>
<path fill="#677466" d="M261.9 189.7L263.1 189.0L263.1 187.5L260.8 185.9Z"/>
<path fill="#868c91" d="M351.6 219.7L352.4 217.9L348.3 214.3L347.6 216.5L348.0 217.3L346.2 219.6L346.6 220.4L349.8 218.9Z"/>
<path fill="#8f8c9d" d="M333.2 93.6L337.5 100.9L335.3 101.9L331.1 99.7L330.1 94.8Z"/>
<path fill="#797e85" d="M330.1 94.8L327.8 93.6L321.6 101.9L326.2 102.8L327.1 102.3L331.1 99.7Z"/>
<path fill="#6d7376" d="M274.9 233.9L274.4 234.0L274.7 236.8L276.8 238.9L280.2 238.6L282.3 245.7L282.3 245.7L285.0 242.9L285.3 242.4L286.1 238.0L284.2 235.6L284.2 235.1Z"/>
<path fill="#e1a681" d="M432.1 246.8L434.4 251.4L436.2 251.8L438.1 248.7L434.5 245.1L432.1 246.7Z"/>
<path fill="#747884" d="M382.2 249.0L381.6 245.9L382.0 243.5L384.7 244.6L384.8 248.8Z"/>
<path fill="#6d8175" d="M354.7 295.5L355.6 301.4L357.8 301.4L358.9 297.6L355.2 294.8L355.0 294.9Z"/>
<path fill="#4c585e" d="M260.4 196.3L262.8 200.1L264.6 199.4L265.5 196.5L261.2 195.4Z"/>
<path fill="#61606c" d="M338.4 258.9L341.3 261.3L345.7 259.6L345.7 259.2L340.0 253.4L337.9 254.7L337.8 255.7Z"/>
<path fill="#9f785f" d="M292.7 205.5L290.9 201.9L290.8 201.7L290.5 201.4L287.0 202.6L286.9 203.5L287.0 203.7L286.1 208.4L290.9 210.5L292.5 208.9L292.1 207.1Z"/>
<path fill="#5a6166" d="M386.7 312.9L385.1 312.9L384.8 313.4L384.4 314.7L388.7 320.5L388.4 321.2L389.4 323.7L389.7 324.2L390.2 324.7L396.6 322.4L396.7 322.4L397.9 319.7L394.6 317.5L390.7 318.4L389.3 319.7Z"/>
<path fill="#dca480" d="M322.1 166.8L320.4 166.5L318.3 169.6L316.2 167.4L314.1 169.3L314.2 171.9L320.2 174.1L320.2 174.0L319.5 171.7Z"/>
<path fill="#a07d68" d="M464.6 238.2L463.0 234.2L465.5 233.4L466.0 236.6Z"/>
<path fill="#e8af8e" d="M361.5 326.6L361.4 326.5L363.4 321.0L365.3 323.3L365.1 327.2L362.8 327.7Z"/>
<path fill="#e1a27c" d="M434.5 245.1L437.8 241.3L434.2 239.9L430.1 239.9L428.6 238.9L425.9 241.8L425.9 241.9L428.3 245.5L428.7 245.8L430.9 246.0L432.1 246.7Z"/>
<path fill="#605d5f" d="M347.3 207.2L348.0 209.9L349.2 212.1L350.8 212.2L354.2 206.0L347.5 205.7Z"/>
<path fill="#efb695" d="M314.7 156.4L310.9 158.8L311.8 159.8L311.8 159.9L313.3 161.8L313.3 161.9L317.0 160.3L317.7 158.8L315.7 157.4Z"/>
<path fill="#efb695" d="M319.3 165.0L321.6 164.0L322.0 162.9L317.6 162.9L317.6 164.8Z"/>
<path fill="#9a7b66" d="M302.9 220.1L308.3 219.4L311.5 221.2L311.7 222.6L311.2 223.4L307.6 224.9L306.6 224.6Z"/>
<path fill="#434647" d="M420.8 220.4L423.5 216.2L422.8 215.2L418.3 216.0L416.2 212.4L413.3 219.8L414.1 220.2L415.2 220.5L416.8 219.8Z"/>
<path fill="#667867" d="M247.7 212.6L252.6 209.9L249.1 203.3L246.9 201.4L242.2 207.8L244.3 211.7Z"/>
<path fill="#d4a97f" d="M361.8 273.3L357.4 273.4L356.2 271.9L356.2 271.5L359.8 270.7Z"/>
<path fill="#7d8a8d" d="M382.8 178.3L385.6 175.4L386.0 173.4L384.9 171.1L383.5 170.0L381.6 169.7L381.2 177.0L381.6 177.5L381.9 177.8Z"/>
<path fill="#a88366" d="M296.0 251.7L294.5 252.4L293.1 255.9L289.9 256.3L289.8 256.4L289.2 258.0L290.2 259.1L295.1 262.1L295.9 260.6L300.3 259.3L300.4 259.2L298.4 255.4L297.8 255.3Z"/>
<path fill="#3b3e43" d="M436.5 266.6L436.6 266.4L435.2 264.5L431.9 264.2L430.3 266.6L431.2 268.5L430.3 270.3L425.7 269.3L430.0 274.3L430.1 274.4L431.2 275.6L435.7 274.0L433.3 268.7Z"/>
<path fill="#474d51" d="M415.8 228.2L411.1 228.2L414.1 220.2L415.2 220.5L417.3 226.3Z"/>
<path fill="#d79a7a" d="M405.1 230.0L402.2 227.3L400.6 227.7L399.9 230.5L398.9 231.5L396.9 235.2L404.3 234.9L404.7 234.6L404.6 233.9Z"/>
<path fill="#616e64" d="M249.1 219.9L250.8 219.8L251.2 215.5L247.7 216.5L247.4 218.5Z"/>
<path fill="#d59e7c" d="M327.3 281.0L328.3 285.1L331.4 287.1L332.3 287.0L332.8 286.2L333.3 277.0L332.5 276.6L328.4 278.4Z"/>
<path fill="#d59277" d="M423.8 187.4L425.0 192.5L421.1 195.6L418.4 191.2L418.4 190.5L420.9 188.5Z"/>
<path fill="#997660" d="M372.7 202.5L365.4 205.1L364.0 206.9L365.7 208.2L366.4 208.5L371.9 207.1L372.8 202.6Z"/>
<path fill="#d99c7d" d="M349.9 294.6L346.6 297.3L346.5 297.8L348.2 299.1L348.6 299.6L351.6 297.8L350.2 295.6Z"/>
<path fill="#f2a77a" d="M305.1 174.8L303.8 174.8L302.4 174.0L302.6 173.1L304.0 170.4L308.1 170.0L309.2 170.9L309.7 172.0Z"/>
<path fill="#69806e" d="M441.7 187.4L440.3 182.4L440.1 182.3L438.3 182.6L435.6 183.8L435.8 185.9L438.0 188.2L438.9 188.5Z"/>
<path fill="#69806e" d="M431.6 181.4L428.9 180.8L428.9 180.8L422.5 181.9L424.0 186.0L424.1 186.5L429.1 187.3L430.6 184.9L431.4 182.7L431.8 181.9Z"/>
<path fill="#3d4546" d="M391.2 203.4L391.7 207.0L391.4 207.4L389.0 207.5L388.3 207.3L386.7 204.2L387.8 202.0Z"/>
<path fill="#5c5a6a" d="M314.9 188.5L313.2 187.5L312.6 186.4L315.0 182.5L317.1 181.9L318.1 184.2L318.6 186.3L317.4 188.0Z"/>
<path fill="#647568" d="M249.6 203.3L249.1 203.3L246.9 201.4L248.8 198.9L252.7 198.5L257.8 199.2L257.6 200.8Z"/>
<path fill="#9f8e87" d="M370.3 245.9L366.6 243.0L364.1 245.7L363.8 249.4L367.2 251.5L368.2 253.6L368.4 256.1L370.6 256.5L374.2 250.7L372.6 250.0L370.5 247.3Z"/>
<path fill="#a37e65" d="M311.0 185.9L309.8 183.2L307.3 183.3L306.2 188.8Z"/>
<path fill="#50565a" d="M321.1 238.7L318.1 239.0L318.3 235.0L318.9 234.5L320.8 235.9Z"/>
<path fill="#cc9474" d="M379.4 270.2L378.7 271.6L377.8 275.9L378.0 276.2L379.8 277.2L383.4 273.3L382.2 270.3L382.2 270.3L380.9 269.9Z"/>
<path fill="#4b4c49" d="M281.0 189.9L283.3 189.9L283.7 190.9L282.6 196.7L280.6 197.7L278.7 197.1L277.8 196.3L277.3 194.5Z"/>
<path fill="#b38774" d="M331.7 248.8L331.7 248.1L331.0 247.2L325.3 249.8L325.4 251.5L329.8 250.8Z"/>
<path fill="#a87b66" d="M425.2 269.0L425.5 265.5L425.0 264.8L423.7 264.6L419.2 270.0L419.5 270.5L423.3 271.1L423.9 270.9Z"/>
<path fill="#636f68" d="M352.5 166.9L352.3 166.3L350.5 163.9L344.9 165.6L345.0 167.1L345.1 167.3L348.3 168.9L351.1 171.4L353.0 170.7L352.5 167.2Z"/>
<path fill="#df9d88" d="M395.5 276.1L397.9 278.1L398.0 282.5L393.6 284.8L392.8 284.8L391.1 283.9L388.8 279.9L388.6 277.6L390.2 275.5L391.4 275.1Z"/>
<path fill="#b18475" d="M412.1 246.0L411.4 246.2L410.0 245.3L410.9 241.9L413.2 242.9L413.0 245.0Z"/>
<path fill="#d9997d" d="M388.6 277.6L385.5 276.2L383.4 273.3L382.2 270.3L388.3 269.9L390.2 275.5Z"/>
<path fill="#a7836c" d="M372.1 290.1L370.8 290.9L370.9 296.5L372.1 297.2L376.0 293.7L374.4 289.9Z"/>
<path fill="#34323b" d="M404.1 204.3L404.2 204.2L405.5 203.2L403.9 198.5L401.8 197.3L401.3 200.4L399.7 200.7L397.6 196.7L397.5 196.7L397.8 201.4L398.3 201.6L398.9 202.7L401.0 204.7L403.1 204.1Z"/>
<path fill="#a67861" d="M314.0 192.4L314.1 192.2L314.9 188.5L313.2 187.5L308.7 192.6L309.3 194.2L313.1 193.4Z"/>
<path fill="#565d5e" d="M355.0 294.9L355.2 294.8L356.1 292.0L356.1 291.9L352.5 288.9L350.5 290.9L353.5 294.6Z"/>
<path fill="#546550" d="M352.0 312.1L352.6 307.6L353.4 305.9L358.4 306.6L357.7 308.6L354.6 313.2L352.5 313.4Z"/>
<path fill="#fffdfe" d="M372.5 181.0L372.3 183.7L368.7 185.3L366.0 181.1L365.9 179.5L366.2 179.4Z"/>
<path fill="#938074" d="M444.3 189.1L446.3 191.9L450.1 190.4L450.3 188.7L448.7 186.8L448.2 186.8Z"/>
<path fill="#938074" d="M454.0 195.0L453.0 196.7L452.7 197.4L457.7 201.2L459.1 196.8L459.1 196.8Z"/>
<path fill="#7c7c8d" d="M303.3 136.0L302.9 137.1L295.1 137.2L299.1 131.8L300.3 132.3L302.8 134.9Z"/>
<path fill="#8e8678" d="M431.6 181.4L431.8 181.9L435.6 183.8L438.3 182.6L435.3 175.1L434.8 174.9L433.4 175.7Z"/>
<path fill="#a7998c" d="M393.3 254.4L393.4 254.3L394.0 250.6L393.5 249.1L393.2 249.0L387.9 251.0L387.7 251.6L388.0 254.0Z"/>
<path fill="#545c63" d="M361.3 302.3L359.1 302.5L357.8 301.4L358.9 297.6L361.0 296.4L361.9 301.2Z"/>
<path fill="#9f8984" d="M440.5 290.6L433.1 282.8L436.2 281.8L437.6 282.5L443.7 286.4L443.5 288.8Z"/>
<path fill="#5d7164" d="M261.6 260.2L260.2 256.9L259.5 256.1L257.5 254.6L255.0 260.8L255.5 262.9L256.5 263.4L258.9 262.8L262.2 267.1L262.5 266.7L262.7 264.3L261.6 260.3Z"/>
<path fill="#5d7164" d="M246.3 249.4L239.3 255.3L239.3 255.4L247.8 253.8Z"/>
<path fill="#403e47" d="M380.7 150.3L380.4 150.6L379.2 153.0L382.5 155.1L384.9 153.0L384.0 151.5Z"/>
<path fill="#d39876" d="M474.9 232.7L473.1 235.1L476.0 239.0L477.6 238.9L478.4 238.4L477.6 234.0Z"/>
<path fill="#5b6953" d="M269.6 208.4L270.1 208.8L270.7 212.0L268.5 212.8L265.3 209.8Z"/>
<path fill="#5b5d69" d="M400.9 343.1L403.3 341.7L399.3 340.0L398.6 337.7L394.5 336.6L393.2 338.0L393.7 341.5L395.9 342.7L397.3 342.1Z"/>
<path fill="#5d676f" d="M299.5 222.8L298.2 222.6L294.6 220.0L294.4 219.8L293.9 217.1L297.6 215.4L297.8 215.6L300.6 221.0Z"/>
<path fill="#9c7a61" d="M361.9 273.4L362.6 272.6L360.9 269.6L359.8 270.7L361.8 273.3Z"/>
<path fill="#a6886b" d="M302.9 220.1L302.4 220.0L300.6 221.0L299.5 222.8L300.2 224.6L300.1 227.1L302.7 229.7L306.8 226.3L307.6 224.9L306.6 224.6Z"/>
<path fill="#7c7e8b" d="M302.9 138.1L302.9 137.1L295.1 137.2L294.4 138.2L290.9 142.9L298.8 145.6L298.5 141.5Z"/>
<path fill="#7c7e8b" d="M291.7 148.1L290.7 143.1L288.1 146.6L288.3 150.2L291.1 149.2Z"/>
<path fill="#434548" d="M428.9 220.8L428.5 216.8L432.0 217.6L432.2 222.4Z"/>
<path fill="#9c6f5f" d="M330.2 267.9L331.7 264.5L330.5 263.7L327.9 264.6L326.3 262.2L324.3 262.3L323.6 268.6L327.4 267.2Z"/>
<path fill="#5d5f65" d="M303.1 256.4L300.4 259.2L298.4 255.4L299.1 255.1L302.9 255.8Z"/>
<path fill="#65776a" d="M249.6 203.3L249.1 203.3L252.6 209.9L254.5 211.0L254.6 211.1L261.1 208.5L260.9 205.9L258.9 203.9Z"/>
<path fill="#36353f" d="M289.2 243.5L289.4 238.8L290.9 238.7L292.7 239.9L291.6 243.3L290.3 245.1Z"/>
<path fill="#414243" d="M379.4 223.9L379.1 223.4L372.5 219.4L370.0 223.0L369.7 226.9L368.1 229.7L368.2 231.5L369.5 232.4L375.8 232.3L377.1 230.6L376.8 228.2Z"/>
<path fill="#617463" d="M342.6 325.9L341.6 323.8L340.6 322.7L336.0 324.8L334.7 326.8L337.1 329.5L339.6 329.6L341.8 330.6L346.0 329.0Z"/>
<path fill="#888591" d="M317.1 181.9L315.0 182.5L311.9 181.5L312.7 177.7L312.7 177.7L317.5 180.9Z"/>
<path fill="#dda186" d="M327.3 230.8L327.2 235.9L325.4 235.5L324.2 231.9Z"/>
<path fill="#40494f" d="M336.6 200.7L338.1 200.8L339.5 199.7L341.3 195.0L339.0 192.1L338.7 191.9L338.2 192.3Z"/>
<path fill="#575d5e" d="M381.9 359.7L380.0 356.6L380.2 355.6L383.5 353.1L386.5 354.2L386.5 354.9L383.0 359.8Z"/>
<path fill="#f2aa7c" d="M406.1 221.6L408.9 223.4L408.8 226.2L403.6 224.8L403.5 224.3Z"/>
<path fill="#5f6668" d="M384.0 363.4L377.0 364.5L378.0 367.2L383.9 364.6Z"/>
<path fill="#aa856e" d="M267.4 256.0L268.4 260.5L264.9 260.3L266.5 256.6Z"/>
<path fill="#617760" d="M295.6 235.3L296.9 236.9L293.8 240.0L292.7 239.9L290.9 238.7L292.3 235.0L292.6 234.9Z"/>
<path fill="#efb798" d="M405.8 218.9L406.1 221.6L403.5 224.3L401.6 222.2L403.4 218.3Z"/>
<path fill="#4a5153" d="M268.4 239.3L268.1 239.2L267.3 243.2L270.8 244.7L271.1 243.6Z"/>
<path fill="#4a5153" d="M279.0 251.1L278.9 249.4L277.1 248.9L274.9 250.8L277.0 253.1L277.2 253.2L277.5 253.1Z"/>
<path fill="#cd8769" d="M469.2 216.9L467.9 216.6L462.6 219.3L463.0 221.7L466.1 225.0L468.7 224.4L469.8 218.0Z"/>
<path fill="#82858f" d="M482.2 238.0L482.0 234.0L477.6 234.0L478.4 238.4L481.3 238.4Z"/>
<path fill="#525357" d="M279.0 205.4L276.0 206.3L275.9 206.4L278.6 211.9L279.2 212.2L280.0 211.7Z"/>
<path fill="#a67964" d="M405.9 254.3L405.5 252.3L401.1 250.0L400.6 251.3L395.5 251.4L400.2 256.4L400.9 255.6Z"/>
<path fill="#f6ac7d" d="M297.6 280.7L301.3 281.6L299.7 278.4L298.9 278.2Z"/>
<path fill="#e9a286" d="M361.9 273.4L362.4 276.9L363.3 277.0L366.9 275.7L368.3 274.2L367.5 271.9L366.9 271.6L365.2 271.1L362.6 272.6Z"/>
<path fill="#413f43" d="M284.2 235.1L274.9 233.9L281.3 231.1L284.4 233.9Z"/>
<path fill="#d79b7a" d="M363.8 260.2L360.0 257.0L359.0 257.5L358.8 259.2L360.2 261.0Z"/>
<path fill="#8b8472" d="M308.0 209.7L305.2 209.6L301.4 212.1L302.7 215.4L303.4 215.7L305.5 214.9L308.1 210.0Z"/>
<path fill="#5e696b" d="M291.2 228.6L287.9 224.3L288.3 223.6L289.6 223.5L293.3 224.9L293.9 225.3L294.2 227.1Z"/>
<path fill="#eca977" d="M417.9 226.3L421.9 222.1L424.3 223.4L424.3 223.6L422.8 226.2L420.0 227.1Z"/>
<path fill="#747d6e" d="M242.9 244.2L243.1 238.0L246.7 239.7L243.7 245.4Z"/>
<path fill="#607760" d="M408.1 210.2L409.1 217.3L408.6 217.4L404.2 212.1L405.4 210.2Z"/>
<path fill="#48474c" d="M365.0 188.0L363.0 187.0L361.8 184.3L363.9 183.4L366.0 187.4Z"/>
<path fill="#747b87" d="M286.6 196.8L282.6 196.7L283.7 190.9L287.1 193.5L287.1 195.7Z"/>
<path fill="#585460" d="M310.1 172.7L311.5 173.0L314.0 175.6L312.7 177.7L312.7 177.7L311.0 177.4L309.7 174.2Z"/>
<path fill="#403f45" d="M295.1 242.3L294.4 243.9L294.5 245.8L296.4 246.3L297.7 243.6Z"/>
<path fill="#5d656b" d="M345.9 203.6L346.1 203.7L348.0 197.5L343.4 197.8L342.1 195.3L341.3 195.0L339.5 199.7L343.3 199.8Z"/>
<path fill="#a8806c" d="M339.1 273.7L339.0 269.6L332.5 274.1L332.4 275.5L332.5 276.6L333.3 277.0L335.5 277.4Z"/>
<path fill="#625f65" d="M358.1 237.6L358.5 239.4L358.8 239.7L365.3 240.7L365.0 235.5L359.3 235.7L358.1 237.2Z"/>
<path fill="#958879" d="M327.3 230.8L330.0 228.9L330.9 233.3L328.1 236.3L327.2 235.9Z"/>
<path fill="#434c49" d="M417.3 232.1L417.3 232.3L422.0 232.3L421.6 229.7L421.0 229.1Z"/>
<path fill="#3d4042" d="M379.0 192.1L382.9 193.3L383.7 193.8L384.3 196.2L376.9 200.9L375.5 195.3L375.6 194.7Z"/>
<path fill="#343d40" d="M464.8 181.6L463.1 174.1L463.3 173.9L471.2 179.9L467.8 182.7Z"/>
<path fill="#d99e7f" d="M302.9 220.1L308.3 219.4L305.5 214.9L303.4 215.7L302.4 220.0Z"/>
<path fill="#9599a9" d="M383.8 137.6L384.4 137.1L384.3 136.9L379.8 132.1L379.8 132.2L379.3 135.6Z"/>
<path fill="#3d3941" d="M273.2 187.7L278.1 184.4L278.3 186.6L275.3 189.5Z"/>
<path fill="#d7987b" d="M335.5 277.4L333.3 277.0L332.8 286.2L335.9 285.7L337.0 279.5L337.0 278.5Z"/>
<path fill="#3f3f44" d="M330.0 228.9L330.3 228.0L335.7 228.6L336.6 229.9L337.5 234.9L337.3 235.6L330.9 233.3Z"/>
<path fill="#f9b798" d="M333.6 289.0L332.3 287.0L331.4 287.1L329.3 289.3L327.9 293.2L327.8 293.5Z"/>
<path fill="#99755f" d="M364.7 286.1L367.1 286.3L367.8 290.8L365.3 291.9Z"/>
<path fill="#7d818e" d="M377.9 344.8L379.2 343.7L378.1 335.6L373.9 335.8L372.6 339.9L373.2 342.8L375.4 344.7L377.1 345.1Z"/>
<path fill="#9a7362" d="M370.6 256.5L368.4 256.1L367.3 257.0L367.1 257.5L369.7 262.8L372.8 260.9L373.0 257.8Z"/>
<path fill="#a57761" d="M313.2 187.5L308.7 192.6L306.0 189.3L306.0 189.2L306.2 188.8L311.0 185.9L312.6 186.4Z"/>
<path fill="#626764" d="M315.6 126.9L315.4 126.8L314.3 127.8L312.6 131.2L315.8 133.6L317.7 132.0Z"/>
<path fill="#a9856b" d="M324.2 231.9L321.3 229.7L320.1 229.3L319.4 230.1L318.9 234.5L320.8 235.9L324.9 235.8L325.4 235.5Z"/>
<path fill="#d79777" d="M426.3 192.6L425.0 192.5L421.1 195.6L420.8 196.8L423.0 199.0L425.1 199.7L429.7 195.6L429.4 194.4Z"/>
<path fill="#9a8c83" d="M353.8 284.6L352.3 285.4L349.1 284.1L347.2 282.9L346.4 280.4L350.1 277.4L354.6 279.8Z"/>
<path fill="#ab8274" d="M264.6 260.4L264.9 260.3L266.5 256.6L260.2 256.9L261.6 260.2Z"/>
<path fill="#eda878" d="M444.6 206.3L445.3 207.5L451.1 210.0L453.7 209.1L455.5 208.3L455.7 207.3L447.9 203.9Z"/>
<path fill="#595e63" d="M363.5 103.0L364.8 103.8L364.4 109.2L363.5 109.6L361.5 109.6L360.7 109.0L360.0 107.7L360.1 105.3Z"/>
<path fill="#ed9e6e" d="M304.8 283.8L305.2 283.6L308.9 283.9L309.7 287.4L305.2 287.1Z"/>
<path fill="#474747" d="M298.4 255.4L297.8 255.3L296.0 251.7L296.4 251.0L298.5 249.4L299.7 250.2L300.6 252.5L299.1 255.1Z"/>
<path fill="#393e3c" d="M332.8 193.7L338.2 192.3L338.7 191.9L338.7 191.6L338.2 190.3L333.2 186.2L332.3 186.5L331.3 191.5Z"/>
<path fill="#4e5a5c" d="M365.6 297.1L363.5 294.3L363.5 293.6L363.7 293.1L365.3 291.9L367.8 290.8L370.8 290.9L370.9 296.5L366.5 297.8Z"/>
<path fill="#777f84" d="M301.9 235.4L299.4 237.2L299.2 240.7L299.9 242.5L300.3 242.5L304.1 241.5L304.8 241.1L303.9 234.8L303.7 234.7Z"/>
<path fill="#d99b7f" d="M336.8 303.6L333.0 306.5L332.0 301.6L334.6 300.1L334.9 300.3Z"/>
<path fill="#4f5b49" d="M336.1 182.9L338.7 186.0L338.2 190.3L333.2 186.2L334.9 183.6Z"/>
<path fill="#ecb798" d="M444.8 239.1L442.5 239.9L440.2 241.3L443.6 247.1L444.6 247.7L448.5 245.8L449.3 243.4L449.3 243.1Z"/>
<path fill="#dca582" d="M378.0 269.4L373.2 269.0L370.9 267.5L374.1 264.1L377.7 268.2Z"/>
</g>
<circle cx="351" cy="140" r="28.500" fill="rgba(236,120,130,0.300)"/>
<g clip-path="url(#dia)" stroke="#7a1420" stroke-width="0.900" stroke-linejoin="round">
<path fill="#fdecee" d="M344.6 121.8L343.4 119.4L341.4 118.1L341.4 118.0L337.8 118.8L337.8 118.8L328.1 118.7L329.1 120.8L334.7 123.0L337.2 120.4L340.2 131.1L340.4 131.0L343.4 126.4Z"/>
<path fill="#c89894" d="M345.8 156.9L341.7 158.2L341.3 158.3L339.4 157.5L338.6 160.0L341.2 164.4L342.0 164.4L343.8 164.7L344.5 162.0L346.3 157.0Z"/>
<path fill="#c89894" d="M331.5 160.3L333.0 160.6L334.8 165.8L337.6 164.8L336.7 160.6L334.2 159.8L335.3 157.5L333.0 156.1L331.3 156.4L330.5 158.4Z"/>
<path fill="#c89497" d="M339.6 150.5L335.6 148.4L335.4 148.5L334.4 148.0L331.2 153.3L330.7 153.7L333.5 154.6L333.0 156.1L335.3 157.5L337.6 155.5L337.2 154.6L337.2 153.6L340.8 151.3L342.6 151.2L345.4 147.1L345.1 146.4L341.3 146.5Z"/>
<path fill="#c89497" d="M328.6 152.8L325.7 156.7L330.5 158.4L331.3 156.4L330.7 153.7Z"/>
<path fill="#d2a3a0" d="M346.3 131.3L345.8 137.0L350.9 135.9L349.5 131.1L349.5 131.1L349.4 131.1Z"/>
<path fill="#d8a4a9" d="M353.4 160.2L354.8 156.6L348.6 154.2L346.9 156.8L346.3 157.0L344.5 162.0L343.8 164.7L344.9 165.6L350.5 163.9L351.4 161.4Z"/>
<path fill="#d8a4a9" d="M359.7 167.4L359.7 166.5L358.7 164.6L357.4 164.5L356.7 166.1L354.1 165.7L352.3 166.3L352.5 166.9L357.1 167.3L357.6 167.8Z"/>
<path fill="#e4a19d" d="M339.4 131.9L336.9 132.3L332.7 136.5L330.4 138.2L330.3 138.4L330.7 140.0L330.9 144.4L331.1 145.7L334.4 148.0L335.4 148.5L335.6 148.4L339.0 146.5L341.3 146.5L345.1 146.4L345.1 146.1L345.0 145.9L338.3 142.3L340.5 140.5L343.1 139.9L343.3 137.9Z"/>
<path fill="#d3a2a0" d="M339.4 157.5L338.5 156.0L337.6 155.5L335.3 157.5L334.2 159.8L336.7 160.6L337.6 164.8L340.6 164.7L341.2 164.4L338.6 160.0Z"/>
<path fill="#cb9a97" d="M358.5 145.5L358.8 145.2L360.1 141.1L359.5 139.2L359.5 139.1L353.4 140.1L352.4 139.3L351.7 138.3L351.3 136.5L351.2 136.2L350.9 135.9L345.8 137.0L343.3 137.9L343.1 139.9L344.5 142.7L345.0 145.9L345.1 146.1L345.1 146.4L345.4 147.1L349.0 149.3L349.5 149.2L352.7 146.4L354.9 145.0L356.8 145.5Z"/>
<path fill="#cd999d" d="M349.5 131.1L350.9 135.9L351.2 136.2L351.3 136.5L359.0 137.3L358.6 133.4L357.2 133.2L354.2 129.4Z"/>
<path fill="#cd999d" d="M366.6 151.2L367.2 148.9L366.7 148.0L365.9 147.7L362.7 149.9L362.3 149.9L359.4 151.1L358.7 152.7L363.7 154.2L364.4 153.4L365.0 153.2Z"/>
<path fill="#dca9ad" d="M363.2 118.8L364.1 121.4L364.3 125.1L364.5 125.4L365.1 127.2L365.5 127.6L372.9 127.4L373.5 127.8L377.3 128.6L373.7 134.2L374.9 135.0L379.8 132.2L379.8 132.1L380.1 129.8L378.8 128.2L379.1 127.1L379.1 125.9L372.7 121.0L372.6 120.9L372.9 119.1L372.7 118.4L369.3 117.9L366.5 116.0L365.5 116.0L363.5 109.6L361.5 109.6L358.9 115.7L354.7 115.0L354.3 113.8L353.9 113.3L352.0 112.1L349.4 113.9L349.9 115.6L353.7 115.8L352.9 120.6L353.7 122.9L354.4 123.2L355.4 123.5L359.2 116.5Z"/>
<path fill="#cb9897" d="M369.6 139.8L369.1 138.2L368.1 138.3L365.4 137.4L364.4 140.4L362.9 141.8L360.1 141.1L358.8 145.2L361.0 145.8L363.2 145.8L365.1 147.0L365.9 147.7L366.7 148.0L368.9 145.0L368.4 144.0Z"/>
<path fill="#cb9897" d="M372.0 144.8L372.2 142.9L370.1 140.5L369.9 144.9Z"/>
<path fill="#d9a6ac" d="M370.8 133.5L371.3 134.2L373.7 134.2L377.3 128.6L373.5 127.8Z"/>
<path fill="#d9a6ac" d="M379.3 135.6L379.8 132.2L374.9 135.0L376.7 137.3L377.4 137.2Z"/>
<path fill="#ca989b" d="M342.6 151.2L340.8 151.3L337.2 153.6L337.2 154.6L337.6 155.5L338.5 156.0L339.4 157.5L341.3 158.3L341.7 158.2L345.8 156.9L346.3 157.0L346.9 156.8L348.6 154.2L349.0 149.3L345.4 147.1Z"/>
<path fill="#ce9a9b" d="M365.9 147.7L365.1 147.0L363.2 145.8L361.0 145.8L358.8 145.2L358.5 145.5L359.4 151.1L362.3 149.9L362.7 149.9Z"/>
<path fill="#ce9a9b" d="M369.6 154.1L365.8 153.7L365.0 153.2L364.4 153.4L363.7 154.2L358.7 152.7L357.0 153.8L356.8 154.8L361.6 160.1L361.1 160.4L358.7 164.6L359.7 166.5L361.0 165.4L361.9 160.1L363.9 160.0L365.0 160.5L365.7 160.4L373.7 163.3L374.2 160.1L371.6 154.5L370.7 154.7Z"/>
<path fill="#d4a1a4" d="M377.6 143.1L381.5 142.3L382.1 141.6L377.4 137.2L376.7 137.3L375.0 140.1L369.9 137.6L369.1 138.2L369.6 139.8L370.1 140.5L372.2 142.9L375.1 140.2Z"/>
<path fill="#c59092" d="M346.8 122.9L344.6 121.8L343.4 126.4L348.8 128.4L349.4 131.1L349.5 131.1L349.5 131.1L354.2 129.4L356.1 124.3L355.4 123.5L354.4 123.2L353.7 122.9L353.7 122.9Z"/>
<path fill="#d19ea3" d="M377.6 143.1L375.1 140.2L372.2 142.9L372.0 144.8L374.4 147.2L375.7 146.6Z"/>
<path fill="#c28f91" d="M356.4 124.4L356.1 124.3L354.2 129.4L357.2 133.2L358.6 133.4L359.0 137.3L351.3 136.5L351.7 138.3L352.4 139.3L353.4 140.1L359.5 139.1L359.5 139.2L360.1 141.1L362.9 141.8L364.4 140.4L365.4 137.4L364.9 137.1L364.7 136.1L359.9 132.6L365.1 127.2L364.5 125.4L364.3 125.1Z"/>
<path fill="#d4a0a5" d="M373.7 134.2L371.3 134.2L370.8 133.5L366.9 130.6L365.5 127.6L365.1 127.2L359.9 132.6L364.7 136.1L364.9 137.1L365.4 137.4L368.1 138.3L369.1 138.2L369.9 137.6L375.0 140.1L376.7 137.3L374.9 135.0Z"/>
<path fill="#d4a0a5" d="M369.9 144.9L370.1 140.5L369.6 139.8L368.4 144.0L368.9 145.0Z"/>
<path fill="#d7a4a8" d="M364.7 165.5L365.0 160.5L363.9 160.0L361.9 160.1L361.0 165.4Z"/>
<path fill="#cf9c9f" d="M346.3 131.3L349.4 131.1L348.8 128.4L343.4 126.4L340.4 131.0Z"/>
<path fill="#cf9c9f" d="M336.9 132.3L339.4 131.9L340.2 131.1L337.2 120.4L334.7 123.0L334.4 123.5L329.9 125.3L329.7 125.3L328.4 126.1L327.5 127.4L327.0 128.7L327.0 129.1L333.7 129.4L335.4 130.3Z"/>
<path fill="#d0a09f" d="M324.0 145.5L323.1 144.2L326.3 138.5L330.3 138.4L330.7 140.0L330.9 144.4L324.0 145.5Z"/>
<path fill="#dea09d" d="M324.3 149.1L324.0 145.5L330.9 144.4L331.1 145.7L327.9 149.3L324.4 149.4Z"/>
<path fill="#cc999b" d="M334.4 148.0L331.1 145.7L327.9 149.3L328.6 152.8L330.7 153.7L331.3 156.4L333.0 156.1L333.5 154.6L330.7 153.7L331.2 153.3Z"/>
<path fill="#cfa19c" d="M349.5 149.2L355.1 151.9L356.8 145.5L354.9 145.0L352.7 146.4Z"/>
<path fill="#daa9ad" d="M372.9 127.4L373.5 127.8L370.8 133.5L366.9 130.6L365.5 127.6Z"/>
<path fill="#d7a3a8" d="M368.9 145.0L366.7 148.0L367.2 148.9L366.6 151.2L365.0 153.2L365.8 153.7L369.6 154.1L370.7 154.7L371.6 154.5L371.7 154.5L377.7 154.1L375.3 150.4L373.8 149.2L374.4 147.2L372.0 144.8L369.9 144.9Z"/>
<path fill="#cb9999" d="M358.7 164.6L361.1 160.4L356.0 161.5L353.4 160.2L351.4 161.4L350.5 163.9L352.3 166.3L354.1 165.7L356.7 166.1L357.4 164.5Z"/>
<path fill="#cf9ca1" d="M345.0 145.9L338.3 142.3L340.5 140.5L343.1 139.9L344.5 142.7Z"/>
<path fill="#d4a3a5" d="M327.0 129.1L333.7 129.4L335.4 130.3L336.9 132.3L332.7 136.5L330.4 138.2L327.0 129.1Z"/>
<path fill="#cd9b9f" d="M340.4 131.0L340.2 131.1L339.4 131.9L343.3 137.9L345.8 137.0L346.3 131.3Z"/>
<path fill="#df9f9e" d="M321.6 134.2L321.8 135.3L325.7 138.3L326.3 138.5L330.3 138.4L330.4 138.2L327.0 129.1L322.2 132.3Z"/>
<path fill="#d2a5a0" d="M349.4 113.9L347.7 112.3L341.4 118.1L343.4 119.4L348.4 117.7L349.9 115.6Z"/>
<path fill="#d6a2a7" d="M329.7 125.3L329.1 120.8L334.7 123.0L334.4 123.5L329.9 125.3Z"/>
<path fill="#d09b9e" d="M358.5 145.5L356.8 145.5L355.1 151.9L349.5 149.2L349.0 149.3L348.6 154.2L354.8 156.6L353.4 160.2L356.0 161.5L361.1 160.4L361.6 160.1L356.8 154.8L357.0 153.8L358.7 152.7L359.4 151.1Z"/>
<path fill="#d6a3a8" d="M346.8 122.9L344.6 121.8L343.4 119.4L348.4 117.7L352.9 120.6L353.7 122.9L353.7 122.9Z"/>
<path fill="#d1a39f" d="M359.2 116.5L355.4 123.5L356.1 124.3L356.4 124.4L364.3 125.1L364.1 121.4L363.2 118.8Z"/>
<path fill="#d1a39f" d="M348.4 117.7L352.9 120.6L353.7 115.8L349.9 115.6Z"/>
<path fill="#c89795" d="M341.3 146.5L339.0 146.5L335.6 148.4L339.6 150.5Z"/>
</g>
<path d="M338 80 L513.600 211.700 Q515.500 213.500 514 215.500 L392 379 Q387 384.500 381 380 L212.500 253 Q210 250.500 212 247.500 Z" fill="none" stroke="#000" stroke-width="1.200"/>
<g shape-rendering="crispEdges">
<path d="M367 361.500H521M367 364.500H521" stroke="#000" stroke-width="1" fill="none"/>
<rect x="418" y="361" width="52" height="4" fill="#000"/>
<path d="M367.500 359v9M418.500 358v10M469.500 358v10M520.500 358v10" stroke="#000" stroke-width="1"/>
</g>
<g font-family="Liberation Sans, sans-serif" font-size="12.500px" fill="#000" text-anchor="middle">
<text x="419" y="355.500">50</text><text x="470" y="355.500">100</text><text x="521" y="355.500">150</text>
<text x="443.500" y="381">Units</text>
</g>
<path d="M345 126L372 146L356 164L328 143Z" fill="#dea98e" stroke="#6a1010" stroke-width="1.200"/>
<path d="M346 137l3 -2 3 1 -1 2 -3 1z" fill="#a01020" stroke="#600" stroke-width="0.600"/>

</svg>
<!-- MAP END -->
<!-- bottom dock area -->
<div class="abs" style="left:4px;top:403px;width:696px;height:2px;background:#fff"></div>
<div class="abs" style="left:4px;top:405px;width:696px;height:1px;background:#808080"></div>
<div class="abs" style="left:4px;top:406px;width:696px;height:1px;background:#404040"></div>
<div class="abs" style="left:4px;top:407px;width:695px;height:1px;background:#fff"></div>
<div class="abs" style="left:4px;top:407px;width:1px;height:165px;background:#fff"></div>
<div class="abs" style="left:4px;top:572px;width:696px;height:1px;background:#808080"></div>
<div class="abs" style="left:699px;top:407px;width:1px;height:166px;background:#808080"></div>
<div class="cbtn" style="left:7px;top:410px"><svg width="10" height="10" style="position:absolute;left:0;top:0" shape-rendering="crispEdges"><path d="M2 2h2v1h-2zM6 2h2v1h-2zM3 3h4v1h-4zM4 4h2v1h-2zM3 5h4v1h-4zM2 6h2v1h-2zM6 6h2v1h-2z" fill="#000"/></svg></div>
<div class="abs vhdl" style="left:10px;top:425px;height:145px"></div>
<div class="abs vhdl" style="left:13px;top:425px;height:145px"></div>
<div id="grid" class="abs sunken" style="left:23px;top:408px;width:676px;height:164px"><div class="sunken2" style="width:100%;height:100%;background:#fff"></div></div>
<div class="abs" style="left:25px;top:410px;width:656px;height:20px;background:#d4d0c8"></div>
<!-- grid cells -->
<div class="abs hdr" style="left:25px;top:410px;width:45px;height:20px"></div>
<div class="abs hdr" style="left:70px;top:410px;width:33px;height:20px"></div>
<div class="abs hdr" style="left:25px;top:430px;width:45px;height:20px"></div>
<div class="abs" style="left:70px;top:430px;width:33px;height:20px;background:#fff;border-right:1px solid #c0c0c0;border-bottom:1px solid #c0c0c0"></div>
<div class="abs hdr" style="left:25px;top:450px;width:45px;height:20px"></div>
<div class="abs" style="left:70px;top:450px;width:33px;height:20px;background:#fff;border-right:1px solid #c0c0c0;border-bottom:1px solid #c0c0c0"></div>
<div class="abs hdr" style="left:25px;top:470px;width:45px;height:20px"></div>
<div class="abs" style="left:70px;top:470px;width:33px;height:20px;background:#fff;border-right:1px solid #c0c0c0;border-bottom:1px solid #c0c0c0"></div>
<div class="abs hdr" style="left:25px;top:490px;width:45px;height:20px"></div>
<div class="abs" style="left:70px;top:490px;width:33px;height:20px;background:#fff;border-right:1px solid #c0c0c0;border-bottom:1px solid #c0c0c0"></div>
<div class="abs hdr" style="left:25px;top:510px;width:45px;height:20px"></div>
<div class="abs" style="left:70px;top:510px;width:33px;height:20px;background:#fff;border-right:1px solid #c0c0c0;border-bottom:1px solid #c0c0c0"></div>
<div class="abs hdr" style="left:25px;top:530px;width:45px;height:20px"></div>
<div class="abs" style="left:70px;top:530px;width:33px;height:20px;background:#fff;border-right:1px solid #c0c0c0;border-bottom:1px solid #c0c0c0"></div>
<div class="abs hdr" style="left:25px;top:550px;width:45px;height:20px"></div>
<div class="abs" style="left:70px;top:550px;width:33px;height:20px;background:#fff;border-right:1px solid #c0c0c0;border-bottom:1px solid #c0c0c0"></div>
<div class="abs" style="left:18px;top:420px;width:97px;height:40px;border-radius:50%;background:rgba(226,84,84,0.66);filter:blur(4.5px)"></div>
<div class="abs" style="left:70px;top:430px;width:32px;height:19px;background:#82a845"></div>
<span class="t" style="left:75px;top:413px;font-weight:bold;letter-spacing:0.5px;color:#200000">id</span>
<span class="t" style="left:30px;top:433px;font-weight:bold;letter-spacing:0.8px;color:#5a0808">578</span>
<span class="t" style="left:72px;width:29px;text-align:right;top:433px;color:#6a2a10">48</span>
<span class="t" style="left:30px;top:453px">579</span>
<span class="t" style="left:72px;width:29px;text-align:right;top:453px">480</span>
<span class="t" style="left:30px;top:473px">580</span>
<span class="t" style="left:72px;width:29px;text-align:right;top:473px">481</span>
<span class="t" style="left:30px;top:493px">581</span>
<span class="t" style="left:72px;width:29px;text-align:right;top:493px">482</span>
<span class="t" style="left:30px;top:513px">582</span>
<span class="t" style="left:72px;width:29px;text-align:right;top:513px">483</span>
<span class="t" style="left:30px;top:533px">583</span>
<span class="t" style="left:72px;width:29px;text-align:right;top:533px">484</span>
<span class="t" style="left:30px;top:553px">584</span>
<span class="t" style="left:72px;width:29px;text-align:right;top:553px">485</span>
<div class="abs dith" style="left:681px;top:410px;width:16px;height:160px"></div>
<div class="abs sbtn" style="left:681px;top:410px"><svg width="14" height="14" style="position:absolute;left:0;top:0"><path d="M3 8.500l3.500 -4 3.500 4z" fill="#000"/></svg></div>
<div class="abs sbtn" style="left:681px;top:554px"><svg width="14" height="14" style="position:absolute;left:0;top:0"><path d="M3 5l3.500 4 3.500 -4z" fill="#000"/></svg></div>
<div class="abs sbtn" style="left:681px;top:486px;height:9px"></div>
<svg class="abs" style="left:686px;top:579px" width="14" height="14"><path d="M13 1L1 13M13 5L5 13M13 9L9 13" stroke="#808080" stroke-width="1.300"/><path d="M13 2L2 13M13 6L6 13M13 10L10 13" stroke="#fff" stroke-width="1"/></svg>
<!-- status -->
<div class="t" style="left:10px;top:576px">Number of Rows: 1154, Pointed: 1, Queried: 0, Pointed and Queried: 0</div>
</body>
</html>
